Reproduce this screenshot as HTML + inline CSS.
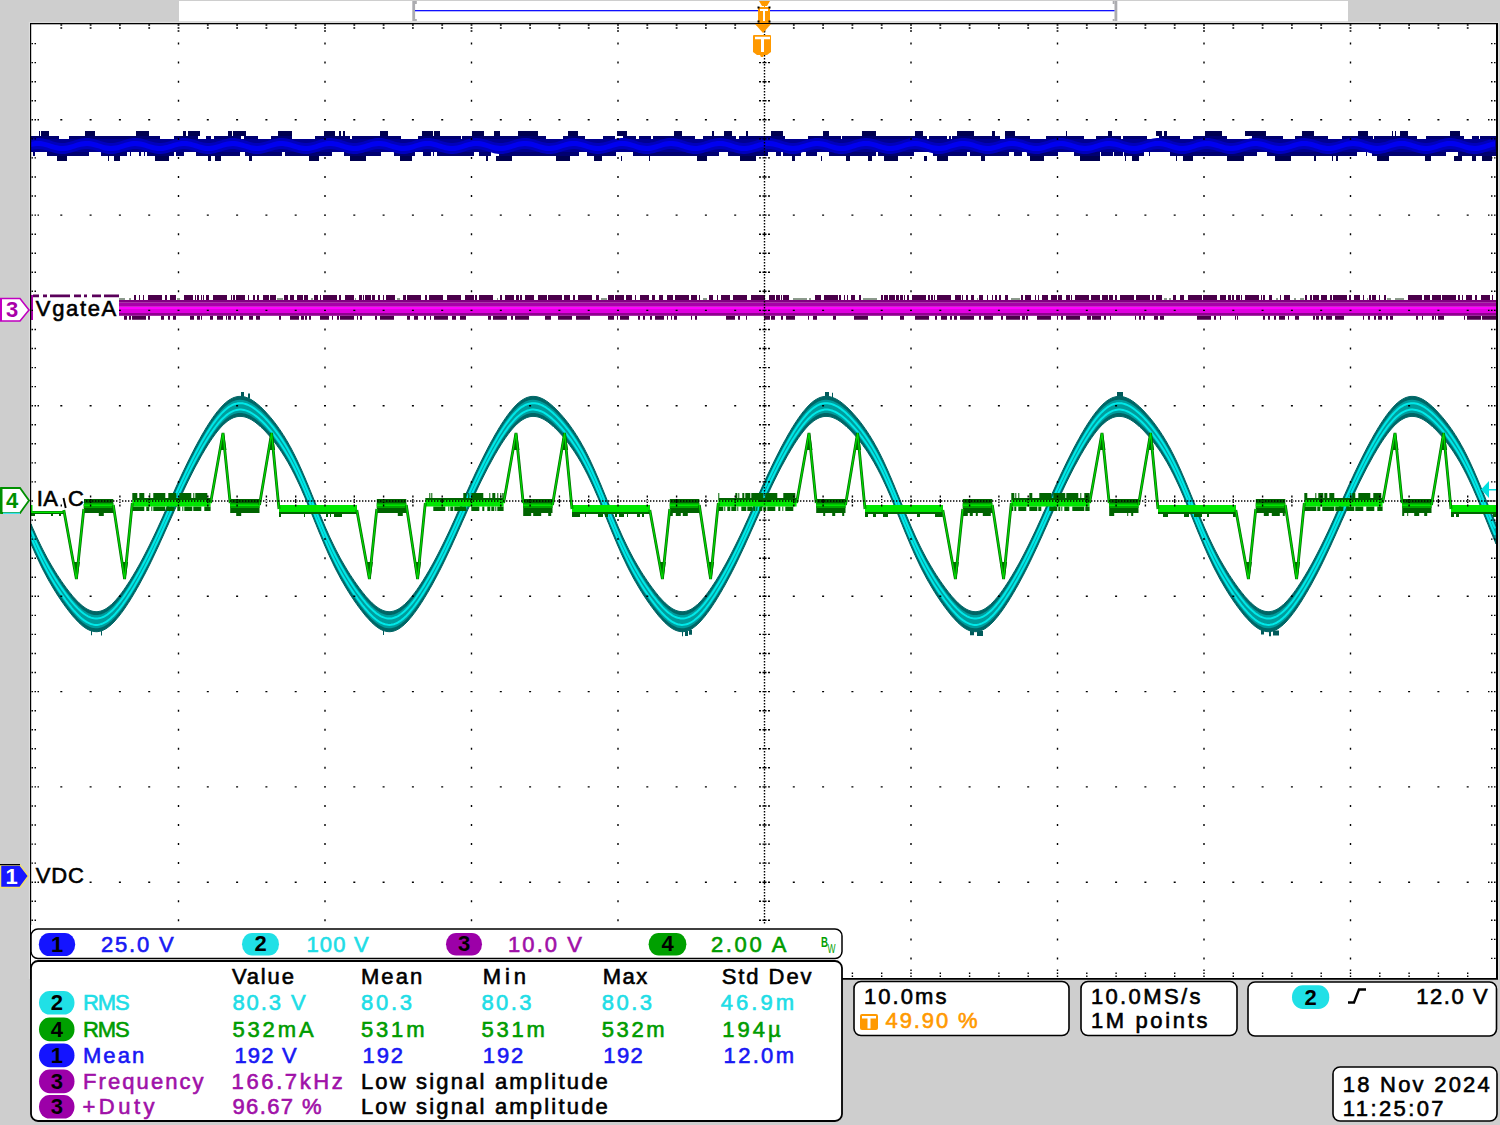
<!DOCTYPE html>
<html><head><meta charset="utf-8"><title>scope</title>
<style>
html,body{margin:0;padding:0;background:#cecece;}
body{width:1500px;height:1125px;overflow:hidden;position:relative;}
svg{position:absolute;left:0;top:0;display:block;}
text{font-family:"Liberation Sans",sans-serif;}
</style></head><body>
<svg width="1500" height="1125" viewBox="0 0 1500 1125"><rect x="0" y="0" width="1500" height="1125" fill="#cecece"/><rect x="179" y="1" width="1169" height="20" fill="#ffffff"/><rect x="179" y="21" width="1169" height="1" fill="#dcdcdc"/><rect x="412.3" y="1" width="2.8" height="20" fill="#acacb0"/><rect x="415" y="1" width="1.8" height="3" fill="#acacb0"/><rect x="415" y="19" width="1.8" height="2" fill="#acacb0"/><rect x="1114.5" y="1" width="2.8" height="20" fill="#acacb0"/><rect x="1112.7" y="1" width="1.8" height="3" fill="#acacb0"/><rect x="1112.7" y="19" width="1.8" height="2" fill="#acacb0"/><rect x="415" y="10" width="699.5" height="1.3" fill="#1010ff"/><rect x="30" y="23" width="1468" height="956" fill="#ffffff"/><rect x="29" y="21.8" width="1470" height="1.2" fill="#dddddd"/><rect x="28.8" y="22" width="1.2" height="957" fill="#dddddd"/><rect x="1498" y="22" width="1.2" height="957" fill="#dddddd"/><path fill="#000050" d="M39 131h1v5h-1zM41 131h2v5h-2zM43 131h4v5h-4zM47 131h2v5h-2zM85 131h10v5h-10zM136 131h3v5h-3zM139 131h10v5h-10zM183 131h1v5h-1zM184 131h2v5h-2zM188 131h4v5h-4zM192 131h8v5h-8zM228 131h4v5h-4zM233 131h4v5h-4zM237 131h1v5h-1zM238 131h8v5h-8zM278 131h4v5h-4zM282 131h6v5h-6zM288 131h1v5h-1zM289 131h3v5h-3zM324 131h8v5h-8zM332 131h3v5h-3zM339 131h2v5h-2zM343 131h2v5h-2zM380 131h8v5h-8zM422 131h1v5h-1zM423 131h2v5h-2zM425 131h1v5h-1zM426 131h1v5h-1zM427 131h6v5h-6zM434 131h6v5h-6zM472 131h3v5h-3zM475 131h1v5h-1zM476 131h8v5h-8zM494 131h6v5h-6zM518 131h10v5h-10zM528 131h10v5h-10zM568 131h10v5h-10zM617 131h3v5h-3zM620 131h1v5h-1zM621 131h2v5h-2zM623 131h4v5h-4zM674 131h8v5h-8zM712 131h2v5h-2zM724 131h8v5h-8zM746 131h2v5h-2zM771 131h6v5h-6zM777 131h6v5h-6zM823 131h6v5h-6zM862 131h6v5h-6zM868 131h8v5h-8zM915 131h8v5h-8zM957 131h3v5h-3zM960 131h6v5h-6zM966 131h8v5h-8zM992 131h3v5h-3zM1005 131h10v5h-10zM1066 131h1v5h-1zM1108 131h3v5h-3zM1111 131h1v5h-1zM1156 131h6v5h-6zM1164 131h3v5h-3zM1205 131h6v5h-6zM1211 131h3v5h-3zM1214 131h8v5h-8zM1245 131h2v5h-2zM1247 131h4v5h-4zM1251 131h3v5h-3zM1254 131h2v5h-2zM1256 131h10v5h-10zM1302 131h4v5h-4zM1306 131h8v5h-8zM1358 131h10v5h-10zM1392 131h1v5h-1zM1395 131h1v5h-1zM1400 131h8v5h-8zM1450 131h10v5h-10zM57 156h6v5h-6zM63 156h4v5h-4zM108 156h1v5h-1zM114 156h4v5h-4zM118 156h2v5h-2zM155 156h4v5h-4zM159 156h2v5h-2zM161 156h4v5h-4zM165 156h4v5h-4zM208 156h3v5h-3zM215 156h6v5h-6zM249 156h3v5h-3zM309 156h4v5h-4zM313 156h6v5h-6zM350 156h4v5h-4zM354 156h4v5h-4zM358 156h8v5h-8zM400 156h2v5h-2zM402 156h10v5h-10zM486 156h2v5h-2zM496 156h10v5h-10zM506 156h6v5h-6zM556 156h4v5h-4zM560 156h10v5h-10zM594 156h2v5h-2zM596 156h6v5h-6zM621 156h1v5h-1zM649 156h1v5h-1zM697 156h10v5h-10zM740 156h2v5h-2zM742 156h8v5h-8zM750 156h6v5h-6zM792 156h3v5h-3zM821 156h1v5h-1zM846 156h4v5h-4zM868 156h4v5h-4zM884 156h1v5h-1zM885 156h4v5h-4zM889 156h1v5h-1zM890 156h8v5h-8zM924 156h3v5h-3zM937 156h10v5h-10zM947 156h1v5h-1zM981 156h4v5h-4zM1030 156h8v5h-8zM1038 156h6v5h-6zM1080 156h10v5h-10zM1090 156h10v5h-10zM1125 156h1v5h-1zM1132 156h3v5h-3zM1135 156h3v5h-3zM1138 156h1v5h-1zM1176 156h1v5h-1zM1183 156h3v5h-3zM1186 156h3v5h-3zM1189 156h1v5h-1zM1190 156h3v5h-3zM1227 156h2v5h-2zM1229 156h4v5h-4zM1233 156h1v5h-1zM1234 156h10v5h-10zM1275 156h10v5h-10zM1285 156h2v5h-2zM1287 156h4v5h-4zM1314 156h2v5h-2zM1332 156h1v5h-1zM1336 156h2v5h-2zM1377 156h4v5h-4zM1381 156h8v5h-8zM1425 156h6v5h-6zM1454 156h8v5h-8zM1472 156h4v5h-4zM1482 156h10v5h-10z"/><path fill="#000070" d="M31 136h2v3h-2zM33 136h12v3h-12zM45 136h8v3h-8zM53 136h1v3h-1zM54 136h5v3h-5zM69 136h5v3h-5zM74 136h1v3h-1zM75 136h5v3h-5zM80 136h5v3h-5zM85 136h12v3h-12zM97 136h12v3h-12zM109 136h12v3h-12zM121 136h12v3h-12zM133 136h1v3h-1zM134 136h5v3h-5zM139 136h2v3h-2zM141 136h1v3h-1zM142 136h12v3h-12zM154 136h1v3h-1zM155 136h5v3h-5zM174 136h1v3h-1zM175 136h8v3h-8zM183 136h2v3h-2zM185 136h8v3h-8zM193 136h5v3h-5zM206 136h5v3h-5zM214 136h2v3h-2zM216 136h1v3h-1zM217 136h5v3h-5zM222 136h3v3h-3zM225 136h5v3h-5zM230 136h3v3h-3zM233 136h8v3h-8zM244 136h5v3h-5zM249 136h8v3h-8zM257 136h1v3h-1zM271 136h3v3h-3zM274 136h3v3h-3zM277 136h3v3h-3zM280 136h1v3h-1zM281 136h2v3h-2zM283 136h1v3h-1zM284 136h8v3h-8zM315 136h12v3h-12zM327 136h2v3h-2zM329 136h12v3h-12zM341 136h8v3h-8zM349 136h1v3h-1zM352 136h1v3h-1zM353 136h1v3h-1zM354 136h3v3h-3zM357 136h3v3h-3zM360 136h5v3h-5zM365 136h8v3h-8zM373 136h3v3h-3zM376 136h5v3h-5zM381 136h1v3h-1zM382 136h2v3h-2zM384 136h5v3h-5zM389 136h12v3h-12zM418 136h1v3h-1zM419 136h8v3h-8zM427 136h8v3h-8zM435 136h5v3h-5zM440 136h8v3h-8zM448 136h2v3h-2zM450 136h1v3h-1zM451 136h8v3h-8zM459 136h2v3h-2zM462 136h1v3h-1zM463 136h8v3h-8zM471 136h2v3h-2zM473 136h2v3h-2zM475 136h12v3h-12zM487 136h12v3h-12zM499 136h8v3h-8zM507 136h3v3h-3zM510 136h12v3h-12zM522 136h12v3h-12zM534 136h12v3h-12zM563 136h1v3h-1zM564 136h5v3h-5zM569 136h1v3h-1zM570 136h12v3h-12zM582 136h3v3h-3zM603 136h12v3h-12zM623 136h3v3h-3zM626 136h2v3h-2zM628 136h8v3h-8zM639 136h12v3h-12zM653 136h3v3h-3zM656 136h5v3h-5zM661 136h2v3h-2zM663 136h12v3h-12zM675 136h12v3h-12zM687 136h8v3h-8zM703 136h1v3h-1zM704 136h12v3h-12zM716 136h3v3h-3zM719 136h5v3h-5zM724 136h1v3h-1zM725 136h2v3h-2zM727 136h1v3h-1zM728 136h8v3h-8zM739 136h12v3h-12zM751 136h1v3h-1zM752 136h12v3h-12zM764 136h12v3h-12zM776 136h1v3h-1zM777 136h8v3h-8zM808 136h1v3h-1zM809 136h2v3h-2zM811 136h1v3h-1zM812 136h12v3h-12zM824 136h12v3h-12zM836 136h5v3h-5zM842 136h12v3h-12zM854 136h3v3h-3zM857 136h3v3h-3zM860 136h3v3h-3zM863 136h1v3h-1zM864 136h3v3h-3zM867 136h8v3h-8zM875 136h3v3h-3zM878 136h1v3h-1zM879 136h1v3h-1zM880 136h1v3h-1zM881 136h12v3h-12zM893 136h8v3h-8zM901 136h1v3h-1zM902 136h3v3h-3zM905 136h1v3h-1zM906 136h3v3h-3zM909 136h1v3h-1zM910 136h5v3h-5zM915 136h12v3h-12zM929 136h8v3h-8zM937 136h8v3h-8zM945 136h2v3h-2zM949 136h2v3h-2zM952 136h1v3h-1zM953 136h12v3h-12zM965 136h1v3h-1zM966 136h3v3h-3zM969 136h5v3h-5zM974 136h12v3h-12zM986 136h12v3h-12zM998 136h2v3h-2zM1005 136h8v3h-8zM1013 136h12v3h-12zM1025 136h5v3h-5zM1046 136h3v3h-3zM1049 136h8v3h-8zM1057 136h5v3h-5zM1062 136h12v3h-12zM1074 136h5v3h-5zM1079 136h3v3h-3zM1082 136h2v3h-2zM1096 136h2v3h-2zM1098 136h3v3h-3zM1101 136h12v3h-12zM1113 136h8v3h-8zM1123 136h12v3h-12zM1135 136h8v3h-8zM1143 136h2v3h-2zM1145 136h2v3h-2zM1159 136h2v3h-2zM1161 136h1v3h-1zM1162 136h2v3h-2zM1164 136h3v3h-3zM1167 136h5v3h-5zM1172 136h1v3h-1zM1173 136h1v3h-1zM1174 136h5v3h-5zM1179 136h1v3h-1zM1193 136h3v3h-3zM1196 136h2v3h-2zM1198 136h12v3h-12zM1210 136h12v3h-12zM1222 136h5v3h-5zM1252 136h12v3h-12zM1264 136h2v3h-2zM1266 136h12v3h-12zM1278 136h5v3h-5zM1295 136h5v3h-5zM1300 136h5v3h-5zM1305 136h12v3h-12zM1317 136h5v3h-5zM1322 136h1v3h-1zM1323 136h5v3h-5zM1342 136h3v3h-3zM1345 136h5v3h-5zM1350 136h1v3h-1zM1351 136h8v3h-8zM1359 136h12v3h-12zM1371 136h2v3h-2zM1374 136h5v3h-5zM1379 136h12v3h-12zM1391 136h1v3h-1zM1392 136h3v3h-3zM1395 136h5v3h-5zM1400 136h5v3h-5zM1405 136h12v3h-12zM1426 136h8v3h-8zM1434 136h1v3h-1zM1435 136h5v3h-5zM1440 136h1v3h-1zM1441 136h5v3h-5zM1446 136h12v3h-12zM1458 136h3v3h-3zM1461 136h3v3h-3zM1472 136h5v3h-5zM1477 136h2v3h-2zM1480 136h12v3h-12zM1492 136h4v3h-4zM33 152h2v4h-2zM47 152h5v4h-5zM52 152h3v4h-3zM55 152h12v4h-12zM67 152h5v4h-5zM72 152h2v4h-2zM74 152h5v4h-5zM79 152h5v4h-5zM84 152h5v4h-5zM101 152h3v4h-3zM104 152h3v4h-3zM107 152h5v4h-5zM112 152h12v4h-12zM124 152h3v4h-3zM130 152h1v4h-1zM139 152h2v4h-2zM144 152h1v4h-1zM147 152h12v4h-12zM159 152h8v4h-8zM167 152h2v4h-2zM169 152h2v4h-2zM171 152h3v4h-3zM176 152h8v4h-8zM196 152h1v4h-1zM197 152h8v4h-8zM205 152h3v4h-3zM208 152h12v4h-12zM220 152h1v4h-1zM221 152h5v4h-5zM226 152h1v4h-1zM227 152h3v4h-3zM230 152h2v4h-2zM232 152h8v4h-8zM245 152h12v4h-12zM257 152h5v4h-5zM262 152h8v4h-8zM270 152h1v4h-1zM271 152h3v4h-3zM274 152h8v4h-8zM285 152h3v4h-3zM288 152h12v4h-12zM300 152h12v4h-12zM312 152h12v4h-12zM324 152h8v4h-8zM344 152h3v4h-3zM347 152h1v4h-1zM348 152h5v4h-5zM353 152h2v4h-2zM355 152h12v4h-12zM367 152h2v4h-2zM369 152h12v4h-12zM394 152h2v4h-2zM396 152h3v4h-3zM399 152h8v4h-8zM407 152h3v4h-3zM410 152h5v4h-5zM423 152h8v4h-8zM433 152h1v4h-1zM437 152h2v4h-2zM439 152h12v4h-12zM451 152h1v4h-1zM452 152h8v4h-8zM460 152h8v4h-8zM468 152h5v4h-5zM473 152h1v4h-1zM479 152h12v4h-12zM499 152h8v4h-8zM507 152h2v4h-2zM509 152h12v4h-12zM521 152h12v4h-12zM533 152h1v4h-1zM534 152h5v4h-5zM539 152h2v4h-2zM541 152h2v4h-2zM543 152h5v4h-5zM548 152h12v4h-12zM560 152h2v4h-2zM562 152h8v4h-8zM570 152h3v4h-3zM573 152h1v4h-1zM574 152h5v4h-5zM587 152h1v4h-1zM588 152h8v4h-8zM596 152h1v4h-1zM597 152h5v4h-5zM602 152h5v4h-5zM607 152h1v4h-1zM608 152h8v4h-8zM633 152h8v4h-8zM641 152h12v4h-12zM653 152h2v4h-2zM655 152h5v4h-5zM660 152h12v4h-12zM672 152h1v4h-1zM673 152h1v4h-1zM674 152h1v4h-1zM675 152h8v4h-8zM683 152h12v4h-12zM695 152h1v4h-1zM696 152h12v4h-12zM708 152h2v4h-2zM710 152h1v4h-1zM711 152h8v4h-8zM728 152h1v4h-1zM729 152h12v4h-12zM741 152h8v4h-8zM749 152h3v4h-3zM752 152h8v4h-8zM760 152h5v4h-5zM765 152h3v4h-3zM776 152h5v4h-5zM783 152h1v4h-1zM784 152h12v4h-12zM796 152h5v4h-5zM806 152h8v4h-8zM814 152h3v4h-3zM829 152h8v4h-8zM837 152h8v4h-8zM845 152h1v4h-1zM846 152h8v4h-8zM854 152h8v4h-8zM862 152h2v4h-2zM864 152h12v4h-12zM878 152h3v4h-3zM881 152h3v4h-3zM884 152h5v4h-5zM889 152h1v4h-1zM890 152h2v4h-2zM892 152h8v4h-8zM900 152h8v4h-8zM908 152h5v4h-5zM913 152h1v4h-1zM933 152h2v4h-2zM935 152h1v4h-1zM936 152h5v4h-5zM941 152h3v4h-3zM944 152h1v4h-1zM945 152h5v4h-5zM950 152h8v4h-8zM958 152h1v4h-1zM959 152h8v4h-8zM970 152h8v4h-8zM978 152h8v4h-8zM986 152h2v4h-2zM988 152h1v4h-1zM989 152h12v4h-12zM1001 152h8v4h-8zM1014 152h2v4h-2zM1016 152h5v4h-5zM1021 152h1v4h-1zM1027 152h2v4h-2zM1029 152h1v4h-1zM1030 152h8v4h-8zM1038 152h1v4h-1zM1039 152h8v4h-8zM1047 152h8v4h-8zM1055 152h3v4h-3zM1074 152h3v4h-3zM1077 152h2v4h-2zM1079 152h1v4h-1zM1080 152h8v4h-8zM1088 152h12v4h-12zM1101 152h12v4h-12zM1114 152h1v4h-1zM1115 152h8v4h-8zM1124 152h12v4h-12zM1136 152h2v4h-2zM1138 152h2v4h-2zM1140 152h2v4h-2zM1142 152h2v4h-2zM1149 152h1v4h-1zM1170 152h5v4h-5zM1175 152h2v4h-2zM1177 152h1v4h-1zM1178 152h12v4h-12zM1190 152h8v4h-8zM1198 152h12v4h-12zM1210 152h3v4h-3zM1213 152h5v4h-5zM1218 152h5v4h-5zM1223 152h5v4h-5zM1228 152h2v4h-2zM1230 152h1v4h-1zM1231 152h2v4h-2zM1233 152h2v4h-2zM1235 152h2v4h-2zM1237 152h8v4h-8zM1245 152h12v4h-12zM1267 152h12v4h-12zM1279 152h3v4h-3zM1282 152h2v4h-2zM1284 152h12v4h-12zM1296 152h3v4h-3zM1299 152h1v4h-1zM1300 152h5v4h-5zM1305 152h2v4h-2zM1307 152h2v4h-2zM1309 152h5v4h-5zM1314 152h1v4h-1zM1315 152h3v4h-3zM1318 152h2v4h-2zM1320 152h1v4h-1zM1321 152h5v4h-5zM1326 152h8v4h-8zM1334 152h12v4h-12zM1346 152h8v4h-8zM1354 152h3v4h-3zM1366 152h1v4h-1zM1372 152h1v4h-1zM1373 152h3v4h-3zM1376 152h12v4h-12zM1388 152h8v4h-8zM1396 152h2v4h-2zM1398 152h8v4h-8zM1406 152h3v4h-3zM1409 152h5v4h-5zM1414 152h8v4h-8zM1422 152h2v4h-2zM1424 152h2v4h-2zM1426 152h2v4h-2zM1428 152h1v4h-1zM1429 152h12v4h-12zM1441 152h3v4h-3zM1444 152h2v4h-2zM1458 152h2v4h-2zM1460 152h2v4h-2zM1462 152h12v4h-12zM1474 152h5v4h-5zM1479 152h1v4h-1zM1480 152h3v4h-3zM1483 152h12v4h-12zM1495 152h1v4h-1z"/><rect x="31" y="139" width="1465" height="13" fill="#000090"/><path fill="#0000bc" d="M31 139L33 138.5L35 138.2L37 138L39 138L41 138.2L43 138.5L45 139L47 139.5L49 140.1L51 140.8L53 141.4L55 142L57 142.4L59 142.8L61 143L63 143L65 142.9L67 142.6L69 142.1L71 141.6L73 141L75 140.3L77 139.7L79 139.1L81 138.6L83 138.3L85 138.1L87 138L89 138.1L91 138.4L93 138.8L95 139.3L97 139.9L99 140.5L101 141.2L103 141.8L105 142.3L107 142.7L109 142.9L111 143L113 142.9L115 142.7L117 142.3L119 141.8L121 141.2L123 140.6L125 139.9L127 139.3L129 138.8L131 138.4L133 138.1L135 138L137 138.1L139 138.3L141 138.6L143 139.1L145 139.7L147 140.3L149 141L151 141.6L153 142.1L155 142.5L157 142.8L159 143L161 143L163 142.8L165 142.4L167 142L169 141.4L171 140.8L173 140.2L175 139.5L177 139L179 138.5L181 138.2L183 138L185 138L187 138.2L189 138.5L191 138.9L193 139.5L195 140.1L197 140.7L199 141.4L201 141.9L203 142.4L205 142.8L207 143L209 143L211 142.9L213 142.6L215 142.2L217 141.6L219 141L221 140.4L223 139.7L225 139.2L227 138.7L229 138.3L231 138.1L233 138L235 138.1L237 138.4L239 138.8L241 139.3L243 139.9L245 140.5L247 141.1L249 141.7L251 142.3L253 142.7L255 142.9L257 143L259 142.9L261 142.7L263 142.3L265 141.8L267 141.2L269 140.6L271 140L273 139.4L275 138.8L277 138.4L279 138.1L281 138L283 138L285 138.3L287 138.6L289 139.1L291 139.7L293 140.3L295 140.9L297 141.5L299 142.1L301 142.5L303 142.8L305 143L307 143L309 142.8L311 142.5L313 142L315 141.5L317 140.8L319 140.2L321 139.6L323 139L325 138.5L327 138.2L329 138L331 138L333 138.2L335 138.5L337 138.9L339 139.4L341 140.1L343 140.7L345 141.3L347 141.9L349 142.4L351 142.7L353 143L355 143L357 142.9L359 142.6L361 142.2L363 141.7L365 141.1L367 140.4L369 139.8L371 139.2L373 138.7L375 138.3L377 138.1L379 138L381 138.1L383 138.3L385 138.7L387 139.2L389 139.8L391 140.5L393 141.1L395 141.7L397 142.2L399 142.6L401 142.9L403 143L405 142.9L407 142.7L409 142.3L411 141.9L413 141.3L415 140.6L417 140L419 139.4L421 138.9L423 138.4L425 138.1L427 138L429 138L431 138.2L433 138.6L435 139.1L437 139.6L439 140.3L441 140.9L443 141.5L445 142.1L447 142.5L449 142.8L451 143L453 143L455 142.8L457 142.5L459 142L461 141.5L463 140.9L465 140.2L467 139.6L469 139L471 138.6L473 138.2L475 138L477 138L479 138.2L481 138.4L483 138.9L485 139.4L487 140L489 140.7L491 141.3L493 141.9L495 142.4L497 142.7L499 142.9L501 143L503 142.9L505 142.6L507 142.2L509 141.7L511 141.1L513 140.4L515 139.8L517 139.2L519 138.7L521 138.3L523 138.1L525 138L527 138.1L529 138.3L531 138.7L533 139.2L535 139.8L537 140.4L539 141.1L541 141.7L543 142.2L545 142.6L547 142.9L549 143L551 142.9L553 142.7L555 142.4L557 141.9L559 141.3L561 140.7L563 140L565 139.4L567 138.9L569 138.4L571 138.2L573 138L575 138L577 138.2L579 138.6L581 139L583 139.6L585 140.2L587 140.9L589 141.5L591 142L593 142.5L595 142.8L597 143L599 143L601 142.8L603 142.5L605 142.1L607 141.5L609 140.9L611 140.3L613 139.6L615 139.1L617 138.6L619 138.2L621 138L623 138L625 138.1L627 138.4L629 138.9L631 139.4L633 140L635 140.6L637 141.3L639 141.9L641 142.3L643 142.7L645 142.9L647 143L649 142.9L651 142.6L653 142.2L655 141.7L657 141.1L659 140.5L661 139.8L663 139.2L665 138.7L667 138.3L669 138.1L671 138L673 138.1L675 138.3L677 138.7L679 139.2L681 139.8L683 140.4L685 141.1L687 141.7L689 142.2L691 142.6L693 142.9L695 143L697 143L699 142.7L701 142.4L703 141.9L705 141.3L707 140.7L709 140.1L711 139.4L713 138.9L715 138.5L717 138.2L719 138L721 138L723 138.2L725 138.5L727 139L729 139.6L731 140.2L733 140.8L735 141.5L737 142L739 142.5L741 142.8L743 143L745 143L747 142.8L749 142.5L751 142.1L753 141.5L755 140.9L757 140.3L759 139.7L761 139.1L763 138.6L765 138.3L767 138L769 138L771 138.1L773 138.4L775 138.8L777 139.4L779 140L781 140.6L783 141.2L785 141.8L787 142.3L789 142.7L791 142.9L793 143L795 142.9L797 142.7L799 142.3L801 141.7L803 141.1L805 140.5L807 139.9L809 139.3L811 138.8L813 138.4L815 138.1L817 138L819 138.1L821 138.3L823 138.7L825 139.2L827 139.7L829 140.4L831 141L833 141.6L835 142.2L837 142.6L839 142.9L841 143L843 143L845 142.8L847 142.4L849 141.9L851 141.4L853 140.7L855 140.1L857 139.5L859 138.9L861 138.5L863 138.2L865 138L867 138L869 138.2L871 138.5L873 139L875 139.5L877 140.2L879 140.8L881 141.4L883 142L885 142.4L887 142.8L889 143L891 143L893 142.8L895 142.5L897 142.1L899 141.6L901 141L903 140.3L905 139.7L907 139.1L909 138.6L911 138.3L913 138.1L915 138L917 138.1L919 138.4L921 138.8L923 139.3L925 139.9L927 140.6L929 141.2L931 141.8L933 142.3L935 142.7L937 142.9L939 143L941 142.9L943 142.7L945 142.3L947 141.8L949 141.2L951 140.5L953 139.9L955 139.3L957 138.8L959 138.4L961 138.1L963 138L965 138.1L967 138.3L969 138.6L971 139.1L973 139.7L975 140.3L977 141L979 141.6L981 142.1L983 142.6L985 142.9L987 143L989 143L991 142.8L993 142.4L995 142L997 141.4L999 140.8L1001 140.1L1003 139.5L1005 139L1007 138.5L1009 138.2L1011 138L1013 138L1015 138.2L1017 138.5L1019 139L1021 139.5L1023 140.1L1025 140.8L1027 141.4L1029 142L1031 142.4L1033 142.8L1035 143L1037 143L1039 142.9L1041 142.6L1043 142.1L1045 141.6L1047 141L1049 140.3L1051 139.7L1053 139.1L1055 138.6L1057 138.3L1059 138.1L1061 138L1063 138.1L1065 138.4L1067 138.8L1069 139.3L1071 139.9L1073 140.5L1075 141.2L1077 141.8L1079 142.3L1081 142.7L1083 142.9L1085 143L1087 142.9L1089 142.7L1091 142.3L1093 141.8L1095 141.2L1097 140.6L1099 139.9L1101 139.3L1103 138.8L1105 138.4L1107 138.1L1109 138L1111 138.1L1113 138.3L1115 138.6L1117 139.1L1119 139.7L1121 140.3L1123 141L1125 141.6L1127 142.1L1129 142.5L1131 142.8L1133 143L1135 143L1137 142.8L1139 142.4L1141 142L1143 141.4L1145 140.8L1147 140.2L1149 139.5L1151 139L1153 138.5L1155 138.2L1157 138L1159 138L1161 138.2L1163 138.5L1165 138.9L1167 139.5L1169 140.1L1171 140.7L1173 141.4L1175 141.9L1177 142.4L1179 142.8L1181 143L1183 143L1185 142.9L1187 142.6L1189 142.2L1191 141.6L1193 141L1195 140.4L1197 139.7L1199 139.2L1201 138.7L1203 138.3L1205 138.1L1207 138L1209 138.1L1211 138.4L1213 138.8L1215 139.3L1217 139.9L1219 140.5L1221 141.1L1223 141.7L1225 142.3L1227 142.7L1229 142.9L1231 143L1233 142.9L1235 142.7L1237 142.3L1239 141.8L1241 141.2L1243 140.6L1245 140L1247 139.4L1249 138.8L1251 138.4L1253 138.1L1255 138L1257 138L1259 138.3L1261 138.6L1263 139.1L1265 139.7L1267 140.3L1269 140.9L1271 141.5L1273 142.1L1275 142.5L1277 142.8L1279 143L1281 143L1283 142.8L1285 142.5L1287 142L1289 141.5L1291 140.8L1293 140.2L1295 139.6L1297 139L1299 138.5L1301 138.2L1303 138L1305 138L1307 138.2L1309 138.5L1311 138.9L1313 139.4L1315 140.1L1317 140.7L1319 141.3L1321 141.9L1323 142.4L1325 142.7L1327 143L1329 143L1331 142.9L1333 142.6L1335 142.2L1337 141.7L1339 141.1L1341 140.4L1343 139.8L1345 139.2L1347 138.7L1349 138.3L1351 138.1L1353 138L1355 138.1L1357 138.3L1359 138.7L1361 139.2L1363 139.8L1365 140.5L1367 141.1L1369 141.7L1371 142.2L1373 142.6L1375 142.9L1377 143L1379 142.9L1381 142.7L1383 142.3L1385 141.9L1387 141.3L1389 140.6L1391 140L1393 139.4L1395 138.9L1397 138.4L1399 138.1L1401 138L1403 138L1405 138.2L1407 138.6L1409 139.1L1411 139.6L1413 140.3L1415 140.9L1417 141.5L1419 142.1L1421 142.5L1423 142.8L1425 143L1427 143L1429 142.8L1431 142.5L1433 142L1435 141.5L1437 140.9L1439 140.2L1441 139.6L1443 139L1445 138.6L1447 138.2L1449 138L1451 138L1453 138.2L1455 138.4L1457 138.9L1459 139.4L1461 140L1463 140.7L1465 141.3L1467 141.9L1469 142.4L1471 142.7L1473 142.9L1475 143L1477 142.9L1479 142.6L1481 142.2L1483 141.7L1485 141.1L1487 140.4L1489 139.8L1491 139.2L1493 138.7L1495 138.3L1495 149.3L1493 149.7L1491 150.2L1489 150.8L1487 151.4L1485 152.1L1483 152.7L1481 153.2L1479 153.6L1477 153.9L1475 154L1473 153.9L1471 153.7L1469 153.4L1467 152.9L1465 152.3L1463 151.7L1461 151L1459 150.4L1457 149.9L1455 149.4L1453 149.2L1451 149L1449 149L1447 149.2L1445 149.6L1443 150L1441 150.6L1439 151.2L1437 151.9L1435 152.5L1433 153L1431 153.5L1429 153.8L1427 154L1425 154L1423 153.8L1421 153.5L1419 153.1L1417 152.5L1415 151.9L1413 151.3L1411 150.6L1409 150.1L1407 149.6L1405 149.2L1403 149L1401 149L1399 149.1L1397 149.4L1395 149.9L1393 150.4L1391 151L1389 151.6L1387 152.3L1385 152.9L1383 153.3L1381 153.7L1379 153.9L1377 154L1375 153.9L1373 153.6L1371 153.2L1369 152.7L1367 152.1L1365 151.5L1363 150.8L1361 150.2L1359 149.7L1357 149.3L1355 149.1L1353 149L1351 149.1L1349 149.3L1347 149.7L1345 150.2L1343 150.8L1341 151.4L1339 152.1L1337 152.7L1335 153.2L1333 153.6L1331 153.9L1329 154L1327 154L1325 153.7L1323 153.4L1321 152.9L1319 152.3L1317 151.7L1315 151.1L1313 150.4L1311 149.9L1309 149.5L1307 149.2L1305 149L1303 149L1301 149.2L1299 149.5L1297 150L1295 150.6L1293 151.2L1291 151.8L1289 152.5L1287 153L1285 153.5L1283 153.8L1281 154L1279 154L1277 153.8L1275 153.5L1273 153.1L1271 152.5L1269 151.9L1267 151.3L1265 150.7L1263 150.1L1261 149.6L1259 149.3L1257 149L1255 149L1253 149.1L1251 149.4L1249 149.8L1247 150.4L1245 151L1243 151.6L1241 152.2L1239 152.8L1237 153.3L1235 153.7L1233 153.9L1231 154L1229 153.9L1227 153.7L1225 153.3L1223 152.7L1221 152.1L1219 151.5L1217 150.9L1215 150.3L1213 149.8L1211 149.4L1209 149.1L1207 149L1205 149.1L1203 149.3L1201 149.7L1199 150.2L1197 150.7L1195 151.4L1193 152L1191 152.6L1189 153.2L1187 153.6L1185 153.9L1183 154L1181 154L1179 153.8L1177 153.4L1175 152.9L1173 152.4L1171 151.7L1169 151.1L1167 150.5L1165 149.9L1163 149.5L1161 149.2L1159 149L1157 149L1155 149.2L1153 149.5L1151 150L1149 150.5L1147 151.2L1145 151.8L1143 152.4L1141 153L1139 153.4L1137 153.8L1135 154L1133 154L1131 153.8L1129 153.5L1127 153.1L1125 152.6L1123 152L1121 151.3L1119 150.7L1117 150.1L1115 149.6L1113 149.3L1111 149.1L1109 149L1107 149.1L1105 149.4L1103 149.8L1101 150.3L1099 150.9L1097 151.6L1095 152.2L1093 152.8L1091 153.3L1089 153.7L1087 153.9L1085 154L1083 153.9L1081 153.7L1079 153.3L1077 152.8L1075 152.2L1073 151.5L1071 150.9L1069 150.3L1067 149.8L1065 149.4L1063 149.1L1061 149L1059 149.1L1057 149.3L1055 149.6L1053 150.1L1051 150.7L1049 151.3L1047 152L1045 152.6L1043 153.1L1041 153.6L1039 153.9L1037 154L1035 154L1033 153.8L1031 153.4L1029 153L1027 152.4L1025 151.8L1023 151.1L1021 150.5L1019 150L1017 149.5L1015 149.2L1013 149L1011 149L1009 149.2L1007 149.5L1005 150L1003 150.5L1001 151.1L999 151.8L997 152.4L995 153L993 153.4L991 153.8L989 154L987 154L985 153.9L983 153.6L981 153.1L979 152.6L977 152L975 151.3L973 150.7L971 150.1L969 149.6L967 149.3L965 149.1L963 149L961 149.1L959 149.4L957 149.8L955 150.3L953 150.9L951 151.5L949 152.2L947 152.8L945 153.3L943 153.7L941 153.9L939 154L937 153.9L935 153.7L933 153.3L931 152.8L929 152.2L927 151.6L925 150.9L923 150.3L921 149.8L919 149.4L917 149.1L915 149L913 149.1L911 149.3L909 149.6L907 150.1L905 150.7L903 151.3L901 152L899 152.6L897 153.1L895 153.5L893 153.8L891 154L889 154L887 153.8L885 153.4L883 153L881 152.4L879 151.8L877 151.2L875 150.5L873 150L871 149.5L869 149.2L867 149L865 149L863 149.2L861 149.5L859 149.9L857 150.5L855 151.1L853 151.7L851 152.4L849 152.9L847 153.4L845 153.8L843 154L841 154L839 153.9L837 153.6L835 153.2L833 152.6L831 152L829 151.4L827 150.7L825 150.2L823 149.7L821 149.3L819 149.1L817 149L815 149.1L813 149.4L811 149.8L809 150.3L807 150.9L805 151.5L803 152.1L801 152.7L799 153.3L797 153.7L795 153.9L793 154L791 153.9L789 153.7L787 153.3L785 152.8L783 152.2L781 151.6L779 151L777 150.4L775 149.8L773 149.4L771 149.1L769 149L767 149L765 149.3L763 149.6L761 150.1L759 150.7L757 151.3L755 151.9L753 152.5L751 153.1L749 153.5L747 153.8L745 154L743 154L741 153.8L739 153.5L737 153L735 152.5L733 151.8L731 151.2L729 150.6L727 150L725 149.5L723 149.2L721 149L719 149L717 149.2L715 149.5L713 149.9L711 150.4L709 151.1L707 151.7L705 152.3L703 152.9L701 153.4L699 153.7L697 154L695 154L693 153.9L691 153.6L689 153.2L687 152.7L685 152.1L683 151.4L681 150.8L679 150.2L677 149.7L675 149.3L673 149.1L671 149L669 149.1L667 149.3L665 149.7L663 150.2L661 150.8L659 151.5L657 152.1L655 152.7L653 153.2L651 153.6L649 153.9L647 154L645 153.9L643 153.7L641 153.3L639 152.9L637 152.3L635 151.6L633 151L631 150.4L629 149.9L627 149.4L625 149.1L623 149L621 149L619 149.2L617 149.6L615 150.1L613 150.6L611 151.3L609 151.9L607 152.5L605 153.1L603 153.5L601 153.8L599 154L597 154L595 153.8L593 153.5L591 153L589 152.5L587 151.9L585 151.2L583 150.6L581 150L579 149.6L577 149.2L575 149L573 149L571 149.2L569 149.4L567 149.9L565 150.4L563 151L561 151.7L559 152.3L557 152.9L555 153.4L553 153.7L551 153.9L549 154L547 153.9L545 153.6L543 153.2L541 152.7L539 152.1L537 151.4L535 150.8L533 150.2L531 149.7L529 149.3L527 149.1L525 149L523 149.1L521 149.3L519 149.7L517 150.2L515 150.8L513 151.4L511 152.1L509 152.7L507 153.2L505 153.6L503 153.9L501 154L499 153.9L497 153.7L495 153.4L493 152.9L491 152.3L489 151.7L487 151L485 150.4L483 149.9L481 149.4L479 149.2L477 149L475 149L473 149.2L471 149.6L469 150L467 150.6L465 151.2L463 151.9L461 152.5L459 153L457 153.5L455 153.8L453 154L451 154L449 153.8L447 153.5L445 153.1L443 152.5L441 151.9L439 151.3L437 150.6L435 150.1L433 149.6L431 149.2L429 149L427 149L425 149.1L423 149.4L421 149.9L419 150.4L417 151L415 151.6L413 152.3L411 152.9L409 153.3L407 153.7L405 153.9L403 154L401 153.9L399 153.6L397 153.2L395 152.7L393 152.1L391 151.5L389 150.8L387 150.2L385 149.7L383 149.3L381 149.1L379 149L377 149.1L375 149.3L373 149.7L371 150.2L369 150.8L367 151.4L365 152.1L363 152.7L361 153.2L359 153.6L357 153.9L355 154L353 154L351 153.7L349 153.4L347 152.9L345 152.3L343 151.7L341 151.1L339 150.4L337 149.9L335 149.5L333 149.2L331 149L329 149L327 149.2L325 149.5L323 150L321 150.6L319 151.2L317 151.8L315 152.5L313 153L311 153.5L309 153.8L307 154L305 154L303 153.8L301 153.5L299 153.1L297 152.5L295 151.9L293 151.3L291 150.7L289 150.1L287 149.6L285 149.3L283 149L281 149L279 149.1L277 149.4L275 149.8L273 150.4L271 151L269 151.6L267 152.2L265 152.8L263 153.3L261 153.7L259 153.9L257 154L255 153.9L253 153.7L251 153.3L249 152.7L247 152.1L245 151.5L243 150.9L241 150.3L239 149.8L237 149.4L235 149.1L233 149L231 149.1L229 149.3L227 149.7L225 150.2L223 150.7L221 151.4L219 152L217 152.6L215 153.2L213 153.6L211 153.9L209 154L207 154L205 153.8L203 153.4L201 152.9L199 152.4L197 151.7L195 151.1L193 150.5L191 149.9L189 149.5L187 149.2L185 149L183 149L181 149.2L179 149.5L177 150L175 150.5L173 151.2L171 151.8L169 152.4L167 153L165 153.4L163 153.8L161 154L159 154L157 153.8L155 153.5L153 153.1L151 152.6L149 152L147 151.3L145 150.7L143 150.1L141 149.6L139 149.3L137 149.1L135 149L133 149.1L131 149.4L129 149.8L127 150.3L125 150.9L123 151.6L121 152.2L119 152.8L117 153.3L115 153.7L113 153.9L111 154L109 153.9L107 153.7L105 153.3L103 152.8L101 152.2L99 151.5L97 150.9L95 150.3L93 149.8L91 149.4L89 149.1L87 149L85 149.1L83 149.3L81 149.6L79 150.1L77 150.7L75 151.3L73 152L71 152.6L69 153.1L67 153.6L65 153.9L63 154L61 154L59 153.8L57 153.4L55 153L53 152.4L51 151.8L49 151.1L47 150.5L45 150L43 149.5L41 149.2L39 149L37 149L35 149.2L33 149.5L31 150Z"/><path fill="#0000f0" d="M31 141.9L33 141.4L35 141.1L37 140.9L39 140.9L41 141.1L43 141.4L45 141.9L47 142.4L49 143L51 143.7L53 144.3L55 144.9L57 145.3L59 145.7L61 145.9L63 145.9L65 145.8L67 145.5L69 145L71 144.5L73 143.9L75 143.2L77 142.6L79 142L81 141.5L83 141.2L85 141L87 140.9L89 141L91 141.3L93 141.7L95 142.2L97 142.8L99 143.4L101 144.1L103 144.7L105 145.2L107 145.6L109 145.8L111 145.9L113 145.8L115 145.6L117 145.2L119 144.7L121 144.1L123 143.5L125 142.8L127 142.2L129 141.7L131 141.3L133 141L135 140.9L137 141L139 141.2L141 141.5L143 142L145 142.6L147 143.2L149 143.9L151 144.5L153 145L155 145.4L157 145.7L159 145.9L161 145.9L163 145.7L165 145.3L167 144.9L169 144.3L171 143.7L173 143.1L175 142.4L177 141.9L179 141.4L181 141.1L183 140.9L185 140.9L187 141.1L189 141.4L191 141.8L193 142.4L195 143L197 143.6L199 144.3L201 144.8L203 145.3L205 145.7L207 145.9L209 145.9L211 145.8L213 145.5L215 145.1L217 144.5L219 143.9L221 143.3L223 142.6L225 142.1L227 141.6L229 141.2L231 141L233 140.9L235 141L237 141.3L239 141.7L241 142.2L243 142.8L245 143.4L247 144L249 144.6L251 145.2L253 145.6L255 145.8L257 145.9L259 145.8L261 145.6L263 145.2L265 144.7L267 144.1L269 143.5L271 142.9L273 142.3L275 141.7L277 141.3L279 141L281 140.9L283 140.9L285 141.2L287 141.5L289 142L291 142.6L293 143.2L295 143.8L297 144.4L299 145L301 145.4L303 145.7L305 145.9L307 145.9L309 145.7L311 145.4L313 144.9L315 144.4L317 143.7L319 143.1L321 142.5L323 141.9L325 141.4L327 141.1L329 140.9L331 140.9L333 141.1L335 141.4L337 141.8L339 142.3L341 143L343 143.6L345 144.2L347 144.8L349 145.3L351 145.6L353 145.9L355 145.9L357 145.8L359 145.5L361 145.1L363 144.6L365 144L367 143.3L369 142.7L371 142.1L373 141.6L375 141.2L377 141L379 140.9L381 141L383 141.2L385 141.6L387 142.1L389 142.7L391 143.4L393 144L395 144.6L397 145.1L399 145.5L401 145.8L403 145.9L405 145.8L407 145.6L409 145.2L411 144.8L413 144.2L415 143.5L417 142.9L419 142.3L421 141.8L423 141.3L425 141L427 140.9L429 140.9L431 141.1L433 141.5L435 142L437 142.5L439 143.2L441 143.8L443 144.4L445 145L447 145.4L449 145.7L451 145.9L453 145.9L455 145.7L457 145.4L459 144.9L461 144.4L463 143.8L465 143.1L467 142.5L469 141.9L471 141.5L473 141.1L475 140.9L477 140.9L479 141.1L481 141.3L483 141.8L485 142.3L487 142.9L489 143.6L491 144.2L493 144.8L495 145.3L497 145.6L499 145.8L501 145.9L503 145.8L505 145.5L507 145.1L509 144.6L511 144L513 143.3L515 142.7L517 142.1L519 141.6L521 141.2L523 141L525 140.9L527 141L529 141.2L531 141.6L533 142.1L535 142.7L537 143.3L539 144L541 144.6L543 145.1L545 145.5L547 145.8L549 145.9L551 145.8L553 145.6L555 145.3L557 144.8L559 144.2L561 143.6L563 142.9L565 142.3L567 141.8L569 141.3L571 141.1L573 140.9L575 140.9L577 141.1L579 141.5L581 141.9L583 142.5L585 143.1L587 143.8L589 144.4L591 144.9L593 145.4L595 145.7L597 145.9L599 145.9L601 145.7L603 145.4L605 145L607 144.4L609 143.8L611 143.2L613 142.5L615 142L617 141.5L619 141.1L621 140.9L623 140.9L625 141L627 141.3L629 141.8L631 142.3L633 142.9L635 143.5L637 144.2L639 144.8L641 145.2L643 145.6L645 145.8L647 145.9L649 145.8L651 145.5L653 145.1L655 144.6L657 144L659 143.4L661 142.7L663 142.1L665 141.6L667 141.2L669 141L671 140.9L673 141L675 141.2L677 141.6L679 142.1L681 142.7L683 143.3L685 144L687 144.6L689 145.1L691 145.5L693 145.8L695 145.9L697 145.9L699 145.6L701 145.3L703 144.8L705 144.2L707 143.6L709 143L711 142.3L713 141.8L715 141.4L717 141.1L719 140.9L721 140.9L723 141.1L725 141.4L727 141.9L729 142.5L731 143.1L733 143.7L735 144.4L737 144.9L739 145.4L741 145.7L743 145.9L745 145.9L747 145.7L749 145.4L751 145L753 144.4L755 143.8L757 143.2L759 142.6L761 142L763 141.5L765 141.2L767 140.9L769 140.9L771 141L773 141.3L775 141.7L777 142.3L779 142.9L781 143.5L783 144.1L785 144.7L787 145.2L789 145.6L791 145.8L793 145.9L795 145.8L797 145.6L799 145.2L801 144.6L803 144L805 143.4L807 142.8L809 142.2L811 141.7L813 141.3L815 141L817 140.9L819 141L821 141.2L823 141.6L825 142.1L827 142.6L829 143.3L831 143.9L833 144.5L835 145.1L837 145.5L839 145.8L841 145.9L843 145.9L845 145.7L847 145.3L849 144.8L851 144.3L853 143.6L855 143L857 142.4L859 141.8L861 141.4L863 141.1L865 140.9L867 140.9L869 141.1L871 141.4L873 141.9L875 142.4L877 143.1L879 143.7L881 144.3L883 144.9L885 145.3L887 145.7L889 145.9L891 145.9L893 145.7L895 145.4L897 145L899 144.5L901 143.9L903 143.2L905 142.6L907 142L909 141.5L911 141.2L913 141L915 140.9L917 141L919 141.3L921 141.7L923 142.2L925 142.8L927 143.5L929 144.1L931 144.7L933 145.2L935 145.6L937 145.8L939 145.9L941 145.8L943 145.6L945 145.2L947 144.7L949 144.1L951 143.4L953 142.8L955 142.2L957 141.7L959 141.3L961 141L963 140.9L965 141L967 141.2L969 141.5L971 142L973 142.6L975 143.2L977 143.9L979 144.5L981 145L983 145.5L985 145.8L987 145.9L989 145.9L991 145.7L993 145.3L995 144.9L997 144.3L999 143.7L1001 143L1003 142.4L1005 141.9L1007 141.4L1009 141.1L1011 140.9L1013 140.9L1015 141.1L1017 141.4L1019 141.9L1021 142.4L1023 143L1025 143.7L1027 144.3L1029 144.9L1031 145.3L1033 145.7L1035 145.9L1037 145.9L1039 145.8L1041 145.5L1043 145L1045 144.5L1047 143.9L1049 143.2L1051 142.6L1053 142L1055 141.5L1057 141.2L1059 141L1061 140.9L1063 141L1065 141.3L1067 141.7L1069 142.2L1071 142.8L1073 143.4L1075 144.1L1077 144.7L1079 145.2L1081 145.6L1083 145.8L1085 145.9L1087 145.8L1089 145.6L1091 145.2L1093 144.7L1095 144.1L1097 143.5L1099 142.8L1101 142.2L1103 141.7L1105 141.3L1107 141L1109 140.9L1111 141L1113 141.2L1115 141.5L1117 142L1119 142.6L1121 143.2L1123 143.9L1125 144.5L1127 145L1129 145.4L1131 145.7L1133 145.9L1135 145.9L1137 145.7L1139 145.3L1141 144.9L1143 144.3L1145 143.7L1147 143.1L1149 142.4L1151 141.9L1153 141.4L1155 141.1L1157 140.9L1159 140.9L1161 141.1L1163 141.4L1165 141.8L1167 142.4L1169 143L1171 143.6L1173 144.3L1175 144.8L1177 145.3L1179 145.7L1181 145.9L1183 145.9L1185 145.8L1187 145.5L1189 145.1L1191 144.5L1193 143.9L1195 143.3L1197 142.6L1199 142.1L1201 141.6L1203 141.2L1205 141L1207 140.9L1209 141L1211 141.3L1213 141.7L1215 142.2L1217 142.8L1219 143.4L1221 144L1223 144.6L1225 145.2L1227 145.6L1229 145.8L1231 145.9L1233 145.8L1235 145.6L1237 145.2L1239 144.7L1241 144.1L1243 143.5L1245 142.9L1247 142.3L1249 141.7L1251 141.3L1253 141L1255 140.9L1257 140.9L1259 141.2L1261 141.5L1263 142L1265 142.6L1267 143.2L1269 143.8L1271 144.4L1273 145L1275 145.4L1277 145.7L1279 145.9L1281 145.9L1283 145.7L1285 145.4L1287 144.9L1289 144.4L1291 143.7L1293 143.1L1295 142.5L1297 141.9L1299 141.4L1301 141.1L1303 140.9L1305 140.9L1307 141.1L1309 141.4L1311 141.8L1313 142.3L1315 143L1317 143.6L1319 144.2L1321 144.8L1323 145.3L1325 145.6L1327 145.9L1329 145.9L1331 145.8L1333 145.5L1335 145.1L1337 144.6L1339 144L1341 143.3L1343 142.7L1345 142.1L1347 141.6L1349 141.2L1351 141L1353 140.9L1355 141L1357 141.2L1359 141.6L1361 142.1L1363 142.7L1365 143.4L1367 144L1369 144.6L1371 145.1L1373 145.5L1375 145.8L1377 145.9L1379 145.8L1381 145.6L1383 145.2L1385 144.8L1387 144.2L1389 143.5L1391 142.9L1393 142.3L1395 141.8L1397 141.3L1399 141L1401 140.9L1403 140.9L1405 141.1L1407 141.5L1409 142L1411 142.5L1413 143.2L1415 143.8L1417 144.4L1419 145L1421 145.4L1423 145.7L1425 145.9L1427 145.9L1429 145.7L1431 145.4L1433 144.9L1435 144.4L1437 143.8L1439 143.1L1441 142.5L1443 141.9L1445 141.5L1447 141.1L1449 140.9L1451 140.9L1453 141.1L1455 141.3L1457 141.8L1459 142.3L1461 142.9L1463 143.6L1465 144.2L1467 144.8L1469 145.3L1471 145.6L1473 145.8L1475 145.9L1477 145.8L1479 145.5L1481 145.1L1483 144.6L1485 144L1487 143.3L1489 142.7L1491 142.1L1493 141.6L1495 141.2L1495 146.4L1493 146.8L1491 147.3L1489 147.9L1487 148.5L1485 149.2L1483 149.8L1481 150.3L1479 150.7L1477 151L1475 151.1L1473 151L1471 150.8L1469 150.5L1467 150L1465 149.4L1463 148.8L1461 148.1L1459 147.5L1457 147L1455 146.5L1453 146.3L1451 146.1L1449 146.1L1447 146.3L1445 146.7L1443 147.1L1441 147.7L1439 148.3L1437 149L1435 149.6L1433 150.1L1431 150.6L1429 150.9L1427 151.1L1425 151.1L1423 150.9L1421 150.6L1419 150.2L1417 149.6L1415 149L1413 148.4L1411 147.7L1409 147.2L1407 146.7L1405 146.3L1403 146.1L1401 146.1L1399 146.2L1397 146.5L1395 147L1393 147.5L1391 148.1L1389 148.7L1387 149.4L1385 150L1383 150.4L1381 150.8L1379 151L1377 151.1L1375 151L1373 150.7L1371 150.3L1369 149.8L1367 149.2L1365 148.6L1363 147.9L1361 147.3L1359 146.8L1357 146.4L1355 146.2L1353 146.1L1351 146.2L1349 146.4L1347 146.8L1345 147.3L1343 147.9L1341 148.5L1339 149.2L1337 149.8L1335 150.3L1333 150.7L1331 151L1329 151.1L1327 151.1L1325 150.8L1323 150.5L1321 150L1319 149.4L1317 148.8L1315 148.2L1313 147.5L1311 147L1309 146.6L1307 146.3L1305 146.1L1303 146.1L1301 146.3L1299 146.6L1297 147.1L1295 147.7L1293 148.3L1291 148.9L1289 149.6L1287 150.1L1285 150.6L1283 150.9L1281 151.1L1279 151.1L1277 150.9L1275 150.6L1273 150.2L1271 149.6L1269 149L1267 148.4L1265 147.8L1263 147.2L1261 146.7L1259 146.4L1257 146.1L1255 146.1L1253 146.2L1251 146.5L1249 146.9L1247 147.5L1245 148.1L1243 148.7L1241 149.3L1239 149.9L1237 150.4L1235 150.8L1233 151L1231 151.1L1229 151L1227 150.8L1225 150.4L1223 149.8L1221 149.2L1219 148.6L1217 148L1215 147.4L1213 146.9L1211 146.5L1209 146.2L1207 146.1L1205 146.2L1203 146.4L1201 146.8L1199 147.3L1197 147.8L1195 148.5L1193 149.1L1191 149.7L1189 150.3L1187 150.7L1185 151L1183 151.1L1181 151.1L1179 150.9L1177 150.5L1175 150L1173 149.5L1171 148.8L1169 148.2L1167 147.6L1165 147L1163 146.6L1161 146.3L1159 146.1L1157 146.1L1155 146.3L1153 146.6L1151 147.1L1149 147.6L1147 148.3L1145 148.9L1143 149.5L1141 150.1L1139 150.5L1137 150.9L1135 151.1L1133 151.1L1131 150.9L1129 150.6L1127 150.2L1125 149.7L1123 149.1L1121 148.4L1119 147.8L1117 147.2L1115 146.7L1113 146.4L1111 146.2L1109 146.1L1107 146.2L1105 146.5L1103 146.9L1101 147.4L1099 148L1097 148.7L1095 149.3L1093 149.9L1091 150.4L1089 150.8L1087 151L1085 151.1L1083 151L1081 150.8L1079 150.4L1077 149.9L1075 149.3L1073 148.6L1071 148L1069 147.4L1067 146.9L1065 146.5L1063 146.2L1061 146.1L1059 146.2L1057 146.4L1055 146.7L1053 147.2L1051 147.8L1049 148.4L1047 149.1L1045 149.7L1043 150.2L1041 150.7L1039 151L1037 151.1L1035 151.1L1033 150.9L1031 150.5L1029 150.1L1027 149.5L1025 148.9L1023 148.2L1021 147.6L1019 147.1L1017 146.6L1015 146.3L1013 146.1L1011 146.1L1009 146.3L1007 146.6L1005 147.1L1003 147.6L1001 148.2L999 148.9L997 149.5L995 150.1L993 150.5L991 150.9L989 151.1L987 151.1L985 151L983 150.7L981 150.2L979 149.7L977 149.1L975 148.4L973 147.8L971 147.2L969 146.7L967 146.4L965 146.2L963 146.1L961 146.2L959 146.5L957 146.9L955 147.4L953 148L951 148.6L949 149.3L947 149.9L945 150.4L943 150.8L941 151L939 151.1L937 151L935 150.8L933 150.4L931 149.9L929 149.3L927 148.7L925 148L923 147.4L921 146.9L919 146.5L917 146.2L915 146.1L913 146.2L911 146.4L909 146.7L907 147.2L905 147.8L903 148.4L901 149.1L899 149.7L897 150.2L895 150.6L893 150.9L891 151.1L889 151.1L887 150.9L885 150.5L883 150.1L881 149.5L879 148.9L877 148.3L875 147.6L873 147.1L871 146.6L869 146.3L867 146.1L865 146.1L863 146.3L861 146.6L859 147L857 147.6L855 148.2L853 148.8L851 149.5L849 150L847 150.5L845 150.9L843 151.1L841 151.1L839 151L837 150.7L835 150.3L833 149.7L831 149.1L829 148.5L827 147.8L825 147.3L823 146.8L821 146.4L819 146.2L817 146.1L815 146.2L813 146.5L811 146.9L809 147.4L807 148L805 148.6L803 149.2L801 149.8L799 150.4L797 150.8L795 151L793 151.1L791 151L789 150.8L787 150.4L785 149.9L783 149.3L781 148.7L779 148.1L777 147.5L775 146.9L773 146.5L771 146.2L769 146.1L767 146.1L765 146.4L763 146.7L761 147.2L759 147.8L757 148.4L755 149L753 149.6L751 150.2L749 150.6L747 150.9L745 151.1L743 151.1L741 150.9L739 150.6L737 150.1L735 149.6L733 148.9L731 148.3L729 147.7L727 147.1L725 146.6L723 146.3L721 146.1L719 146.1L717 146.3L715 146.6L713 147L711 147.5L709 148.2L707 148.8L705 149.4L703 150L701 150.5L699 150.8L697 151.1L695 151.1L693 151L691 150.7L689 150.3L687 149.8L685 149.2L683 148.5L681 147.9L679 147.3L677 146.8L675 146.4L673 146.2L671 146.1L669 146.2L667 146.4L665 146.8L663 147.3L661 147.9L659 148.6L657 149.2L655 149.8L653 150.3L651 150.7L649 151L647 151.1L645 151L643 150.8L641 150.4L639 150L637 149.4L635 148.7L633 148.1L631 147.5L629 147L627 146.5L625 146.2L623 146.1L621 146.1L619 146.3L617 146.7L615 147.2L613 147.7L611 148.4L609 149L607 149.6L605 150.2L603 150.6L601 150.9L599 151.1L597 151.1L595 150.9L593 150.6L591 150.1L589 149.6L587 149L585 148.3L583 147.7L581 147.1L579 146.7L577 146.3L575 146.1L573 146.1L571 146.3L569 146.5L567 147L565 147.5L563 148.1L561 148.8L559 149.4L557 150L555 150.5L553 150.8L551 151L549 151.1L547 151L545 150.7L543 150.3L541 149.8L539 149.2L537 148.5L535 147.9L533 147.3L531 146.8L529 146.4L527 146.2L525 146.1L523 146.2L521 146.4L519 146.8L517 147.3L515 147.9L513 148.5L511 149.2L509 149.8L507 150.3L505 150.7L503 151L501 151.1L499 151L497 150.8L495 150.5L493 150L491 149.4L489 148.8L487 148.1L485 147.5L483 147L481 146.5L479 146.3L477 146.1L475 146.1L473 146.3L471 146.7L469 147.1L467 147.7L465 148.3L463 149L461 149.6L459 150.1L457 150.6L455 150.9L453 151.1L451 151.1L449 150.9L447 150.6L445 150.2L443 149.6L441 149L439 148.4L437 147.7L435 147.2L433 146.7L431 146.3L429 146.1L427 146.1L425 146.2L423 146.5L421 147L419 147.5L417 148.1L415 148.7L413 149.4L411 150L409 150.4L407 150.8L405 151L403 151.1L401 151L399 150.7L397 150.3L395 149.8L393 149.2L391 148.6L389 147.9L387 147.3L385 146.8L383 146.4L381 146.2L379 146.1L377 146.2L375 146.4L373 146.8L371 147.3L369 147.9L367 148.5L365 149.2L363 149.8L361 150.3L359 150.7L357 151L355 151.1L353 151.1L351 150.8L349 150.5L347 150L345 149.4L343 148.8L341 148.2L339 147.5L337 147L335 146.6L333 146.3L331 146.1L329 146.1L327 146.3L325 146.6L323 147.1L321 147.7L319 148.3L317 148.9L315 149.6L313 150.1L311 150.6L309 150.9L307 151.1L305 151.1L303 150.9L301 150.6L299 150.2L297 149.6L295 149L293 148.4L291 147.8L289 147.2L287 146.7L285 146.4L283 146.1L281 146.1L279 146.2L277 146.5L275 146.9L273 147.5L271 148.1L269 148.7L267 149.3L265 149.9L263 150.4L261 150.8L259 151L257 151.1L255 151L253 150.8L251 150.4L249 149.8L247 149.2L245 148.6L243 148L241 147.4L239 146.9L237 146.5L235 146.2L233 146.1L231 146.2L229 146.4L227 146.8L225 147.3L223 147.8L221 148.5L219 149.1L217 149.7L215 150.3L213 150.7L211 151L209 151.1L207 151.1L205 150.9L203 150.5L201 150L199 149.5L197 148.8L195 148.2L193 147.6L191 147L189 146.6L187 146.3L185 146.1L183 146.1L181 146.3L179 146.6L177 147.1L175 147.6L173 148.3L171 148.9L169 149.5L167 150.1L165 150.5L163 150.9L161 151.1L159 151.1L157 150.9L155 150.6L153 150.2L151 149.7L149 149.1L147 148.4L145 147.8L143 147.2L141 146.7L139 146.4L137 146.2L135 146.1L133 146.2L131 146.5L129 146.9L127 147.4L125 148L123 148.7L121 149.3L119 149.9L117 150.4L115 150.8L113 151L111 151.1L109 151L107 150.8L105 150.4L103 149.9L101 149.3L99 148.6L97 148L95 147.4L93 146.9L91 146.5L89 146.2L87 146.1L85 146.2L83 146.4L81 146.7L79 147.2L77 147.8L75 148.4L73 149.1L71 149.7L69 150.2L67 150.7L65 151L63 151.1L61 151.1L59 150.9L57 150.5L55 150.1L53 149.5L51 148.9L49 148.2L47 147.6L45 147.1L43 146.6L41 146.3L39 146.1L37 146.1L35 146.3L33 146.6L31 147.1Z"/><path fill="#8c9a8c" d="M119 298h6v2h-6zM129 298h2v2h-2zM177 298h3v2h-3zM277 298h6v2h-6zM311 298h2v2h-2zM355 298h1v2h-1zM397 298h3v2h-3zM497 298h1v2h-1zM601 298h6v2h-6zM703 298h4v2h-4zM793 298h14v2h-14zM809 298h2v2h-2zM863 298h14v2h-14zM977 298h1v2h-1zM1011 298h9v2h-9zM1164 298h3v2h-3zM1169 298h2v2h-2zM1276 298h2v2h-2zM1294 298h2v2h-2zM1300 298h4v2h-4zM1367 298h1v2h-1zM1387 298h4v2h-4zM1395 298h9v2h-9z"/><path fill="#4a004a" d="M134 295h2v5h-2zM139 295h1v5h-1zM143 295h1v5h-1zM148 295h14v5h-14zM165 295h2v5h-2zM170 295h6v5h-6zM184 295h9v5h-9zM195 295h1v5h-1zM197 295h2v5h-2zM201 295h1v5h-1zM203 295h1v5h-1zM206 295h3v5h-3zM213 295h14v5h-14zM231 295h1v5h-1zM233 295h2v5h-2zM236 295h9v5h-9zM248 295h1v5h-1zM253 295h2v5h-2zM257 295h2v5h-2zM263 295h6v5h-6zM270 295h6v5h-6zM284 295h4v5h-4zM290 295h4v5h-4zM297 295h6v5h-6zM304 295h4v5h-4zM314 295h4v5h-4zM320 295h1v5h-1zM323 295h14v5h-14zM339 295h2v5h-2zM345 295h9v5h-9zM359 295h3v5h-3zM363 295h1v5h-1zM365 295h6v5h-6zM372 295h3v5h-3zM378 295h2v5h-2zM383 295h1v5h-1zM386 295h9v5h-9zM403 295h3v5h-3zM407 295h14v5h-14zM425 295h2v5h-2zM429 295h14v5h-14zM447 295h14v5h-14zM465 295h9v5h-9zM475 295h2v5h-2zM479 295h14v5h-14zM500 295h2v5h-2zM505 295h9v5h-9zM516 295h3v5h-3zM520 295h2v5h-2zM525 295h9v5h-9zM538 295h9v5h-9zM548 295h14v5h-14zM564 295h6v5h-6zM573 295h2v5h-2zM578 295h14v5h-14zM596 295h3v5h-3zM608 295h6v5h-6zM615 295h9v5h-9zM626 295h6v5h-6zM635 295h1v5h-1zM640 295h9v5h-9zM652 295h3v5h-3zM659 295h4v5h-4zM667 295h6v5h-6zM675 295h14v5h-14zM691 295h6v5h-6zM699 295h1v5h-1zM709 295h4v5h-4zM717 295h1v5h-1zM721 295h9v5h-9zM733 295h14v5h-14zM751 295h14v5h-14zM769 295h6v5h-6zM776 295h4v5h-4zM781 295h1v5h-1zM783 295h6v5h-6zM815 295h6v5h-6zM824 295h14v5h-14zM839 295h2v5h-2zM844 295h1v5h-1zM847 295h1v5h-1zM851 295h4v5h-4zM859 295h2v5h-2zM881 295h2v5h-2zM884 295h4v5h-4zM889 295h6v5h-6zM896 295h3v5h-3zM900 295h3v5h-3zM904 295h1v5h-1zM907 295h2v5h-2zM912 295h14v5h-14zM928 295h2v5h-2zM931 295h2v5h-2zM934 295h1v5h-1zM937 295h14v5h-14zM955 295h6v5h-6zM962 295h1v5h-1zM966 295h2v5h-2zM971 295h3v5h-3zM979 295h4v5h-4zM987 295h1v5h-1zM992 295h1v5h-1zM995 295h2v5h-2zM999 295h2v5h-2zM1005 295h3v5h-3zM1021 295h2v5h-2zM1025 295h6v5h-6zM1035 295h1v5h-1zM1038 295h1v5h-1zM1042 295h6v5h-6zM1051 295h6v5h-6zM1058 295h4v5h-4zM1066 295h4v5h-4zM1071 295h1v5h-1zM1075 295h14v5h-14zM1091 295h9v5h-9zM1102 295h6v5h-6zM1109 295h4v5h-4zM1115 295h2v5h-2zM1120 295h14v5h-14zM1136 295h14v5h-14zM1152 295h2v5h-2zM1156 295h6v5h-6zM1173 295h3v5h-3zM1180 295h4v5h-4zM1188 295h14v5h-14zM1203 295h14v5h-14zM1220 295h6v5h-6zM1228 295h3v5h-3zM1232 295h2v5h-2zM1236 295h4v5h-4zM1241 295h1v5h-1zM1245 295h14v5h-14zM1261 295h1v5h-1zM1263 295h2v5h-2zM1269 295h3v5h-3zM1280 295h1v5h-1zM1284 295h6v5h-6zM1305 295h2v5h-2zM1310 295h2v5h-2zM1313 295h6v5h-6zM1321 295h6v5h-6zM1330 295h2v5h-2zM1333 295h14v5h-14zM1349 295h2v5h-2zM1354 295h6v5h-6zM1363 295h1v5h-1zM1369 295h2v5h-2zM1372 295h4v5h-4zM1379 295h1v5h-1zM1384 295h2v5h-2zM1408 295h14v5h-14zM1424 295h6v5h-6zM1432 295h9v5h-9zM1442 295h14v5h-14zM1458 295h2v5h-2zM1462 295h1v5h-1zM1466 295h6v5h-6zM1475 295h2v5h-2zM1481 295h9v5h-9zM1492 295h1v5h-1zM124 315.8h3v4h-3zM129 315.8h2v4h-2zM132 315.8h14v4h-14zM148 315.8h2v4h-2zM161 315.8h3v4h-3zM168 315.8h2v4h-2zM173 315.8h3v4h-3zM190 315.8h4v4h-4zM197 315.8h3v4h-3zM201 315.8h1v4h-1zM210 315.8h3v4h-3zM217 315.8h6v4h-6zM226 315.8h1v4h-1zM228 315.8h3v4h-3zM234 315.8h2v4h-2zM240 315.8h3v4h-3zM249 315.8h4v4h-4zM256 315.8h4v4h-4zM279 315.8h2v4h-2zM290 315.8h9v4h-9zM301 315.8h3v4h-3zM305 315.8h2v4h-2zM309 315.8h2v4h-2zM320 315.8h9v4h-9zM332 315.8h1v4h-1zM337 315.8h2v4h-2zM340 315.8h14v4h-14zM357 315.8h1v4h-1zM360 315.8h2v4h-2zM375 315.8h2v4h-2zM380 315.8h14v4h-14zM407 315.8h3v4h-3zM414 315.8h4v4h-4zM424 315.8h2v4h-2zM430 315.8h1v4h-1zM434 315.8h14v4h-14zM452 315.8h4v4h-4zM460 315.8h6v4h-6zM488 315.8h3v4h-3zM493 315.8h14v4h-14zM511 315.8h2v4h-2zM515 315.8h14v4h-14zM545 315.8h6v4h-6zM558 315.8h14v4h-14zM576 315.8h14v4h-14zM608 315.8h6v4h-6zM617 315.8h1v4h-1zM620 315.8h9v4h-9zM638 315.8h2v4h-2zM643 315.8h2v4h-2zM650 315.8h2v4h-2zM655 315.8h9v4h-9zM667 315.8h1v4h-1zM671 315.8h1v4h-1zM674 315.8h3v4h-3zM691 315.8h1v4h-1zM695 315.8h2v4h-2zM726 315.8h9v4h-9zM738 315.8h2v4h-2zM746 315.8h1v4h-1zM764 315.8h6v4h-6zM771 315.8h4v4h-4zM781 315.8h2v4h-2zM786 315.8h9v4h-9zM808 315.8h1v4h-1zM813 315.8h4v4h-4zM833 315.8h3v4h-3zM854 315.8h14v4h-14zM881 315.8h2v4h-2zM900 315.8h4v4h-4zM915 315.8h14v4h-14zM935 315.8h2v4h-2zM941 315.8h6v4h-6zM950 315.8h2v4h-2zM954 315.8h3v4h-3zM960 315.8h14v4h-14zM979 315.8h2v4h-2zM984 315.8h9v4h-9zM1001 315.8h2v4h-2zM1006 315.8h14v4h-14zM1022 315.8h3v4h-3zM1026 315.8h2v4h-2zM1037 315.8h14v4h-14zM1057 315.8h1v4h-1zM1061 315.8h2v4h-2zM1066 315.8h14v4h-14zM1087 315.8h4v4h-4zM1092 315.8h9v4h-9zM1104 315.8h2v4h-2zM1110 315.8h1v4h-1zM1135 315.8h1v4h-1zM1139 315.8h2v4h-2zM1143 315.8h2v4h-2zM1154 315.8h4v4h-4zM1160 315.8h4v4h-4zM1197 315.8h14v4h-14zM1214 315.8h2v4h-2zM1220 315.8h1v4h-1zM1235 315.8h1v4h-1zM1237 315.8h1v4h-1zM1263 315.8h2v4h-2zM1268 315.8h2v4h-2zM1274 315.8h2v4h-2zM1279 315.8h6v4h-6zM1288 315.8h1v4h-1zM1295 315.8h4v4h-4zM1313 315.8h2v4h-2zM1316 315.8h3v4h-3zM1321 315.8h2v4h-2zM1326 315.8h6v4h-6zM1335 315.8h9v4h-9zM1363 315.8h1v4h-1zM1368 315.8h2v4h-2zM1374 315.8h2v4h-2zM1378 315.8h4v4h-4zM1386 315.8h2v4h-2zM1390 315.8h3v4h-3zM1416 315.8h2v4h-2zM1422 315.8h1v4h-1zM1432 315.8h2v4h-2zM1435 315.8h1v4h-1zM1438 315.8h6v4h-6zM1464 315.8h1v4h-1zM1467 315.8h14v4h-14zM1482 315.8h14v4h-14z"/><rect x="119" y="300" width="1377" height="2.7" fill="#800080"/><rect x="119" y="302.7" width="1377" height="4.1" fill="#a800a8"/><rect x="119" y="306.8" width="1377" height="2.2" fill="#ff00ff"/><rect x="119" y="309" width="1377" height="4" fill="#e000e0"/><rect x="119" y="313" width="1377" height="2.8" fill="#900090"/><path fill="#5a005a" d="M33 294.5h6v3h-6zM43 294.5h4v3h-4zM50 294.5h20v3h-20zM74 294.5h7v3h-7zM84 294.5h3v3h-3zM92 294.5h9v3h-9zM104 294.5h15v3h-15z"/><rect x="31" y="295" width="2" height="25" fill="#b000b0"/><path fill="#005a5a" d="M91 630.3h1v5h-1zM101 630.5h1v5h-1zM241 391.9h3v5h-3zM248 393.6h2v5h-2zM383 629.9h1v5h-1zM682 631.2h1v5h-1zM685 630.9h3v5h-3zM689 629.7h3v5h-3zM825 391.9h4v5h-4zM832 392.8h1v5h-1zM970 630.3h4v5h-4zM977 631.1h6v5h-6zM1117 392h6v5h-6zM1261 629.5h3v5h-3zM1269 631.2h2v5h-2zM1273 630.5h6v5h-6z"/><path fill="#006666" stroke="#006666" stroke-width="1" stroke-linejoin="round" d="M31 523.9L32 526.3L33 528.6L34 530.8L35 533.1L36 535.3L37 537.5L38 539.6L39 541.7L40 543.8L41 545.9L42 547.9L43 549.9L44 551.8L45 553.7L46 555.6L47 557.5L48 559.3L49 561.1L50 562.8L51 564.5L52 566.2L53 567.9L54 569.6L55 571.2L56 572.8L57 574.4L58 575.9L59 577.4L60 578.9L61 580.4L62 581.9L63 583.3L64 584.7L65 586.1L66 587.5L67 588.8L68 590.1L69 591.4L70 592.7L71 593.9L72 595.2L73 596.4L74 597.5L75 598.6L76 599.7L77 600.8L78 601.8L79 602.8L80 603.7L81 604.6L82 605.5L83 606.3L84 607L85 607.7L86 608.4L87 609L88 609.5L89 610L90 610.4L91 610.8L92 611.1L93 611.3L94 611.5L95 611.6L96 611.7L97 611.7L98 611.6L99 611.4L100 611.2L101 611L102 610.6L103 610.2L104 609.8L105 609.2L106 608.7L107 608L108 607.3L109 606.5L110 605.7L111 604.9L112 603.9L113 603L114 602L115 600.9L116 599.8L117 598.6L118 597.4L119 596.2L120 594.9L121 593.6L122 592.3L123 590.9L124 589.5L125 588L126 586.6L127 585L128 583.5L129 582L130 580.4L131 578.8L132 577.1L133 575.5L134 573.8L135 572.1L136 570.4L137 568.6L138 566.9L139 565.1L140 563.3L141 561.4L142 559.6L143 557.7L144 555.8L145 553.9L146 551.9L147 550L148 548L149 546L150 544L151 541.9L152 539.9L153 537.8L154 535.7L155 533.6L156 531.5L157 529.3L158 527.2L159 525L160 522.8L161 520.6L162 518.4L163 516.2L164 513.9L165 511.7L166 509.5L167 507.2L168 505L169 502.7L170 500.5L171 498.3L172 496L173 493.8L174 491.5L175 489.3L176 487.1L177 484.9L178 482.7L179 480.5L180 478.3L181 476.2L182 474L183 471.9L184 469.8L185 467.7L186 465.6L187 463.5L188 461.4L189 459.4L190 457.4L191 455.4L192 453.4L193 451.5L194 449.5L195 447.6L196 445.7L197 443.9L198 442L199 440.2L200 438.4L201 436.6L202 434.8L203 433.1L204 431.4L205 429.7L206 428L207 426.4L208 424.8L209 423.2L210 421.7L211 420.2L212 418.7L213 417.3L214 415.9L215 414.5L216 413.2L217 411.9L218 410.7L219 409.5L220 408.3L221 407.2L222 406.1L223 405.1L224 404.1L225 403.2L226 402.4L227 401.5L228 400.8L229 400.1L230 399.5L231 398.9L232 398.4L233 397.9L234 397.5L235 397.2L236 396.9L237 396.7L238 396.5L239 396.4L240 396.4L241 396.4L242 396.5L243 396.6L244 396.8L245 397L246 397.3L247 397.7L248 398.1L249 398.5L250 399L251 399.5L252 400.1L253 400.8L254 401.4L255 402.1L256 402.9L257 403.7L258 404.5L259 405.4L260 406.2L261 407.2L262 408.1L263 409.1L264 410.1L265 411.1L266 412.2L267 413.3L268 414.4L269 415.5L270 416.7L271 417.9L272 419.1L273 420.3L274 421.6L275 422.9L276 424.2L277 425.6L278 427L279 428.4L280 429.8L281 431.3L282 432.8L283 434.4L284 435.9L285 437.6L286 439.2L287 440.9L288 442.6L289 444.4L290 446.2L291 448L292 449.9L293 451.9L294 453.8L295 455.8L296 457.9L297 459.9L298 462.1L299 464.2L300 466.4L301 468.6L302 470.9L303 473.2L304 475.5L305 477.8L306 480.2L307 482.6L308 485L309 487.4L310 489.9L311 492.3L312 494.8L313 497.2L314 499.7L315 502.2L316 504.6L317 507.1L318 509.6L319 512L320 514.4L321 516.8L322 519.2L323 521.6L324 523.9L325 526.3L326 528.6L327 530.8L328 533.1L329 535.3L330 537.5L331 539.6L332 541.7L333 543.8L334 545.9L335 547.9L336 549.9L337 551.8L338 553.7L339 555.6L340 557.5L341 559.3L342 561.1L343 562.8L344 564.5L345 566.2L346 567.9L347 569.6L348 571.2L349 572.8L350 574.4L351 575.9L352 577.4L353 578.9L354 580.4L355 581.9L356 583.3L357 584.7L358 586.1L359 587.5L360 588.8L361 590.1L362 591.4L363 592.7L364 593.9L365 595.2L366 596.4L367 597.5L368 598.6L369 599.7L370 600.8L371 601.8L372 602.8L373 603.7L374 604.6L375 605.5L376 606.3L377 607L378 607.7L379 608.4L380 609L381 609.5L382 610L383 610.4L384 610.8L385 611.1L386 611.3L387 611.5L388 611.6L389 611.7L390 611.7L391 611.6L392 611.4L393 611.2L394 611L395 610.6L396 610.2L397 609.8L398 609.2L399 608.7L400 608L401 607.3L402 606.5L403 605.7L404 604.9L405 603.9L406 603L407 602L408 600.9L409 599.8L410 598.6L411 597.4L412 596.2L413 594.9L414 593.6L415 592.3L416 590.9L417 589.5L418 588L419 586.6L420 585L421 583.5L422 582L423 580.4L424 578.8L425 577.1L426 575.5L427 573.8L428 572.1L429 570.4L430 568.6L431 566.9L432 565.1L433 563.3L434 561.4L435 559.6L436 557.7L437 555.8L438 553.9L439 551.9L440 550L441 548L442 546L443 544L444 541.9L445 539.9L446 537.8L447 535.7L448 533.6L449 531.5L450 529.3L451 527.2L452 525L453 522.8L454 520.6L455 518.4L456 516.2L457 513.9L458 511.7L459 509.5L460 507.2L461 505L462 502.7L463 500.5L464 498.3L465 496L466 493.8L467 491.5L468 489.3L469 487.1L470 484.9L471 482.7L472 480.5L473 478.3L474 476.2L475 474L476 471.9L477 469.8L478 467.7L479 465.6L480 463.5L481 461.4L482 459.4L483 457.4L484 455.4L485 453.4L486 451.5L487 449.5L488 447.6L489 445.7L490 443.9L491 442L492 440.2L493 438.4L494 436.6L495 434.8L496 433.1L497 431.4L498 429.7L499 428L500 426.4L501 424.8L502 423.2L503 421.7L504 420.2L505 418.7L506 417.3L507 415.9L508 414.5L509 413.2L510 411.9L511 410.7L512 409.5L513 408.3L514 407.2L515 406.1L516 405.1L517 404.1L518 403.2L519 402.4L520 401.5L521 400.8L522 400.1L523 399.5L524 398.9L525 398.4L526 397.9L527 397.5L528 397.2L529 396.9L530 396.7L531 396.5L532 396.4L533 396.4L534 396.4L535 396.5L536 396.6L537 396.8L538 397L539 397.3L540 397.7L541 398.1L542 398.5L543 399L544 399.5L545 400.1L546 400.8L547 401.4L548 402.1L549 402.9L550 403.7L551 404.5L552 405.4L553 406.2L554 407.2L555 408.1L556 409.1L557 410.1L558 411.1L559 412.2L560 413.3L561 414.4L562 415.5L563 416.7L564 417.9L565 419.1L566 420.3L567 421.6L568 422.9L569 424.2L570 425.6L571 427L572 428.4L573 429.8L574 431.3L575 432.8L576 434.4L577 435.9L578 437.6L579 439.2L580 440.9L581 442.6L582 444.4L583 446.2L584 448L585 449.9L586 451.9L587 453.8L588 455.8L589 457.9L590 459.9L591 462.1L592 464.2L593 466.4L594 468.6L595 470.9L596 473.2L597 475.5L598 477.8L599 480.2L600 482.6L601 485L602 487.4L603 489.9L604 492.3L605 494.8L606 497.2L607 499.7L608 502.2L609 504.6L610 507.1L611 509.6L612 512L613 514.4L614 516.8L615 519.2L616 521.6L617 523.9L618 526.3L619 528.6L620 530.8L621 533.1L622 535.3L623 537.5L624 539.6L625 541.7L626 543.8L627 545.9L628 547.9L629 549.9L630 551.8L631 553.7L632 555.6L633 557.5L634 559.3L635 561.1L636 562.8L637 564.5L638 566.2L639 567.9L640 569.6L641 571.2L642 572.8L643 574.4L644 575.9L645 577.4L646 578.9L647 580.4L648 581.9L649 583.3L650 584.7L651 586.1L652 587.5L653 588.8L654 590.1L655 591.4L656 592.7L657 593.9L658 595.2L659 596.4L660 597.5L661 598.6L662 599.7L663 600.8L664 601.8L665 602.8L666 603.7L667 604.6L668 605.5L669 606.3L670 607L671 607.7L672 608.4L673 609L674 609.5L675 610L676 610.4L677 610.8L678 611.1L679 611.3L680 611.5L681 611.6L682 611.7L683 611.7L684 611.6L685 611.4L686 611.2L687 611L688 610.6L689 610.2L690 609.8L691 609.2L692 608.7L693 608L694 607.3L695 606.5L696 605.7L697 604.9L698 603.9L699 603L700 602L701 600.9L702 599.8L703 598.6L704 597.4L705 596.2L706 594.9L707 593.6L708 592.3L709 590.9L710 589.5L711 588L712 586.6L713 585L714 583.5L715 582L716 580.4L717 578.8L718 577.1L719 575.5L720 573.8L721 572.1L722 570.4L723 568.6L724 566.9L725 565.1L726 563.3L727 561.4L728 559.6L729 557.7L730 555.8L731 553.9L732 551.9L733 550L734 548L735 546L736 544L737 541.9L738 539.9L739 537.8L740 535.7L741 533.6L742 531.5L743 529.3L744 527.2L745 525L746 522.8L747 520.6L748 518.4L749 516.2L750 513.9L751 511.7L752 509.5L753 507.2L754 505L755 502.7L756 500.5L757 498.3L758 496L759 493.8L760 491.5L761 489.3L762 487.1L763 484.9L764 482.7L765 480.5L766 478.3L767 476.2L768 474L769 471.9L770 469.8L771 467.7L772 465.6L773 463.5L774 461.4L775 459.4L776 457.4L777 455.4L778 453.4L779 451.5L780 449.5L781 447.6L782 445.7L783 443.9L784 442L785 440.2L786 438.4L787 436.6L788 434.8L789 433.1L790 431.4L791 429.7L792 428L793 426.4L794 424.8L795 423.2L796 421.7L797 420.2L798 418.7L799 417.3L800 415.9L801 414.5L802 413.2L803 411.9L804 410.7L805 409.5L806 408.3L807 407.2L808 406.1L809 405.1L810 404.1L811 403.2L812 402.4L813 401.5L814 400.8L815 400.1L816 399.5L817 398.9L818 398.4L819 397.9L820 397.5L821 397.2L822 396.9L823 396.7L824 396.5L825 396.4L826 396.4L827 396.4L828 396.5L829 396.6L830 396.8L831 397L832 397.3L833 397.7L834 398.1L835 398.5L836 399L837 399.5L838 400.1L839 400.8L840 401.4L841 402.1L842 402.9L843 403.7L844 404.5L845 405.4L846 406.2L847 407.2L848 408.1L849 409.1L850 410.1L851 411.1L852 412.2L853 413.3L854 414.4L855 415.5L856 416.7L857 417.9L858 419.1L859 420.3L860 421.6L861 422.9L862 424.2L863 425.6L864 427L865 428.4L866 429.8L867 431.3L868 432.8L869 434.4L870 435.9L871 437.6L872 439.2L873 440.9L874 442.6L875 444.4L876 446.2L877 448L878 449.9L879 451.9L880 453.8L881 455.8L882 457.9L883 459.9L884 462.1L885 464.2L886 466.4L887 468.6L888 470.9L889 473.2L890 475.5L891 477.8L892 480.2L893 482.6L894 485L895 487.4L896 489.9L897 492.3L898 494.8L899 497.2L900 499.7L901 502.2L902 504.6L903 507.1L904 509.6L905 512L906 514.4L907 516.8L908 519.2L909 521.6L910 523.9L911 526.3L912 528.6L913 530.8L914 533.1L915 535.3L916 537.5L917 539.6L918 541.7L919 543.8L920 545.9L921 547.9L922 549.9L923 551.8L924 553.7L925 555.6L926 557.5L927 559.3L928 561.1L929 562.8L930 564.5L931 566.2L932 567.9L933 569.6L934 571.2L935 572.8L936 574.4L937 575.9L938 577.4L939 578.9L940 580.4L941 581.9L942 583.3L943 584.7L944 586.1L945 587.5L946 588.8L947 590.1L948 591.4L949 592.7L950 593.9L951 595.2L952 596.4L953 597.5L954 598.6L955 599.7L956 600.8L957 601.8L958 602.8L959 603.7L960 604.6L961 605.5L962 606.3L963 607L964 607.7L965 608.4L966 609L967 609.5L968 610L969 610.4L970 610.8L971 611.1L972 611.3L973 611.5L974 611.6L975 611.7L976 611.7L977 611.6L978 611.4L979 611.2L980 611L981 610.6L982 610.2L983 609.8L984 609.2L985 608.7L986 608L987 607.3L988 606.5L989 605.7L990 604.9L991 603.9L992 603L993 602L994 600.9L995 599.8L996 598.6L997 597.4L998 596.2L999 594.9L1000 593.6L1001 592.3L1002 590.9L1003 589.5L1004 588L1005 586.6L1006 585L1007 583.5L1008 582L1009 580.4L1010 578.8L1011 577.1L1012 575.5L1013 573.8L1014 572.1L1015 570.4L1016 568.6L1017 566.9L1018 565.1L1019 563.3L1020 561.4L1021 559.6L1022 557.7L1023 555.8L1024 553.9L1025 551.9L1026 550L1027 548L1028 546L1029 544L1030 541.9L1031 539.9L1032 537.8L1033 535.7L1034 533.6L1035 531.5L1036 529.3L1037 527.2L1038 525L1039 522.8L1040 520.6L1041 518.4L1042 516.2L1043 513.9L1044 511.7L1045 509.5L1046 507.2L1047 505L1048 502.7L1049 500.5L1050 498.3L1051 496L1052 493.8L1053 491.5L1054 489.3L1055 487.1L1056 484.9L1057 482.7L1058 480.5L1059 478.3L1060 476.2L1061 474L1062 471.9L1063 469.8L1064 467.7L1065 465.6L1066 463.5L1067 461.4L1068 459.4L1069 457.4L1070 455.4L1071 453.4L1072 451.5L1073 449.5L1074 447.6L1075 445.7L1076 443.9L1077 442L1078 440.2L1079 438.4L1080 436.6L1081 434.8L1082 433.1L1083 431.4L1084 429.7L1085 428L1086 426.4L1087 424.8L1088 423.2L1089 421.7L1090 420.2L1091 418.7L1092 417.3L1093 415.9L1094 414.5L1095 413.2L1096 411.9L1097 410.7L1098 409.5L1099 408.3L1100 407.2L1101 406.1L1102 405.1L1103 404.1L1104 403.2L1105 402.4L1106 401.5L1107 400.8L1108 400.1L1109 399.5L1110 398.9L1111 398.4L1112 397.9L1113 397.5L1114 397.2L1115 396.9L1116 396.7L1117 396.5L1118 396.4L1119 396.4L1120 396.4L1121 396.5L1122 396.6L1123 396.8L1124 397L1125 397.3L1126 397.7L1127 398.1L1128 398.5L1129 399L1130 399.5L1131 400.1L1132 400.8L1133 401.4L1134 402.1L1135 402.9L1136 403.7L1137 404.5L1138 405.4L1139 406.2L1140 407.2L1141 408.1L1142 409.1L1143 410.1L1144 411.1L1145 412.2L1146 413.3L1147 414.4L1148 415.5L1149 416.7L1150 417.9L1151 419.1L1152 420.3L1153 421.6L1154 422.9L1155 424.2L1156 425.6L1157 427L1158 428.4L1159 429.8L1160 431.3L1161 432.8L1162 434.4L1163 435.9L1164 437.6L1165 439.2L1166 440.9L1167 442.6L1168 444.4L1169 446.2L1170 448L1171 449.9L1172 451.9L1173 453.8L1174 455.8L1175 457.9L1176 459.9L1177 462.1L1178 464.2L1179 466.4L1180 468.6L1181 470.9L1182 473.2L1183 475.5L1184 477.8L1185 480.2L1186 482.6L1187 485L1188 487.4L1189 489.9L1190 492.3L1191 494.8L1192 497.2L1193 499.7L1194 502.2L1195 504.6L1196 507.1L1197 509.6L1198 512L1199 514.4L1200 516.8L1201 519.2L1202 521.6L1203 523.9L1204 526.3L1205 528.6L1206 530.8L1207 533.1L1208 535.3L1209 537.5L1210 539.6L1211 541.7L1212 543.8L1213 545.9L1214 547.9L1215 549.9L1216 551.8L1217 553.7L1218 555.6L1219 557.5L1220 559.3L1221 561.1L1222 562.8L1223 564.5L1224 566.2L1225 567.9L1226 569.6L1227 571.2L1228 572.8L1229 574.4L1230 575.9L1231 577.4L1232 578.9L1233 580.4L1234 581.9L1235 583.3L1236 584.7L1237 586.1L1238 587.5L1239 588.8L1240 590.1L1241 591.4L1242 592.7L1243 593.9L1244 595.2L1245 596.4L1246 597.5L1247 598.6L1248 599.7L1249 600.8L1250 601.8L1251 602.8L1252 603.7L1253 604.6L1254 605.5L1255 606.3L1256 607L1257 607.7L1258 608.4L1259 609L1260 609.5L1261 610L1262 610.4L1263 610.8L1264 611.1L1265 611.3L1266 611.5L1267 611.6L1268 611.7L1269 611.7L1270 611.6L1271 611.4L1272 611.2L1273 611L1274 610.6L1275 610.2L1276 609.8L1277 609.2L1278 608.7L1279 608L1280 607.3L1281 606.5L1282 605.7L1283 604.9L1284 603.9L1285 603L1286 602L1287 600.9L1288 599.8L1289 598.6L1290 597.4L1291 596.2L1292 594.9L1293 593.6L1294 592.3L1295 590.9L1296 589.5L1297 588L1298 586.6L1299 585L1300 583.5L1301 582L1302 580.4L1303 578.8L1304 577.1L1305 575.5L1306 573.8L1307 572.1L1308 570.4L1309 568.6L1310 566.9L1311 565.1L1312 563.3L1313 561.4L1314 559.6L1315 557.7L1316 555.8L1317 553.9L1318 551.9L1319 550L1320 548L1321 546L1322 544L1323 541.9L1324 539.9L1325 537.8L1326 535.7L1327 533.6L1328 531.5L1329 529.3L1330 527.2L1331 525L1332 522.8L1333 520.6L1334 518.4L1335 516.2L1336 513.9L1337 511.7L1338 509.5L1339 507.2L1340 505L1341 502.7L1342 500.5L1343 498.3L1344 496L1345 493.8L1346 491.5L1347 489.3L1348 487.1L1349 484.9L1350 482.7L1351 480.5L1352 478.3L1353 476.2L1354 474L1355 471.9L1356 469.8L1357 467.7L1358 465.6L1359 463.5L1360 461.4L1361 459.4L1362 457.4L1363 455.4L1364 453.4L1365 451.5L1366 449.5L1367 447.6L1368 445.7L1369 443.9L1370 442L1371 440.2L1372 438.4L1373 436.6L1374 434.8L1375 433.1L1376 431.4L1377 429.7L1378 428L1379 426.4L1380 424.8L1381 423.2L1382 421.7L1383 420.2L1384 418.7L1385 417.3L1386 415.9L1387 414.5L1388 413.2L1389 411.9L1390 410.7L1391 409.5L1392 408.3L1393 407.2L1394 406.1L1395 405.1L1396 404.1L1397 403.2L1398 402.4L1399 401.5L1400 400.8L1401 400.1L1402 399.5L1403 398.9L1404 398.4L1405 397.9L1406 397.5L1407 397.2L1408 396.9L1409 396.7L1410 396.5L1411 396.4L1412 396.4L1413 396.4L1414 396.5L1415 396.6L1416 396.8L1417 397L1418 397.3L1419 397.7L1420 398.1L1421 398.5L1422 399L1423 399.5L1424 400.1L1425 400.8L1426 401.4L1427 402.1L1428 402.9L1429 403.7L1430 404.5L1431 405.4L1432 406.2L1433 407.2L1434 408.1L1435 409.1L1436 410.1L1437 411.1L1438 412.2L1439 413.3L1440 414.4L1441 415.5L1442 416.7L1443 417.9L1444 419.1L1445 420.3L1446 421.6L1447 422.9L1448 424.2L1449 425.6L1450 427L1451 428.4L1452 429.8L1453 431.3L1454 432.8L1455 434.4L1456 435.9L1457 437.6L1458 439.2L1459 440.9L1460 442.6L1461 444.4L1462 446.2L1463 448L1464 449.9L1465 451.9L1466 453.8L1467 455.8L1468 457.9L1469 459.9L1470 462.1L1471 464.2L1472 466.4L1473 468.6L1474 470.9L1475 473.2L1476 475.5L1477 477.8L1478 480.2L1479 482.6L1480 485L1481 487.4L1482 489.9L1483 492.3L1484 494.8L1485 497.2L1486 499.7L1487 502.2L1488 504.6L1489 507.1L1490 509.6L1491 512L1492 514.4L1493 516.8L1494 519.2L1495 521.6L1496 523.9L1496 543.9L1495 541.6L1494 539.2L1493 536.8L1492 534.4L1491 532L1490 529.6L1489 527.1L1488 524.6L1487 522.2L1486 519.7L1485 517.2L1484 514.8L1483 512.3L1482 509.9L1481 507.4L1480 505L1479 502.6L1478 500.2L1477 497.8L1476 495.5L1475 493.2L1474 490.9L1473 488.6L1472 486.4L1471 484.2L1470 482.1L1469 479.9L1468 477.9L1467 475.8L1466 473.8L1465 471.9L1464 469.9L1463 468L1462 466.2L1461 464.4L1460 462.6L1459 460.9L1458 459.2L1457 457.6L1456 455.9L1455 454.4L1454 452.8L1453 451.3L1452 449.8L1451 448.4L1450 447L1449 445.6L1448 444.2L1447 442.9L1446 441.6L1445 440.3L1444 439.1L1443 437.9L1442 436.7L1441 435.5L1440 434.4L1439 433.3L1438 432.2L1437 431.1L1436 430.1L1435 429.1L1434 428.1L1433 427.2L1432 426.2L1431 425.4L1430 424.5L1429 423.7L1428 422.9L1427 422.1L1426 421.4L1425 420.8L1424 420.1L1423 419.5L1422 419L1421 418.5L1420 418.1L1419 417.7L1418 417.3L1417 417L1416 416.8L1415 416.6L1414 416.5L1413 416.4L1412 416.4L1411 416.4L1410 416.5L1409 416.7L1408 416.9L1407 417.2L1406 417.5L1405 417.9L1404 418.4L1403 418.9L1402 419.5L1401 420.1L1400 420.8L1399 421.5L1398 422.4L1397 423.2L1396 424.1L1395 425.1L1394 426.1L1393 427.2L1392 428.3L1391 429.5L1390 430.7L1389 431.9L1388 433.2L1387 434.5L1386 435.9L1385 437.3L1384 438.7L1383 440.2L1382 441.7L1381 443.2L1380 444.8L1379 446.4L1378 448L1377 449.7L1376 451.4L1375 453.1L1374 454.8L1373 456.6L1372 458.4L1371 460.2L1370 462L1369 463.9L1368 465.7L1367 467.6L1366 469.5L1365 471.5L1364 473.4L1363 475.4L1362 477.4L1361 479.4L1360 481.4L1359 483.5L1358 485.6L1357 487.7L1356 489.8L1355 491.9L1354 494L1353 496.2L1352 498.3L1351 500.5L1350 502.7L1349 504.9L1348 507.1L1347 509.3L1346 511.5L1345 513.8L1344 516L1343 518.3L1342 520.5L1341 522.7L1340 525L1339 527.2L1338 529.5L1337 531.7L1336 533.9L1335 536.2L1334 538.4L1333 540.6L1332 542.8L1331 545L1330 547.2L1329 549.3L1328 551.5L1327 553.6L1326 555.7L1325 557.8L1324 559.9L1323 561.9L1322 564L1321 566L1320 568L1319 570L1318 571.9L1317 573.9L1316 575.8L1315 577.7L1314 579.6L1313 581.4L1312 583.3L1311 585.1L1310 586.9L1309 588.6L1308 590.4L1307 592.1L1306 593.8L1305 595.5L1304 597.1L1303 598.8L1302 600.4L1301 602L1300 603.5L1299 605L1298 606.6L1297 608L1296 609.5L1295 610.9L1294 612.3L1293 613.6L1292 614.9L1291 616.2L1290 617.4L1289 618.6L1288 619.8L1287 620.9L1286 622L1285 623L1284 623.9L1283 624.9L1282 625.7L1281 626.5L1280 627.3L1279 628L1278 628.7L1277 629.2L1276 629.8L1275 630.2L1274 630.6L1273 631L1272 631.2L1271 631.4L1270 631.6L1269 631.7L1268 631.7L1267 631.6L1266 631.5L1265 631.3L1264 631.1L1263 630.8L1262 630.4L1261 630L1260 629.5L1259 629L1258 628.4L1257 627.7L1256 627L1255 626.3L1254 625.5L1253 624.6L1252 623.7L1251 622.8L1250 621.8L1249 620.8L1248 619.7L1247 618.6L1246 617.5L1245 616.4L1244 615.2L1243 613.9L1242 612.7L1241 611.4L1240 610.1L1239 608.8L1238 607.5L1237 606.1L1236 604.7L1235 603.3L1234 601.9L1233 600.4L1232 598.9L1231 597.4L1230 595.9L1229 594.4L1228 592.8L1227 591.2L1226 589.6L1225 587.9L1224 586.2L1223 584.5L1222 582.8L1221 581.1L1220 579.3L1219 577.5L1218 575.6L1217 573.7L1216 571.8L1215 569.9L1214 567.9L1213 565.9L1212 563.8L1211 561.7L1210 559.6L1209 557.5L1208 555.3L1207 553.1L1206 550.8L1205 548.6L1204 546.3L1203 543.9L1202 541.6L1201 539.2L1200 536.8L1199 534.4L1198 532L1197 529.6L1196 527.1L1195 524.6L1194 522.2L1193 519.7L1192 517.2L1191 514.8L1190 512.3L1189 509.9L1188 507.4L1187 505L1186 502.6L1185 500.2L1184 497.8L1183 495.5L1182 493.2L1181 490.9L1180 488.6L1179 486.4L1178 484.2L1177 482.1L1176 479.9L1175 477.9L1174 475.8L1173 473.8L1172 471.9L1171 469.9L1170 468L1169 466.2L1168 464.4L1167 462.6L1166 460.9L1165 459.2L1164 457.6L1163 455.9L1162 454.4L1161 452.8L1160 451.3L1159 449.8L1158 448.4L1157 447L1156 445.6L1155 444.2L1154 442.9L1153 441.6L1152 440.3L1151 439.1L1150 437.9L1149 436.7L1148 435.5L1147 434.4L1146 433.3L1145 432.2L1144 431.1L1143 430.1L1142 429.1L1141 428.1L1140 427.2L1139 426.2L1138 425.4L1137 424.5L1136 423.7L1135 422.9L1134 422.1L1133 421.4L1132 420.8L1131 420.1L1130 419.5L1129 419L1128 418.5L1127 418.1L1126 417.7L1125 417.3L1124 417L1123 416.8L1122 416.6L1121 416.5L1120 416.4L1119 416.4L1118 416.4L1117 416.5L1116 416.7L1115 416.9L1114 417.2L1113 417.5L1112 417.9L1111 418.4L1110 418.9L1109 419.5L1108 420.1L1107 420.8L1106 421.5L1105 422.4L1104 423.2L1103 424.1L1102 425.1L1101 426.1L1100 427.2L1099 428.3L1098 429.5L1097 430.7L1096 431.9L1095 433.2L1094 434.5L1093 435.9L1092 437.3L1091 438.7L1090 440.2L1089 441.7L1088 443.2L1087 444.8L1086 446.4L1085 448L1084 449.7L1083 451.4L1082 453.1L1081 454.8L1080 456.6L1079 458.4L1078 460.2L1077 462L1076 463.9L1075 465.7L1074 467.6L1073 469.5L1072 471.5L1071 473.4L1070 475.4L1069 477.4L1068 479.4L1067 481.4L1066 483.5L1065 485.6L1064 487.7L1063 489.8L1062 491.9L1061 494L1060 496.2L1059 498.3L1058 500.5L1057 502.7L1056 504.9L1055 507.1L1054 509.3L1053 511.5L1052 513.8L1051 516L1050 518.3L1049 520.5L1048 522.7L1047 525L1046 527.2L1045 529.5L1044 531.7L1043 533.9L1042 536.2L1041 538.4L1040 540.6L1039 542.8L1038 545L1037 547.2L1036 549.3L1035 551.5L1034 553.6L1033 555.7L1032 557.8L1031 559.9L1030 561.9L1029 564L1028 566L1027 568L1026 570L1025 571.9L1024 573.9L1023 575.8L1022 577.7L1021 579.6L1020 581.4L1019 583.3L1018 585.1L1017 586.9L1016 588.6L1015 590.4L1014 592.1L1013 593.8L1012 595.5L1011 597.1L1010 598.8L1009 600.4L1008 602L1007 603.5L1006 605L1005 606.6L1004 608L1003 609.5L1002 610.9L1001 612.3L1000 613.6L999 614.9L998 616.2L997 617.4L996 618.6L995 619.8L994 620.9L993 622L992 623L991 623.9L990 624.9L989 625.7L988 626.5L987 627.3L986 628L985 628.7L984 629.2L983 629.8L982 630.2L981 630.6L980 631L979 631.2L978 631.4L977 631.6L976 631.7L975 631.7L974 631.6L973 631.5L972 631.3L971 631.1L970 630.8L969 630.4L968 630L967 629.5L966 629L965 628.4L964 627.7L963 627L962 626.3L961 625.5L960 624.6L959 623.7L958 622.8L957 621.8L956 620.8L955 619.7L954 618.6L953 617.5L952 616.4L951 615.2L950 613.9L949 612.7L948 611.4L947 610.1L946 608.8L945 607.5L944 606.1L943 604.7L942 603.3L941 601.9L940 600.4L939 598.9L938 597.4L937 595.9L936 594.4L935 592.8L934 591.2L933 589.6L932 587.9L931 586.2L930 584.5L929 582.8L928 581.1L927 579.3L926 577.5L925 575.6L924 573.7L923 571.8L922 569.9L921 567.9L920 565.9L919 563.8L918 561.7L917 559.6L916 557.5L915 555.3L914 553.1L913 550.8L912 548.6L911 546.3L910 543.9L909 541.6L908 539.2L907 536.8L906 534.4L905 532L904 529.6L903 527.1L902 524.6L901 522.2L900 519.7L899 517.2L898 514.8L897 512.3L896 509.9L895 507.4L894 505L893 502.6L892 500.2L891 497.8L890 495.5L889 493.2L888 490.9L887 488.6L886 486.4L885 484.2L884 482.1L883 479.9L882 477.9L881 475.8L880 473.8L879 471.9L878 469.9L877 468L876 466.2L875 464.4L874 462.6L873 460.9L872 459.2L871 457.6L870 455.9L869 454.4L868 452.8L867 451.3L866 449.8L865 448.4L864 447L863 445.6L862 444.2L861 442.9L860 441.6L859 440.3L858 439.1L857 437.9L856 436.7L855 435.5L854 434.4L853 433.3L852 432.2L851 431.1L850 430.1L849 429.1L848 428.1L847 427.2L846 426.2L845 425.4L844 424.5L843 423.7L842 422.9L841 422.1L840 421.4L839 420.8L838 420.1L837 419.5L836 419L835 418.5L834 418.1L833 417.7L832 417.3L831 417L830 416.8L829 416.6L828 416.5L827 416.4L826 416.4L825 416.4L824 416.5L823 416.7L822 416.9L821 417.2L820 417.5L819 417.9L818 418.4L817 418.9L816 419.5L815 420.1L814 420.8L813 421.5L812 422.4L811 423.2L810 424.1L809 425.1L808 426.1L807 427.2L806 428.3L805 429.5L804 430.7L803 431.9L802 433.2L801 434.5L800 435.9L799 437.3L798 438.7L797 440.2L796 441.7L795 443.2L794 444.8L793 446.4L792 448L791 449.7L790 451.4L789 453.1L788 454.8L787 456.6L786 458.4L785 460.2L784 462L783 463.9L782 465.7L781 467.6L780 469.5L779 471.5L778 473.4L777 475.4L776 477.4L775 479.4L774 481.4L773 483.5L772 485.6L771 487.7L770 489.8L769 491.9L768 494L767 496.2L766 498.3L765 500.5L764 502.7L763 504.9L762 507.1L761 509.3L760 511.5L759 513.8L758 516L757 518.3L756 520.5L755 522.7L754 525L753 527.2L752 529.5L751 531.7L750 533.9L749 536.2L748 538.4L747 540.6L746 542.8L745 545L744 547.2L743 549.3L742 551.5L741 553.6L740 555.7L739 557.8L738 559.9L737 561.9L736 564L735 566L734 568L733 570L732 571.9L731 573.9L730 575.8L729 577.7L728 579.6L727 581.4L726 583.3L725 585.1L724 586.9L723 588.6L722 590.4L721 592.1L720 593.8L719 595.5L718 597.1L717 598.8L716 600.4L715 602L714 603.5L713 605L712 606.6L711 608L710 609.5L709 610.9L708 612.3L707 613.6L706 614.9L705 616.2L704 617.4L703 618.6L702 619.8L701 620.9L700 622L699 623L698 623.9L697 624.9L696 625.7L695 626.5L694 627.3L693 628L692 628.7L691 629.2L690 629.8L689 630.2L688 630.6L687 631L686 631.2L685 631.4L684 631.6L683 631.7L682 631.7L681 631.6L680 631.5L679 631.3L678 631.1L677 630.8L676 630.4L675 630L674 629.5L673 629L672 628.4L671 627.7L670 627L669 626.3L668 625.5L667 624.6L666 623.7L665 622.8L664 621.8L663 620.8L662 619.7L661 618.6L660 617.5L659 616.4L658 615.2L657 613.9L656 612.7L655 611.4L654 610.1L653 608.8L652 607.5L651 606.1L650 604.7L649 603.3L648 601.9L647 600.4L646 598.9L645 597.4L644 595.9L643 594.4L642 592.8L641 591.2L640 589.6L639 587.9L638 586.2L637 584.5L636 582.8L635 581.1L634 579.3L633 577.5L632 575.6L631 573.7L630 571.8L629 569.9L628 567.9L627 565.9L626 563.8L625 561.7L624 559.6L623 557.5L622 555.3L621 553.1L620 550.8L619 548.6L618 546.3L617 543.9L616 541.6L615 539.2L614 536.8L613 534.4L612 532L611 529.6L610 527.1L609 524.6L608 522.2L607 519.7L606 517.2L605 514.8L604 512.3L603 509.9L602 507.4L601 505L600 502.6L599 500.2L598 497.8L597 495.5L596 493.2L595 490.9L594 488.6L593 486.4L592 484.2L591 482.1L590 479.9L589 477.9L588 475.8L587 473.8L586 471.9L585 469.9L584 468L583 466.2L582 464.4L581 462.6L580 460.9L579 459.2L578 457.6L577 455.9L576 454.4L575 452.8L574 451.3L573 449.8L572 448.4L571 447L570 445.6L569 444.2L568 442.9L567 441.6L566 440.3L565 439.1L564 437.9L563 436.7L562 435.5L561 434.4L560 433.3L559 432.2L558 431.1L557 430.1L556 429.1L555 428.1L554 427.2L553 426.2L552 425.4L551 424.5L550 423.7L549 422.9L548 422.1L547 421.4L546 420.8L545 420.1L544 419.5L543 419L542 418.5L541 418.1L540 417.7L539 417.3L538 417L537 416.8L536 416.6L535 416.5L534 416.4L533 416.4L532 416.4L531 416.5L530 416.7L529 416.9L528 417.2L527 417.5L526 417.9L525 418.4L524 418.9L523 419.5L522 420.1L521 420.8L520 421.5L519 422.4L518 423.2L517 424.1L516 425.1L515 426.1L514 427.2L513 428.3L512 429.5L511 430.7L510 431.9L509 433.2L508 434.5L507 435.9L506 437.3L505 438.7L504 440.2L503 441.7L502 443.2L501 444.8L500 446.4L499 448L498 449.7L497 451.4L496 453.1L495 454.8L494 456.6L493 458.4L492 460.2L491 462L490 463.9L489 465.7L488 467.6L487 469.5L486 471.5L485 473.4L484 475.4L483 477.4L482 479.4L481 481.4L480 483.5L479 485.6L478 487.7L477 489.8L476 491.9L475 494L474 496.2L473 498.3L472 500.5L471 502.7L470 504.9L469 507.1L468 509.3L467 511.5L466 513.8L465 516L464 518.3L463 520.5L462 522.7L461 525L460 527.2L459 529.5L458 531.7L457 533.9L456 536.2L455 538.4L454 540.6L453 542.8L452 545L451 547.2L450 549.3L449 551.5L448 553.6L447 555.7L446 557.8L445 559.9L444 561.9L443 564L442 566L441 568L440 570L439 571.9L438 573.9L437 575.8L436 577.7L435 579.6L434 581.4L433 583.3L432 585.1L431 586.9L430 588.6L429 590.4L428 592.1L427 593.8L426 595.5L425 597.1L424 598.8L423 600.4L422 602L421 603.5L420 605L419 606.6L418 608L417 609.5L416 610.9L415 612.3L414 613.6L413 614.9L412 616.2L411 617.4L410 618.6L409 619.8L408 620.9L407 622L406 623L405 623.9L404 624.9L403 625.7L402 626.5L401 627.3L400 628L399 628.7L398 629.2L397 629.8L396 630.2L395 630.6L394 631L393 631.2L392 631.4L391 631.6L390 631.7L389 631.7L388 631.6L387 631.5L386 631.3L385 631.1L384 630.8L383 630.4L382 630L381 629.5L380 629L379 628.4L378 627.7L377 627L376 626.3L375 625.5L374 624.6L373 623.7L372 622.8L371 621.8L370 620.8L369 619.7L368 618.6L367 617.5L366 616.4L365 615.2L364 613.9L363 612.7L362 611.4L361 610.1L360 608.8L359 607.5L358 606.1L357 604.7L356 603.3L355 601.9L354 600.4L353 598.9L352 597.4L351 595.9L350 594.4L349 592.8L348 591.2L347 589.6L346 587.9L345 586.2L344 584.5L343 582.8L342 581.1L341 579.3L340 577.5L339 575.6L338 573.7L337 571.8L336 569.9L335 567.9L334 565.9L333 563.8L332 561.7L331 559.6L330 557.5L329 555.3L328 553.1L327 550.8L326 548.6L325 546.3L324 543.9L323 541.6L322 539.2L321 536.8L320 534.4L319 532L318 529.6L317 527.1L316 524.6L315 522.2L314 519.7L313 517.2L312 514.8L311 512.3L310 509.9L309 507.4L308 505L307 502.6L306 500.2L305 497.8L304 495.5L303 493.2L302 490.9L301 488.6L300 486.4L299 484.2L298 482.1L297 479.9L296 477.9L295 475.8L294 473.8L293 471.9L292 469.9L291 468L290 466.2L289 464.4L288 462.6L287 460.9L286 459.2L285 457.6L284 455.9L283 454.4L282 452.8L281 451.3L280 449.8L279 448.4L278 447L277 445.6L276 444.2L275 442.9L274 441.6L273 440.3L272 439.1L271 437.9L270 436.7L269 435.5L268 434.4L267 433.3L266 432.2L265 431.1L264 430.1L263 429.1L262 428.1L261 427.2L260 426.2L259 425.4L258 424.5L257 423.7L256 422.9L255 422.1L254 421.4L253 420.8L252 420.1L251 419.5L250 419L249 418.5L248 418.1L247 417.7L246 417.3L245 417L244 416.8L243 416.6L242 416.5L241 416.4L240 416.4L239 416.4L238 416.5L237 416.7L236 416.9L235 417.2L234 417.5L233 417.9L232 418.4L231 418.9L230 419.5L229 420.1L228 420.8L227 421.5L226 422.4L225 423.2L224 424.1L223 425.1L222 426.1L221 427.2L220 428.3L219 429.5L218 430.7L217 431.9L216 433.2L215 434.5L214 435.9L213 437.3L212 438.7L211 440.2L210 441.7L209 443.2L208 444.8L207 446.4L206 448L205 449.7L204 451.4L203 453.1L202 454.8L201 456.6L200 458.4L199 460.2L198 462L197 463.9L196 465.7L195 467.6L194 469.5L193 471.5L192 473.4L191 475.4L190 477.4L189 479.4L188 481.4L187 483.5L186 485.6L185 487.7L184 489.8L183 491.9L182 494L181 496.2L180 498.3L179 500.5L178 502.7L177 504.9L176 507.1L175 509.3L174 511.5L173 513.8L172 516L171 518.3L170 520.5L169 522.7L168 525L167 527.2L166 529.5L165 531.7L164 533.9L163 536.2L162 538.4L161 540.6L160 542.8L159 545L158 547.2L157 549.3L156 551.5L155 553.6L154 555.7L153 557.8L152 559.9L151 561.9L150 564L149 566L148 568L147 570L146 571.9L145 573.9L144 575.8L143 577.7L142 579.6L141 581.4L140 583.3L139 585.1L138 586.9L137 588.6L136 590.4L135 592.1L134 593.8L133 595.5L132 597.1L131 598.8L130 600.4L129 602L128 603.5L127 605L126 606.6L125 608L124 609.5L123 610.9L122 612.3L121 613.6L120 614.9L119 616.2L118 617.4L117 618.6L116 619.8L115 620.9L114 622L113 623L112 623.9L111 624.9L110 625.7L109 626.5L108 627.3L107 628L106 628.7L105 629.2L104 629.8L103 630.2L102 630.6L101 631L100 631.2L99 631.4L98 631.6L97 631.7L96 631.7L95 631.6L94 631.5L93 631.3L92 631.1L91 630.8L90 630.4L89 630L88 629.5L87 629L86 628.4L85 627.7L84 627L83 626.3L82 625.5L81 624.6L80 623.7L79 622.8L78 621.8L77 620.8L76 619.7L75 618.6L74 617.5L73 616.4L72 615.2L71 613.9L70 612.7L69 611.4L68 610.1L67 608.8L66 607.5L65 606.1L64 604.7L63 603.3L62 601.9L61 600.4L60 598.9L59 597.4L58 595.9L57 594.4L56 592.8L55 591.2L54 589.6L53 587.9L52 586.2L51 584.5L50 582.8L49 581.1L48 579.3L47 577.5L46 575.6L45 573.7L44 571.8L43 569.9L42 567.9L41 565.9L40 563.8L39 561.7L38 559.6L37 557.5L36 555.3L35 553.1L34 550.8L33 548.6L32 546.3L31 543.9Z"/><path fill="#009c9c" d="M31 527.3L32 529.7L33 532L34 534.2L35 536.5L36 538.7L37 540.9L38 543L39 545.1L40 547.2L41 549.3L42 551.3L43 553.3L44 555.2L45 557.1L46 559L47 560.9L48 562.7L49 564.5L50 566.2L51 567.9L52 569.6L53 571.3L54 573L55 574.6L56 576.2L57 577.8L58 579.3L59 580.8L60 582.3L61 583.8L62 585.3L63 586.7L64 588.1L65 589.5L66 590.9L67 592.2L68 593.5L69 594.8L70 596.1L71 597.3L72 598.6L73 599.8L74 600.9L75 602L76 603.1L77 604.2L78 605.2L79 606.2L80 607.1L81 608L82 608.9L83 609.7L84 610.4L85 611.1L86 611.8L87 612.4L88 612.9L89 613.4L90 613.8L91 614.2L92 614.5L93 614.7L94 614.9L95 615L96 615.1L97 615.1L98 615L99 614.8L100 614.6L101 614.4L102 614L103 613.6L104 613.2L105 612.6L106 612.1L107 611.4L108 610.7L109 609.9L110 609.1L111 608.3L112 607.3L113 606.4L114 605.4L115 604.3L116 603.2L117 602L118 600.8L119 599.6L120 598.3L121 597L122 595.7L123 594.3L124 592.9L125 591.4L126 590L127 588.4L128 586.9L129 585.4L130 583.8L131 582.2L132 580.5L133 578.9L134 577.2L135 575.5L136 573.8L137 572L138 570.3L139 568.5L140 566.7L141 564.8L142 563L143 561.1L144 559.2L145 557.3L146 555.3L147 553.4L148 551.4L149 549.4L150 547.4L151 545.3L152 543.3L153 541.2L154 539.1L155 537L156 534.9L157 532.7L158 530.6L159 528.4L160 526.2L161 524L162 521.8L163 519.6L164 517.3L165 515.1L166 512.9L167 510.6L168 508.4L169 506.1L170 503.9L171 501.7L172 499.4L173 497.2L174 494.9L175 492.7L176 490.5L177 488.3L178 486.1L179 483.9L180 481.7L181 479.6L182 477.4L183 475.3L184 473.2L185 471.1L186 469L187 466.9L188 464.8L189 462.8L190 460.8L191 458.8L192 456.8L193 454.9L194 452.9L195 451L196 449.1L197 447.3L198 445.4L199 443.6L200 441.8L201 440L202 438.2L203 436.5L204 434.8L205 433.1L206 431.4L207 429.8L208 428.2L209 426.6L210 425.1L211 423.6L212 422.1L213 420.7L214 419.3L215 417.9L216 416.6L217 415.3L218 414.1L219 412.9L220 411.7L221 410.6L222 409.5L223 408.5L224 407.5L225 406.6L226 405.8L227 404.9L228 404.2L229 403.5L230 402.9L231 402.3L232 401.8L233 401.3L234 400.9L235 400.6L236 400.3L237 400.1L238 399.9L239 399.8L240 399.8L241 399.8L242 399.9L243 400L244 400.2L245 400.4L246 400.7L247 401.1L248 401.5L249 401.9L250 402.4L251 402.9L252 403.5L253 404.2L254 404.8L255 405.5L256 406.3L257 407.1L258 407.9L259 408.8L260 409.6L261 410.6L262 411.5L263 412.5L264 413.5L265 414.5L266 415.6L267 416.7L268 417.8L269 418.9L270 420.1L271 421.3L272 422.5L273 423.7L274 425L275 426.3L276 427.6L277 429L278 430.4L279 431.8L280 433.2L281 434.7L282 436.2L283 437.8L284 439.3L285 441L286 442.6L287 444.3L288 446L289 447.8L290 449.6L291 451.4L292 453.3L293 455.3L294 457.2L295 459.2L296 461.3L297 463.3L298 465.5L299 467.6L300 469.8L301 472L302 474.3L303 476.6L304 478.9L305 481.2L306 483.6L307 486L308 488.4L309 490.8L310 493.3L311 495.7L312 498.2L313 500.6L314 503.1L315 505.6L316 508L317 510.5L318 513L319 515.4L320 517.8L321 520.2L322 522.6L323 525L324 527.3L325 529.7L326 532L327 534.2L328 536.5L329 538.7L330 540.9L331 543L332 545.1L333 547.2L334 549.3L335 551.3L336 553.3L337 555.2L338 557.1L339 559L340 560.9L341 562.7L342 564.5L343 566.2L344 567.9L345 569.6L346 571.3L347 573L348 574.6L349 576.2L350 577.8L351 579.3L352 580.8L353 582.3L354 583.8L355 585.3L356 586.7L357 588.1L358 589.5L359 590.9L360 592.2L361 593.5L362 594.8L363 596.1L364 597.3L365 598.6L366 599.8L367 600.9L368 602L369 603.1L370 604.2L371 605.2L372 606.2L373 607.1L374 608L375 608.9L376 609.7L377 610.4L378 611.1L379 611.8L380 612.4L381 612.9L382 613.4L383 613.8L384 614.2L385 614.5L386 614.7L387 614.9L388 615L389 615.1L390 615.1L391 615L392 614.8L393 614.6L394 614.4L395 614L396 613.6L397 613.2L398 612.6L399 612.1L400 611.4L401 610.7L402 609.9L403 609.1L404 608.3L405 607.3L406 606.4L407 605.4L408 604.3L409 603.2L410 602L411 600.8L412 599.6L413 598.3L414 597L415 595.7L416 594.3L417 592.9L418 591.4L419 590L420 588.4L421 586.9L422 585.4L423 583.8L424 582.2L425 580.5L426 578.9L427 577.2L428 575.5L429 573.8L430 572L431 570.3L432 568.5L433 566.7L434 564.8L435 563L436 561.1L437 559.2L438 557.3L439 555.3L440 553.4L441 551.4L442 549.4L443 547.4L444 545.3L445 543.3L446 541.2L447 539.1L448 537L449 534.9L450 532.7L451 530.6L452 528.4L453 526.2L454 524L455 521.8L456 519.6L457 517.3L458 515.1L459 512.9L460 510.6L461 508.4L462 506.1L463 503.9L464 501.7L465 499.4L466 497.2L467 494.9L468 492.7L469 490.5L470 488.3L471 486.1L472 483.9L473 481.7L474 479.6L475 477.4L476 475.3L477 473.2L478 471.1L479 469L480 466.9L481 464.8L482 462.8L483 460.8L484 458.8L485 456.8L486 454.9L487 452.9L488 451L489 449.1L490 447.3L491 445.4L492 443.6L493 441.8L494 440L495 438.2L496 436.5L497 434.8L498 433.1L499 431.4L500 429.8L501 428.2L502 426.6L503 425.1L504 423.6L505 422.1L506 420.7L507 419.3L508 417.9L509 416.6L510 415.3L511 414.1L512 412.9L513 411.7L514 410.6L515 409.5L516 408.5L517 407.5L518 406.6L519 405.8L520 404.9L521 404.2L522 403.5L523 402.9L524 402.3L525 401.8L526 401.3L527 400.9L528 400.6L529 400.3L530 400.1L531 399.9L532 399.8L533 399.8L534 399.8L535 399.9L536 400L537 400.2L538 400.4L539 400.7L540 401.1L541 401.5L542 401.9L543 402.4L544 402.9L545 403.5L546 404.2L547 404.8L548 405.5L549 406.3L550 407.1L551 407.9L552 408.8L553 409.6L554 410.6L555 411.5L556 412.5L557 413.5L558 414.5L559 415.6L560 416.7L561 417.8L562 418.9L563 420.1L564 421.3L565 422.5L566 423.7L567 425L568 426.3L569 427.6L570 429L571 430.4L572 431.8L573 433.2L574 434.7L575 436.2L576 437.8L577 439.3L578 441L579 442.6L580 444.3L581 446L582 447.8L583 449.6L584 451.4L585 453.3L586 455.3L587 457.2L588 459.2L589 461.3L590 463.3L591 465.5L592 467.6L593 469.8L594 472L595 474.3L596 476.6L597 478.9L598 481.2L599 483.6L600 486L601 488.4L602 490.8L603 493.3L604 495.7L605 498.2L606 500.6L607 503.1L608 505.6L609 508L610 510.5L611 513L612 515.4L613 517.8L614 520.2L615 522.6L616 525L617 527.3L618 529.7L619 532L620 534.2L621 536.5L622 538.7L623 540.9L624 543L625 545.1L626 547.2L627 549.3L628 551.3L629 553.3L630 555.2L631 557.1L632 559L633 560.9L634 562.7L635 564.5L636 566.2L637 567.9L638 569.6L639 571.3L640 573L641 574.6L642 576.2L643 577.8L644 579.3L645 580.8L646 582.3L647 583.8L648 585.3L649 586.7L650 588.1L651 589.5L652 590.9L653 592.2L654 593.5L655 594.8L656 596.1L657 597.3L658 598.6L659 599.8L660 600.9L661 602L662 603.1L663 604.2L664 605.2L665 606.2L666 607.1L667 608L668 608.9L669 609.7L670 610.4L671 611.1L672 611.8L673 612.4L674 612.9L675 613.4L676 613.8L677 614.2L678 614.5L679 614.7L680 614.9L681 615L682 615.1L683 615.1L684 615L685 614.8L686 614.6L687 614.4L688 614L689 613.6L690 613.2L691 612.6L692 612.1L693 611.4L694 610.7L695 609.9L696 609.1L697 608.3L698 607.3L699 606.4L700 605.4L701 604.3L702 603.2L703 602L704 600.8L705 599.6L706 598.3L707 597L708 595.7L709 594.3L710 592.9L711 591.4L712 590L713 588.4L714 586.9L715 585.4L716 583.8L717 582.2L718 580.5L719 578.9L720 577.2L721 575.5L722 573.8L723 572L724 570.3L725 568.5L726 566.7L727 564.8L728 563L729 561.1L730 559.2L731 557.3L732 555.3L733 553.4L734 551.4L735 549.4L736 547.4L737 545.3L738 543.3L739 541.2L740 539.1L741 537L742 534.9L743 532.7L744 530.6L745 528.4L746 526.2L747 524L748 521.8L749 519.6L750 517.3L751 515.1L752 512.9L753 510.6L754 508.4L755 506.1L756 503.9L757 501.7L758 499.4L759 497.2L760 494.9L761 492.7L762 490.5L763 488.3L764 486.1L765 483.9L766 481.7L767 479.6L768 477.4L769 475.3L770 473.2L771 471.1L772 469L773 466.9L774 464.8L775 462.8L776 460.8L777 458.8L778 456.8L779 454.9L780 452.9L781 451L782 449.1L783 447.3L784 445.4L785 443.6L786 441.8L787 440L788 438.2L789 436.5L790 434.8L791 433.1L792 431.4L793 429.8L794 428.2L795 426.6L796 425.1L797 423.6L798 422.1L799 420.7L800 419.3L801 417.9L802 416.6L803 415.3L804 414.1L805 412.9L806 411.7L807 410.6L808 409.5L809 408.5L810 407.5L811 406.6L812 405.8L813 404.9L814 404.2L815 403.5L816 402.9L817 402.3L818 401.8L819 401.3L820 400.9L821 400.6L822 400.3L823 400.1L824 399.9L825 399.8L826 399.8L827 399.8L828 399.9L829 400L830 400.2L831 400.4L832 400.7L833 401.1L834 401.5L835 401.9L836 402.4L837 402.9L838 403.5L839 404.2L840 404.8L841 405.5L842 406.3L843 407.1L844 407.9L845 408.8L846 409.6L847 410.6L848 411.5L849 412.5L850 413.5L851 414.5L852 415.6L853 416.7L854 417.8L855 418.9L856 420.1L857 421.3L858 422.5L859 423.7L860 425L861 426.3L862 427.6L863 429L864 430.4L865 431.8L866 433.2L867 434.7L868 436.2L869 437.8L870 439.3L871 441L872 442.6L873 444.3L874 446L875 447.8L876 449.6L877 451.4L878 453.3L879 455.3L880 457.2L881 459.2L882 461.3L883 463.3L884 465.5L885 467.6L886 469.8L887 472L888 474.3L889 476.6L890 478.9L891 481.2L892 483.6L893 486L894 488.4L895 490.8L896 493.3L897 495.7L898 498.2L899 500.6L900 503.1L901 505.6L902 508L903 510.5L904 513L905 515.4L906 517.8L907 520.2L908 522.6L909 525L910 527.3L911 529.7L912 532L913 534.2L914 536.5L915 538.7L916 540.9L917 543L918 545.1L919 547.2L920 549.3L921 551.3L922 553.3L923 555.2L924 557.1L925 559L926 560.9L927 562.7L928 564.5L929 566.2L930 567.9L931 569.6L932 571.3L933 573L934 574.6L935 576.2L936 577.8L937 579.3L938 580.8L939 582.3L940 583.8L941 585.3L942 586.7L943 588.1L944 589.5L945 590.9L946 592.2L947 593.5L948 594.8L949 596.1L950 597.3L951 598.6L952 599.8L953 600.9L954 602L955 603.1L956 604.2L957 605.2L958 606.2L959 607.1L960 608L961 608.9L962 609.7L963 610.4L964 611.1L965 611.8L966 612.4L967 612.9L968 613.4L969 613.8L970 614.2L971 614.5L972 614.7L973 614.9L974 615L975 615.1L976 615.1L977 615L978 614.8L979 614.6L980 614.4L981 614L982 613.6L983 613.2L984 612.6L985 612.1L986 611.4L987 610.7L988 609.9L989 609.1L990 608.3L991 607.3L992 606.4L993 605.4L994 604.3L995 603.2L996 602L997 600.8L998 599.6L999 598.3L1000 597L1001 595.7L1002 594.3L1003 592.9L1004 591.4L1005 590L1006 588.4L1007 586.9L1008 585.4L1009 583.8L1010 582.2L1011 580.5L1012 578.9L1013 577.2L1014 575.5L1015 573.8L1016 572L1017 570.3L1018 568.5L1019 566.7L1020 564.8L1021 563L1022 561.1L1023 559.2L1024 557.3L1025 555.3L1026 553.4L1027 551.4L1028 549.4L1029 547.4L1030 545.3L1031 543.3L1032 541.2L1033 539.1L1034 537L1035 534.9L1036 532.7L1037 530.6L1038 528.4L1039 526.2L1040 524L1041 521.8L1042 519.6L1043 517.3L1044 515.1L1045 512.9L1046 510.6L1047 508.4L1048 506.1L1049 503.9L1050 501.7L1051 499.4L1052 497.2L1053 494.9L1054 492.7L1055 490.5L1056 488.3L1057 486.1L1058 483.9L1059 481.7L1060 479.6L1061 477.4L1062 475.3L1063 473.2L1064 471.1L1065 469L1066 466.9L1067 464.8L1068 462.8L1069 460.8L1070 458.8L1071 456.8L1072 454.9L1073 452.9L1074 451L1075 449.1L1076 447.3L1077 445.4L1078 443.6L1079 441.8L1080 440L1081 438.2L1082 436.5L1083 434.8L1084 433.1L1085 431.4L1086 429.8L1087 428.2L1088 426.6L1089 425.1L1090 423.6L1091 422.1L1092 420.7L1093 419.3L1094 417.9L1095 416.6L1096 415.3L1097 414.1L1098 412.9L1099 411.7L1100 410.6L1101 409.5L1102 408.5L1103 407.5L1104 406.6L1105 405.8L1106 404.9L1107 404.2L1108 403.5L1109 402.9L1110 402.3L1111 401.8L1112 401.3L1113 400.9L1114 400.6L1115 400.3L1116 400.1L1117 399.9L1118 399.8L1119 399.8L1120 399.8L1121 399.9L1122 400L1123 400.2L1124 400.4L1125 400.7L1126 401.1L1127 401.5L1128 401.9L1129 402.4L1130 402.9L1131 403.5L1132 404.2L1133 404.8L1134 405.5L1135 406.3L1136 407.1L1137 407.9L1138 408.8L1139 409.6L1140 410.6L1141 411.5L1142 412.5L1143 413.5L1144 414.5L1145 415.6L1146 416.7L1147 417.8L1148 418.9L1149 420.1L1150 421.3L1151 422.5L1152 423.7L1153 425L1154 426.3L1155 427.6L1156 429L1157 430.4L1158 431.8L1159 433.2L1160 434.7L1161 436.2L1162 437.8L1163 439.3L1164 441L1165 442.6L1166 444.3L1167 446L1168 447.8L1169 449.6L1170 451.4L1171 453.3L1172 455.3L1173 457.2L1174 459.2L1175 461.3L1176 463.3L1177 465.5L1178 467.6L1179 469.8L1180 472L1181 474.3L1182 476.6L1183 478.9L1184 481.2L1185 483.6L1186 486L1187 488.4L1188 490.8L1189 493.3L1190 495.7L1191 498.2L1192 500.6L1193 503.1L1194 505.6L1195 508L1196 510.5L1197 513L1198 515.4L1199 517.8L1200 520.2L1201 522.6L1202 525L1203 527.3L1204 529.7L1205 532L1206 534.2L1207 536.5L1208 538.7L1209 540.9L1210 543L1211 545.1L1212 547.2L1213 549.3L1214 551.3L1215 553.3L1216 555.2L1217 557.1L1218 559L1219 560.9L1220 562.7L1221 564.5L1222 566.2L1223 567.9L1224 569.6L1225 571.3L1226 573L1227 574.6L1228 576.2L1229 577.8L1230 579.3L1231 580.8L1232 582.3L1233 583.8L1234 585.3L1235 586.7L1236 588.1L1237 589.5L1238 590.9L1239 592.2L1240 593.5L1241 594.8L1242 596.1L1243 597.3L1244 598.6L1245 599.8L1246 600.9L1247 602L1248 603.1L1249 604.2L1250 605.2L1251 606.2L1252 607.1L1253 608L1254 608.9L1255 609.7L1256 610.4L1257 611.1L1258 611.8L1259 612.4L1260 612.9L1261 613.4L1262 613.8L1263 614.2L1264 614.5L1265 614.7L1266 614.9L1267 615L1268 615.1L1269 615.1L1270 615L1271 614.8L1272 614.6L1273 614.4L1274 614L1275 613.6L1276 613.2L1277 612.6L1278 612.1L1279 611.4L1280 610.7L1281 609.9L1282 609.1L1283 608.3L1284 607.3L1285 606.4L1286 605.4L1287 604.3L1288 603.2L1289 602L1290 600.8L1291 599.6L1292 598.3L1293 597L1294 595.7L1295 594.3L1296 592.9L1297 591.4L1298 590L1299 588.4L1300 586.9L1301 585.4L1302 583.8L1303 582.2L1304 580.5L1305 578.9L1306 577.2L1307 575.5L1308 573.8L1309 572L1310 570.3L1311 568.5L1312 566.7L1313 564.8L1314 563L1315 561.1L1316 559.2L1317 557.3L1318 555.3L1319 553.4L1320 551.4L1321 549.4L1322 547.4L1323 545.3L1324 543.3L1325 541.2L1326 539.1L1327 537L1328 534.9L1329 532.7L1330 530.6L1331 528.4L1332 526.2L1333 524L1334 521.8L1335 519.6L1336 517.3L1337 515.1L1338 512.9L1339 510.6L1340 508.4L1341 506.1L1342 503.9L1343 501.7L1344 499.4L1345 497.2L1346 494.9L1347 492.7L1348 490.5L1349 488.3L1350 486.1L1351 483.9L1352 481.7L1353 479.6L1354 477.4L1355 475.3L1356 473.2L1357 471.1L1358 469L1359 466.9L1360 464.8L1361 462.8L1362 460.8L1363 458.8L1364 456.8L1365 454.9L1366 452.9L1367 451L1368 449.1L1369 447.3L1370 445.4L1371 443.6L1372 441.8L1373 440L1374 438.2L1375 436.5L1376 434.8L1377 433.1L1378 431.4L1379 429.8L1380 428.2L1381 426.6L1382 425.1L1383 423.6L1384 422.1L1385 420.7L1386 419.3L1387 417.9L1388 416.6L1389 415.3L1390 414.1L1391 412.9L1392 411.7L1393 410.6L1394 409.5L1395 408.5L1396 407.5L1397 406.6L1398 405.8L1399 404.9L1400 404.2L1401 403.5L1402 402.9L1403 402.3L1404 401.8L1405 401.3L1406 400.9L1407 400.6L1408 400.3L1409 400.1L1410 399.9L1411 399.8L1412 399.8L1413 399.8L1414 399.9L1415 400L1416 400.2L1417 400.4L1418 400.7L1419 401.1L1420 401.5L1421 401.9L1422 402.4L1423 402.9L1424 403.5L1425 404.2L1426 404.8L1427 405.5L1428 406.3L1429 407.1L1430 407.9L1431 408.8L1432 409.6L1433 410.6L1434 411.5L1435 412.5L1436 413.5L1437 414.5L1438 415.6L1439 416.7L1440 417.8L1441 418.9L1442 420.1L1443 421.3L1444 422.5L1445 423.7L1446 425L1447 426.3L1448 427.6L1449 429L1450 430.4L1451 431.8L1452 433.2L1453 434.7L1454 436.2L1455 437.8L1456 439.3L1457 441L1458 442.6L1459 444.3L1460 446L1461 447.8L1462 449.6L1463 451.4L1464 453.3L1465 455.3L1466 457.2L1467 459.2L1468 461.3L1469 463.3L1470 465.5L1471 467.6L1472 469.8L1473 472L1474 474.3L1475 476.6L1476 478.9L1477 481.2L1478 483.6L1479 486L1480 488.4L1481 490.8L1482 493.3L1483 495.7L1484 498.2L1485 500.6L1486 503.1L1487 505.6L1488 508L1489 510.5L1490 513L1491 515.4L1492 517.8L1493 520.2L1494 522.6L1495 525L1496 527.3L1496 540.5L1495 538.2L1494 535.8L1493 533.4L1492 531L1491 528.6L1490 526.2L1489 523.7L1488 521.2L1487 518.8L1486 516.3L1485 513.8L1484 511.4L1483 508.9L1482 506.5L1481 504L1480 501.6L1479 499.2L1478 496.8L1477 494.4L1476 492.1L1475 489.8L1474 487.5L1473 485.2L1472 483L1471 480.8L1470 478.7L1469 476.5L1468 474.5L1467 472.4L1466 470.4L1465 468.5L1464 466.5L1463 464.6L1462 462.8L1461 461L1460 459.2L1459 457.5L1458 455.8L1457 454.2L1456 452.5L1455 451L1454 449.4L1453 447.9L1452 446.4L1451 445L1450 443.6L1449 442.2L1448 440.8L1447 439.5L1446 438.2L1445 436.9L1444 435.7L1443 434.5L1442 433.3L1441 432.1L1440 431L1439 429.9L1438 428.8L1437 427.7L1436 426.7L1435 425.7L1434 424.7L1433 423.8L1432 422.8L1431 422L1430 421.1L1429 420.3L1428 419.5L1427 418.7L1426 418L1425 417.4L1424 416.7L1423 416.1L1422 415.6L1421 415.1L1420 414.7L1419 414.3L1418 413.9L1417 413.6L1416 413.4L1415 413.2L1414 413.1L1413 413L1412 413L1411 413L1410 413.1L1409 413.3L1408 413.5L1407 413.8L1406 414.1L1405 414.5L1404 415L1403 415.5L1402 416.1L1401 416.7L1400 417.4L1399 418.1L1398 419L1397 419.8L1396 420.7L1395 421.7L1394 422.7L1393 423.8L1392 424.9L1391 426.1L1390 427.3L1389 428.5L1388 429.8L1387 431.1L1386 432.5L1385 433.9L1384 435.3L1383 436.8L1382 438.3L1381 439.8L1380 441.4L1379 443L1378 444.6L1377 446.3L1376 448L1375 449.7L1374 451.4L1373 453.2L1372 455L1371 456.8L1370 458.6L1369 460.5L1368 462.3L1367 464.2L1366 466.1L1365 468.1L1364 470L1363 472L1362 474L1361 476L1360 478L1359 480.1L1358 482.2L1357 484.3L1356 486.4L1355 488.5L1354 490.6L1353 492.8L1352 494.9L1351 497.1L1350 499.3L1349 501.5L1348 503.7L1347 505.9L1346 508.1L1345 510.4L1344 512.6L1343 514.9L1342 517.1L1341 519.3L1340 521.6L1339 523.8L1338 526.1L1337 528.3L1336 530.5L1335 532.8L1334 535L1333 537.2L1332 539.4L1331 541.6L1330 543.8L1329 545.9L1328 548.1L1327 550.2L1326 552.3L1325 554.4L1324 556.5L1323 558.5L1322 560.6L1321 562.6L1320 564.6L1319 566.6L1318 568.5L1317 570.5L1316 572.4L1315 574.3L1314 576.2L1313 578L1312 579.9L1311 581.7L1310 583.5L1309 585.2L1308 587L1307 588.7L1306 590.4L1305 592.1L1304 593.7L1303 595.4L1302 597L1301 598.6L1300 600.1L1299 601.6L1298 603.2L1297 604.6L1296 606.1L1295 607.5L1294 608.9L1293 610.2L1292 611.5L1291 612.8L1290 614L1289 615.2L1288 616.4L1287 617.5L1286 618.6L1285 619.6L1284 620.5L1283 621.5L1282 622.3L1281 623.1L1280 623.9L1279 624.6L1278 625.3L1277 625.8L1276 626.4L1275 626.8L1274 627.2L1273 627.6L1272 627.8L1271 628L1270 628.2L1269 628.3L1268 628.3L1267 628.2L1266 628.1L1265 627.9L1264 627.7L1263 627.4L1262 627L1261 626.6L1260 626.1L1259 625.6L1258 625L1257 624.3L1256 623.6L1255 622.9L1254 622.1L1253 621.2L1252 620.3L1251 619.4L1250 618.4L1249 617.4L1248 616.3L1247 615.2L1246 614.1L1245 613L1244 611.8L1243 610.5L1242 609.3L1241 608L1240 606.7L1239 605.4L1238 604.1L1237 602.7L1236 601.3L1235 599.9L1234 598.5L1233 597L1232 595.5L1231 594L1230 592.5L1229 591L1228 589.4L1227 587.8L1226 586.2L1225 584.5L1224 582.8L1223 581.1L1222 579.4L1221 577.7L1220 575.9L1219 574.1L1218 572.2L1217 570.3L1216 568.4L1215 566.5L1214 564.5L1213 562.5L1212 560.4L1211 558.3L1210 556.2L1209 554.1L1208 551.9L1207 549.7L1206 547.4L1205 545.2L1204 542.9L1203 540.5L1202 538.2L1201 535.8L1200 533.4L1199 531L1198 528.6L1197 526.2L1196 523.7L1195 521.2L1194 518.8L1193 516.3L1192 513.8L1191 511.4L1190 508.9L1189 506.5L1188 504L1187 501.6L1186 499.2L1185 496.8L1184 494.4L1183 492.1L1182 489.8L1181 487.5L1180 485.2L1179 483L1178 480.8L1177 478.7L1176 476.5L1175 474.5L1174 472.4L1173 470.4L1172 468.5L1171 466.5L1170 464.6L1169 462.8L1168 461L1167 459.2L1166 457.5L1165 455.8L1164 454.2L1163 452.5L1162 451L1161 449.4L1160 447.9L1159 446.4L1158 445L1157 443.6L1156 442.2L1155 440.8L1154 439.5L1153 438.2L1152 436.9L1151 435.7L1150 434.5L1149 433.3L1148 432.1L1147 431L1146 429.9L1145 428.8L1144 427.7L1143 426.7L1142 425.7L1141 424.7L1140 423.8L1139 422.8L1138 422L1137 421.1L1136 420.3L1135 419.5L1134 418.7L1133 418L1132 417.4L1131 416.7L1130 416.1L1129 415.6L1128 415.1L1127 414.7L1126 414.3L1125 413.9L1124 413.6L1123 413.4L1122 413.2L1121 413.1L1120 413L1119 413L1118 413L1117 413.1L1116 413.3L1115 413.5L1114 413.8L1113 414.1L1112 414.5L1111 415L1110 415.5L1109 416.1L1108 416.7L1107 417.4L1106 418.1L1105 419L1104 419.8L1103 420.7L1102 421.7L1101 422.7L1100 423.8L1099 424.9L1098 426.1L1097 427.3L1096 428.5L1095 429.8L1094 431.1L1093 432.5L1092 433.9L1091 435.3L1090 436.8L1089 438.3L1088 439.8L1087 441.4L1086 443L1085 444.6L1084 446.3L1083 448L1082 449.7L1081 451.4L1080 453.2L1079 455L1078 456.8L1077 458.6L1076 460.5L1075 462.3L1074 464.2L1073 466.1L1072 468.1L1071 470L1070 472L1069 474L1068 476L1067 478L1066 480.1L1065 482.2L1064 484.3L1063 486.4L1062 488.5L1061 490.6L1060 492.8L1059 494.9L1058 497.1L1057 499.3L1056 501.5L1055 503.7L1054 505.9L1053 508.1L1052 510.4L1051 512.6L1050 514.9L1049 517.1L1048 519.3L1047 521.6L1046 523.8L1045 526.1L1044 528.3L1043 530.5L1042 532.8L1041 535L1040 537.2L1039 539.4L1038 541.6L1037 543.8L1036 545.9L1035 548.1L1034 550.2L1033 552.3L1032 554.4L1031 556.5L1030 558.5L1029 560.6L1028 562.6L1027 564.6L1026 566.6L1025 568.5L1024 570.5L1023 572.4L1022 574.3L1021 576.2L1020 578L1019 579.9L1018 581.7L1017 583.5L1016 585.2L1015 587L1014 588.7L1013 590.4L1012 592.1L1011 593.7L1010 595.4L1009 597L1008 598.6L1007 600.1L1006 601.6L1005 603.2L1004 604.6L1003 606.1L1002 607.5L1001 608.9L1000 610.2L999 611.5L998 612.8L997 614L996 615.2L995 616.4L994 617.5L993 618.6L992 619.6L991 620.5L990 621.5L989 622.3L988 623.1L987 623.9L986 624.6L985 625.3L984 625.8L983 626.4L982 626.8L981 627.2L980 627.6L979 627.8L978 628L977 628.2L976 628.3L975 628.3L974 628.2L973 628.1L972 627.9L971 627.7L970 627.4L969 627L968 626.6L967 626.1L966 625.6L965 625L964 624.3L963 623.6L962 622.9L961 622.1L960 621.2L959 620.3L958 619.4L957 618.4L956 617.4L955 616.3L954 615.2L953 614.1L952 613L951 611.8L950 610.5L949 609.3L948 608L947 606.7L946 605.4L945 604.1L944 602.7L943 601.3L942 599.9L941 598.5L940 597L939 595.5L938 594L937 592.5L936 591L935 589.4L934 587.8L933 586.2L932 584.5L931 582.8L930 581.1L929 579.4L928 577.7L927 575.9L926 574.1L925 572.2L924 570.3L923 568.4L922 566.5L921 564.5L920 562.5L919 560.4L918 558.3L917 556.2L916 554.1L915 551.9L914 549.7L913 547.4L912 545.2L911 542.9L910 540.5L909 538.2L908 535.8L907 533.4L906 531L905 528.6L904 526.2L903 523.7L902 521.2L901 518.8L900 516.3L899 513.8L898 511.4L897 508.9L896 506.5L895 504L894 501.6L893 499.2L892 496.8L891 494.4L890 492.1L889 489.8L888 487.5L887 485.2L886 483L885 480.8L884 478.7L883 476.5L882 474.5L881 472.4L880 470.4L879 468.5L878 466.5L877 464.6L876 462.8L875 461L874 459.2L873 457.5L872 455.8L871 454.2L870 452.5L869 451L868 449.4L867 447.9L866 446.4L865 445L864 443.6L863 442.2L862 440.8L861 439.5L860 438.2L859 436.9L858 435.7L857 434.5L856 433.3L855 432.1L854 431L853 429.9L852 428.8L851 427.7L850 426.7L849 425.7L848 424.7L847 423.8L846 422.8L845 422L844 421.1L843 420.3L842 419.5L841 418.7L840 418L839 417.4L838 416.7L837 416.1L836 415.6L835 415.1L834 414.7L833 414.3L832 413.9L831 413.6L830 413.4L829 413.2L828 413.1L827 413L826 413L825 413L824 413.1L823 413.3L822 413.5L821 413.8L820 414.1L819 414.5L818 415L817 415.5L816 416.1L815 416.7L814 417.4L813 418.1L812 419L811 419.8L810 420.7L809 421.7L808 422.7L807 423.8L806 424.9L805 426.1L804 427.3L803 428.5L802 429.8L801 431.1L800 432.5L799 433.9L798 435.3L797 436.8L796 438.3L795 439.8L794 441.4L793 443L792 444.6L791 446.3L790 448L789 449.7L788 451.4L787 453.2L786 455L785 456.8L784 458.6L783 460.5L782 462.3L781 464.2L780 466.1L779 468.1L778 470L777 472L776 474L775 476L774 478L773 480.1L772 482.2L771 484.3L770 486.4L769 488.5L768 490.6L767 492.8L766 494.9L765 497.1L764 499.3L763 501.5L762 503.7L761 505.9L760 508.1L759 510.4L758 512.6L757 514.9L756 517.1L755 519.3L754 521.6L753 523.8L752 526.1L751 528.3L750 530.5L749 532.8L748 535L747 537.2L746 539.4L745 541.6L744 543.8L743 545.9L742 548.1L741 550.2L740 552.3L739 554.4L738 556.5L737 558.5L736 560.6L735 562.6L734 564.6L733 566.6L732 568.5L731 570.5L730 572.4L729 574.3L728 576.2L727 578L726 579.9L725 581.7L724 583.5L723 585.2L722 587L721 588.7L720 590.4L719 592.1L718 593.7L717 595.4L716 597L715 598.6L714 600.1L713 601.6L712 603.2L711 604.6L710 606.1L709 607.5L708 608.9L707 610.2L706 611.5L705 612.8L704 614L703 615.2L702 616.4L701 617.5L700 618.6L699 619.6L698 620.5L697 621.5L696 622.3L695 623.1L694 623.9L693 624.6L692 625.3L691 625.8L690 626.4L689 626.8L688 627.2L687 627.6L686 627.8L685 628L684 628.2L683 628.3L682 628.3L681 628.2L680 628.1L679 627.9L678 627.7L677 627.4L676 627L675 626.6L674 626.1L673 625.6L672 625L671 624.3L670 623.6L669 622.9L668 622.1L667 621.2L666 620.3L665 619.4L664 618.4L663 617.4L662 616.3L661 615.2L660 614.1L659 613L658 611.8L657 610.5L656 609.3L655 608L654 606.7L653 605.4L652 604.1L651 602.7L650 601.3L649 599.9L648 598.5L647 597L646 595.5L645 594L644 592.5L643 591L642 589.4L641 587.8L640 586.2L639 584.5L638 582.8L637 581.1L636 579.4L635 577.7L634 575.9L633 574.1L632 572.2L631 570.3L630 568.4L629 566.5L628 564.5L627 562.5L626 560.4L625 558.3L624 556.2L623 554.1L622 551.9L621 549.7L620 547.4L619 545.2L618 542.9L617 540.5L616 538.2L615 535.8L614 533.4L613 531L612 528.6L611 526.2L610 523.7L609 521.2L608 518.8L607 516.3L606 513.8L605 511.4L604 508.9L603 506.5L602 504L601 501.6L600 499.2L599 496.8L598 494.4L597 492.1L596 489.8L595 487.5L594 485.2L593 483L592 480.8L591 478.7L590 476.5L589 474.5L588 472.4L587 470.4L586 468.5L585 466.5L584 464.6L583 462.8L582 461L581 459.2L580 457.5L579 455.8L578 454.2L577 452.5L576 451L575 449.4L574 447.9L573 446.4L572 445L571 443.6L570 442.2L569 440.8L568 439.5L567 438.2L566 436.9L565 435.7L564 434.5L563 433.3L562 432.1L561 431L560 429.9L559 428.8L558 427.7L557 426.7L556 425.7L555 424.7L554 423.8L553 422.8L552 422L551 421.1L550 420.3L549 419.5L548 418.7L547 418L546 417.4L545 416.7L544 416.1L543 415.6L542 415.1L541 414.7L540 414.3L539 413.9L538 413.6L537 413.4L536 413.2L535 413.1L534 413L533 413L532 413L531 413.1L530 413.3L529 413.5L528 413.8L527 414.1L526 414.5L525 415L524 415.5L523 416.1L522 416.7L521 417.4L520 418.1L519 419L518 419.8L517 420.7L516 421.7L515 422.7L514 423.8L513 424.9L512 426.1L511 427.3L510 428.5L509 429.8L508 431.1L507 432.5L506 433.9L505 435.3L504 436.8L503 438.3L502 439.8L501 441.4L500 443L499 444.6L498 446.3L497 448L496 449.7L495 451.4L494 453.2L493 455L492 456.8L491 458.6L490 460.5L489 462.3L488 464.2L487 466.1L486 468.1L485 470L484 472L483 474L482 476L481 478L480 480.1L479 482.2L478 484.3L477 486.4L476 488.5L475 490.6L474 492.8L473 494.9L472 497.1L471 499.3L470 501.5L469 503.7L468 505.9L467 508.1L466 510.4L465 512.6L464 514.9L463 517.1L462 519.3L461 521.6L460 523.8L459 526.1L458 528.3L457 530.5L456 532.8L455 535L454 537.2L453 539.4L452 541.6L451 543.8L450 545.9L449 548.1L448 550.2L447 552.3L446 554.4L445 556.5L444 558.5L443 560.6L442 562.6L441 564.6L440 566.6L439 568.5L438 570.5L437 572.4L436 574.3L435 576.2L434 578L433 579.9L432 581.7L431 583.5L430 585.2L429 587L428 588.7L427 590.4L426 592.1L425 593.7L424 595.4L423 597L422 598.6L421 600.1L420 601.6L419 603.2L418 604.6L417 606.1L416 607.5L415 608.9L414 610.2L413 611.5L412 612.8L411 614L410 615.2L409 616.4L408 617.5L407 618.6L406 619.6L405 620.5L404 621.5L403 622.3L402 623.1L401 623.9L400 624.6L399 625.3L398 625.8L397 626.4L396 626.8L395 627.2L394 627.6L393 627.8L392 628L391 628.2L390 628.3L389 628.3L388 628.2L387 628.1L386 627.9L385 627.7L384 627.4L383 627L382 626.6L381 626.1L380 625.6L379 625L378 624.3L377 623.6L376 622.9L375 622.1L374 621.2L373 620.3L372 619.4L371 618.4L370 617.4L369 616.3L368 615.2L367 614.1L366 613L365 611.8L364 610.5L363 609.3L362 608L361 606.7L360 605.4L359 604.1L358 602.7L357 601.3L356 599.9L355 598.5L354 597L353 595.5L352 594L351 592.5L350 591L349 589.4L348 587.8L347 586.2L346 584.5L345 582.8L344 581.1L343 579.4L342 577.7L341 575.9L340 574.1L339 572.2L338 570.3L337 568.4L336 566.5L335 564.5L334 562.5L333 560.4L332 558.3L331 556.2L330 554.1L329 551.9L328 549.7L327 547.4L326 545.2L325 542.9L324 540.5L323 538.2L322 535.8L321 533.4L320 531L319 528.6L318 526.2L317 523.7L316 521.2L315 518.8L314 516.3L313 513.8L312 511.4L311 508.9L310 506.5L309 504L308 501.6L307 499.2L306 496.8L305 494.4L304 492.1L303 489.8L302 487.5L301 485.2L300 483L299 480.8L298 478.7L297 476.5L296 474.5L295 472.4L294 470.4L293 468.5L292 466.5L291 464.6L290 462.8L289 461L288 459.2L287 457.5L286 455.8L285 454.2L284 452.5L283 451L282 449.4L281 447.9L280 446.4L279 445L278 443.6L277 442.2L276 440.8L275 439.5L274 438.2L273 436.9L272 435.7L271 434.5L270 433.3L269 432.1L268 431L267 429.9L266 428.8L265 427.7L264 426.7L263 425.7L262 424.7L261 423.8L260 422.8L259 422L258 421.1L257 420.3L256 419.5L255 418.7L254 418L253 417.4L252 416.7L251 416.1L250 415.6L249 415.1L248 414.7L247 414.3L246 413.9L245 413.6L244 413.4L243 413.2L242 413.1L241 413L240 413L239 413L238 413.1L237 413.3L236 413.5L235 413.8L234 414.1L233 414.5L232 415L231 415.5L230 416.1L229 416.7L228 417.4L227 418.1L226 419L225 419.8L224 420.7L223 421.7L222 422.7L221 423.8L220 424.9L219 426.1L218 427.3L217 428.5L216 429.8L215 431.1L214 432.5L213 433.9L212 435.3L211 436.8L210 438.3L209 439.8L208 441.4L207 443L206 444.6L205 446.3L204 448L203 449.7L202 451.4L201 453.2L200 455L199 456.8L198 458.6L197 460.5L196 462.3L195 464.2L194 466.1L193 468.1L192 470L191 472L190 474L189 476L188 478L187 480.1L186 482.2L185 484.3L184 486.4L183 488.5L182 490.6L181 492.8L180 494.9L179 497.1L178 499.3L177 501.5L176 503.7L175 505.9L174 508.1L173 510.4L172 512.6L171 514.9L170 517.1L169 519.3L168 521.6L167 523.8L166 526.1L165 528.3L164 530.5L163 532.8L162 535L161 537.2L160 539.4L159 541.6L158 543.8L157 545.9L156 548.1L155 550.2L154 552.3L153 554.4L152 556.5L151 558.5L150 560.6L149 562.6L148 564.6L147 566.6L146 568.5L145 570.5L144 572.4L143 574.3L142 576.2L141 578L140 579.9L139 581.7L138 583.5L137 585.2L136 587L135 588.7L134 590.4L133 592.1L132 593.7L131 595.4L130 597L129 598.6L128 600.1L127 601.6L126 603.2L125 604.6L124 606.1L123 607.5L122 608.9L121 610.2L120 611.5L119 612.8L118 614L117 615.2L116 616.4L115 617.5L114 618.6L113 619.6L112 620.5L111 621.5L110 622.3L109 623.1L108 623.9L107 624.6L106 625.3L105 625.8L104 626.4L103 626.8L102 627.2L101 627.6L100 627.8L99 628L98 628.2L97 628.3L96 628.3L95 628.2L94 628.1L93 627.9L92 627.7L91 627.4L90 627L89 626.6L88 626.1L87 625.6L86 625L85 624.3L84 623.6L83 622.9L82 622.1L81 621.2L80 620.3L79 619.4L78 618.4L77 617.4L76 616.3L75 615.2L74 614.1L73 613L72 611.8L71 610.5L70 609.3L69 608L68 606.7L67 605.4L66 604.1L65 602.7L64 601.3L63 599.9L62 598.5L61 597L60 595.5L59 594L58 592.5L57 591L56 589.4L55 587.8L54 586.2L53 584.5L52 582.8L51 581.1L50 579.4L49 577.7L48 575.9L47 574.1L46 572.2L45 570.3L44 568.4L43 566.5L42 564.5L41 562.5L40 560.4L39 558.3L38 556.2L37 554.1L36 551.9L35 549.7L34 547.4L33 545.2L32 542.9L31 540.5Z"/><path fill="none" stroke="#00e8e8" stroke-width="2" d="M31 530.7L32.5 534.2L34 537.6L35.5 541L37 544.3L38.5 547.5L40 550.6L41.5 553.7L43 556.7L44.5 559.6L46 562.4L47.5 565.2L49 567.9L50.5 570.5L52 573L53.5 575.5L55 578L56.5 580.4L58 582.7L59.5 585L61 587.2L62.5 589.4L64 591.5L65.5 593.6L67 595.6L68.5 597.6L70 599.5L71.5 601.4L73 603.2L74.5 604.9L76 606.5L77.5 608.1L79 609.6L80.5 611L82 612.3L83.5 613.5L85 614.5L86.5 615.5L88 616.3L89.5 617L91 617.6L92.5 618L94 618.3L95.5 618.5L97 618.5L98.5 618.3L100 618L101.5 617.6L103 617L104.5 616.3L106 615.5L107.5 614.5L109 613.3L110.5 612.1L112 610.7L113.5 609.3L115 607.7L116.5 606L118 604.2L119.5 602.4L121 600.4L122.5 598.4L124 596.3L125.5 594.1L127 591.8L128.5 589.5L130 587.2L131.5 584.8L133 582.3L134.5 579.8L136 577.2L137.5 574.5L139 571.9L140.5 569.1L142 566.4L143.5 563.5L145 560.7L146.5 557.8L148 554.8L149.5 551.8L151 548.7L152.5 545.6L154 542.5L155.5 539.3L157 536.1L158.5 532.9L160 529.6L161.5 526.3L163 523L164.5 519.6L166 516.3L167.5 512.9L169 509.5L170.5 506.2L172 502.8L173.5 499.5L175 496.1L176.5 492.8L178 489.5L179.5 486.2L181 483L182.5 479.7L184 476.6L185.5 473.4L187 470.3L188.5 467.2L190 464.2L191.5 461.2L193 458.3L194.5 455.4L196 452.5L197.5 449.7L199 447L200.5 444.3L202 441.6L203.5 439L205 436.5L206.5 434L208 431.6L209.5 429.3L211 427L212.5 424.8L214 422.7L215.5 420.6L217 418.7L218.5 416.8L220 415.1L221.5 413.4L223 411.9L224.5 410.5L226 409.2L227.5 408L229 406.9L230.5 406L232 405.2L233.5 404.5L235 404L236.5 403.6L238 403.3L239.5 403.2L241 403.2L242.5 403.3L244 403.6L245.5 404L247 404.5L248.5 405.1L250 405.8L251.5 406.6L253 407.6L254.5 408.6L256 409.7L257.5 410.9L259 412.2L260.5 413.5L262 414.9L263.5 416.4L265 417.9L266.5 419.5L268 421.2L269.5 422.9L271 424.7L272.5 426.5L274 428.4L275.5 430.4L277 432.4L278.5 434.5L280 436.6L281.5 438.9L283 441.2L284.5 443.5L286 446L287.5 448.6L289 451.2L290.5 453.9L292 456.7L293.5 459.6L295 462.6L296.5 465.7L298 468.9L299.5 472.1L301 475.4L302.5 478.8L304 482.3L305.5 485.8L307 489.4L308.5 493L310 496.7L311.5 500.3L313 504L314.5 507.7L316 511.4L317.5 515.1L319 518.8L320.5 522.4L322 526L323.5 529.6L325 533.1L326.5 536.5L328 539.9L329.5 543.2L331 546.4L332.5 549.6L334 552.7L335.5 555.7L337 558.6L338.5 561.5L340 564.3L341.5 567L343 569.6L344.5 572.2L346 574.7L347.5 577.2L349 579.6L350.5 581.9L352 584.2L353.5 586.5L355 588.7L356.5 590.8L358 592.9L359.5 594.9L361 596.9L362.5 598.9L364 600.7L365.5 602.6L367 604.3L368.5 606L370 607.6L371.5 609.1L373 610.5L374.5 611.8L376 613.1L377.5 614.2L379 615.2L380.5 616.1L382 616.8L383.5 617.4L385 617.9L386.5 618.2L388 618.4L389.5 618.5L391 618.4L392.5 618.2L394 617.8L395.5 617.2L397 616.6L398.5 615.8L400 614.8L401.5 613.7L403 612.5L404.5 611.2L406 609.8L407.5 608.2L409 606.6L410.5 604.8L412 603L413.5 601.1L415 599.1L416.5 597L418 594.8L419.5 592.6L421 590.3L422.5 588L424 585.6L425.5 583.1L427 580.6L428.5 578L430 575.4L431.5 572.8L433 570.1L434.5 567.3L436 564.5L437.5 561.6L439 558.7L440.5 555.8L442 552.8L443.5 549.7L445 546.7L446.5 543.5L448 540.4L449.5 537.2L451 534L452.5 530.7L454 527.4L455.5 524.1L457 520.7L458.5 517.4L460 514L461.5 510.7L463 507.3L464.5 503.9L466 500.6L467.5 497.2L469 493.9L470.5 490.6L472 487.3L473.5 484L475 480.8L476.5 477.6L478 474.5L479.5 471.3L481 468.2L482.5 465.2L484 462.2L485.5 459.2L487 456.3L488.5 453.5L490 450.7L491.5 447.9L493 445.2L494.5 442.5L496 439.9L497.5 437.3L499 434.8L500.5 432.4L502 430L503.5 427.8L505 425.5L506.5 423.4L508 421.3L509.5 419.3L511 417.5L512.5 415.7L514 414L515.5 412.4L517 410.9L518.5 409.6L520 408.3L521.5 407.2L523 406.3L524.5 405.4L526 404.7L527.5 404.1L529 403.7L530.5 403.4L532 403.2L533.5 403.2L535 403.3L536.5 403.5L538 403.8L539.5 404.3L541 404.9L542.5 405.5L544 406.3L545.5 407.2L547 408.2L548.5 409.3L550 410.5L551.5 411.7L553 413L554.5 414.4L556 415.9L557.5 417.4L559 419L560.5 420.6L562 422.3L563.5 424.1L565 425.9L566.5 427.8L568 429.7L569.5 431.7L571 433.8L572.5 435.9L574 438.1L575.5 440.4L577 442.7L578.5 445.2L580 447.7L581.5 450.3L583 453L584.5 455.8L586 458.7L587.5 461.6L589 464.7L590.5 467.8L592 471L593.5 474.3L595 477.7L596.5 481.1L598 484.6L599.5 488.2L601 491.8L602.5 495.4L604 499.1L605.5 502.8L607 506.5L608.5 510.2L610 513.9L611.5 517.6L613 521.2L614.5 524.8L616 528.4L617.5 531.9L619 535.4L620.5 538.8L622 542.1L623.5 545.3L625 548.5L626.5 551.6L628 554.7L629.5 557.6L631 560.5L632.5 563.3L634 566.1L635.5 568.7L637 571.3L638.5 573.9L640 576.4L641.5 578.8L643 581.2L644.5 583.5L646 585.7L647.5 587.9L649 590.1L650.5 592.2L652 594.3L653.5 596.3L655 598.2L656.5 600.1L658 602L659.5 603.7L661 605.4L662.5 607.1L664 608.6L665.5 610.1L667 611.4L668.5 612.7L670 613.8L671.5 614.9L673 615.8L674.5 616.6L676 617.2L677.5 617.8L679 618.1L680.5 618.4L682 618.5L683.5 618.4L685 618.2L686.5 617.9L688 617.4L689.5 616.8L691 616L692.5 615.1L694 614.1L695.5 612.9L697 611.7L698.5 610.3L700 608.8L701.5 607.1L703 605.4L704.5 603.6L706 601.7L707.5 599.7L709 597.7L710.5 595.6L712 593.4L713.5 591.1L715 588.8L716.5 586.4L718 583.9L719.5 581.4L721 578.9L722.5 576.3L724 573.7L725.5 571L727 568.2L728.5 565.4L730 562.6L731.5 559.7L733 556.8L734.5 553.8L736 550.8L737.5 547.7L739 544.6L740.5 541.4L742 538.3L743.5 535L745 531.8L746.5 528.5L748 525.2L749.5 521.9L751 518.5L752.5 515.2L754 511.8L755.5 508.4L757 505.1L758.5 501.7L760 498.3L761.5 495L763 491.7L764.5 488.4L766 485.1L767.5 481.9L769 478.7L770.5 475.5L772 472.4L773.5 469.3L775 466.2L776.5 463.2L778 460.2L779.5 457.3L781 454.4L782.5 451.6L784 448.8L785.5 446.1L787 443.4L788.5 440.8L790 438.2L791.5 435.7L793 433.2L794.5 430.8L796 428.5L797.5 426.3L799 424.1L800.5 422L802 420L803.5 418.1L805 416.3L806.5 414.5L808 412.9L809.5 411.4L811 410L812.5 408.7L814 407.6L815.5 406.6L817 405.7L818.5 404.9L820 404.3L821.5 403.8L823 403.5L824.5 403.2L826 403.2L827.5 403.2L829 403.4L830.5 403.7L832 404.1L833.5 404.7L835 405.3L836.5 406.1L838 406.9L839.5 407.9L841 408.9L842.5 410.1L844 411.3L845.5 412.6L847 414L848.5 415.4L850 416.9L851.5 418.5L853 420.1L854.5 421.8L856 423.5L857.5 425.3L859 427.1L860.5 429.1L862 431L863.5 433.1L865 435.2L866.5 437.4L868 439.6L869.5 441.9L871 444.4L872.5 446.8L874 449.4L875.5 452.1L877 454.8L878.5 457.7L880 460.6L881.5 463.6L883 466.7L884.5 469.9L886 473.2L887.5 476.6L889 480L890.5 483.5L892 487L893.5 490.6L895 494.2L896.5 497.9L898 501.6L899.5 505.3L901 509L902.5 512.7L904 516.4L905.5 520L907 523.6L908.5 527.2L910 530.7L911.5 534.2L913 537.6L914.5 541L916 544.3L917.5 547.5L919 550.6L920.5 553.7L922 556.7L923.5 559.6L925 562.4L926.5 565.2L928 567.9L929.5 570.5L931 573L932.5 575.5L934 578L935.5 580.4L937 582.7L938.5 585L940 587.2L941.5 589.4L943 591.5L944.5 593.6L946 595.6L947.5 597.6L949 599.5L950.5 601.4L952 603.2L953.5 604.9L955 606.5L956.5 608.1L958 609.6L959.5 611L961 612.3L962.5 613.5L964 614.5L965.5 615.5L967 616.3L968.5 617L970 617.6L971.5 618L973 618.3L974.5 618.5L976 618.5L977.5 618.3L979 618L980.5 617.6L982 617L983.5 616.3L985 615.5L986.5 614.5L988 613.3L989.5 612.1L991 610.7L992.5 609.3L994 607.7L995.5 606L997 604.2L998.5 602.4L1000 600.4L1001.5 598.4L1003 596.3L1004.5 594.1L1006 591.8L1007.5 589.5L1009 587.2L1010.5 584.8L1012 582.3L1013.5 579.8L1015 577.2L1016.5 574.5L1018 571.9L1019.5 569.1L1021 566.4L1022.5 563.5L1024 560.7L1025.5 557.8L1027 554.8L1028.5 551.8L1030 548.7L1031.5 545.6L1033 542.5L1034.5 539.3L1036 536.1L1037.5 532.9L1039 529.6L1040.5 526.3L1042 523L1043.5 519.6L1045 516.3L1046.5 512.9L1048 509.5L1049.5 506.2L1051 502.8L1052.5 499.5L1054 496.1L1055.5 492.8L1057 489.5L1058.5 486.2L1060 483L1061.5 479.7L1063 476.6L1064.5 473.4L1066 470.3L1067.5 467.2L1069 464.2L1070.5 461.2L1072 458.3L1073.5 455.4L1075 452.5L1076.5 449.7L1078 447L1079.5 444.3L1081 441.6L1082.5 439L1084 436.5L1085.5 434L1087 431.6L1088.5 429.3L1090 427L1091.5 424.8L1093 422.7L1094.5 420.6L1096 418.7L1097.5 416.8L1099 415.1L1100.5 413.4L1102 411.9L1103.5 410.5L1105 409.2L1106.5 408L1108 406.9L1109.5 406L1111 405.2L1112.5 404.5L1114 404L1115.5 403.6L1117 403.3L1118.5 403.2L1120 403.2L1121.5 403.3L1123 403.6L1124.5 404L1126 404.5L1127.5 405.1L1129 405.8L1130.5 406.6L1132 407.6L1133.5 408.6L1135 409.7L1136.5 410.9L1138 412.2L1139.5 413.5L1141 414.9L1142.5 416.4L1144 417.9L1145.5 419.5L1147 421.2L1148.5 422.9L1150 424.7L1151.5 426.5L1153 428.4L1154.5 430.4L1156 432.4L1157.5 434.5L1159 436.6L1160.5 438.9L1162 441.2L1163.5 443.5L1165 446L1166.5 448.6L1168 451.2L1169.5 453.9L1171 456.7L1172.5 459.6L1174 462.6L1175.5 465.7L1177 468.9L1178.5 472.1L1180 475.4L1181.5 478.8L1183 482.3L1184.5 485.8L1186 489.4L1187.5 493L1189 496.7L1190.5 500.3L1192 504L1193.5 507.7L1195 511.4L1196.5 515.1L1198 518.8L1199.5 522.4L1201 526L1202.5 529.6L1204 533.1L1205.5 536.5L1207 539.9L1208.5 543.2L1210 546.4L1211.5 549.6L1213 552.7L1214.5 555.7L1216 558.6L1217.5 561.5L1219 564.3L1220.5 567L1222 569.6L1223.5 572.2L1225 574.7L1226.5 577.2L1228 579.6L1229.5 581.9L1231 584.2L1232.5 586.5L1234 588.7L1235.5 590.8L1237 592.9L1238.5 594.9L1240 596.9L1241.5 598.9L1243 600.7L1244.5 602.6L1246 604.3L1247.5 606L1249 607.6L1250.5 609.1L1252 610.5L1253.5 611.8L1255 613.1L1256.5 614.2L1258 615.2L1259.5 616.1L1261 616.8L1262.5 617.4L1264 617.9L1265.5 618.2L1267 618.4L1268.5 618.5L1270 618.4L1271.5 618.2L1273 617.8L1274.5 617.2L1276 616.6L1277.5 615.8L1279 614.8L1280.5 613.7L1282 612.5L1283.5 611.2L1285 609.8L1286.5 608.2L1288 606.6L1289.5 604.8L1291 603L1292.5 601.1L1294 599.1L1295.5 597L1297 594.8L1298.5 592.6L1300 590.3L1301.5 588L1303 585.6L1304.5 583.1L1306 580.6L1307.5 578L1309 575.4L1310.5 572.8L1312 570.1L1313.5 567.3L1315 564.5L1316.5 561.6L1318 558.7L1319.5 555.8L1321 552.8L1322.5 549.7L1324 546.7L1325.5 543.5L1327 540.4L1328.5 537.2L1330 534L1331.5 530.7L1333 527.4L1334.5 524.1L1336 520.7L1337.5 517.4L1339 514L1340.5 510.7L1342 507.3L1343.5 503.9L1345 500.6L1346.5 497.2L1348 493.9L1349.5 490.6L1351 487.3L1352.5 484L1354 480.8L1355.5 477.6L1357 474.5L1358.5 471.3L1360 468.2L1361.5 465.2L1363 462.2L1364.5 459.2L1366 456.3L1367.5 453.5L1369 450.7L1370.5 447.9L1372 445.2L1373.5 442.5L1375 439.9L1376.5 437.3L1378 434.8L1379.5 432.4L1381 430L1382.5 427.8L1384 425.5L1385.5 423.4L1387 421.3L1388.5 419.3L1390 417.5L1391.5 415.7L1393 414L1394.5 412.4L1396 410.9L1397.5 409.6L1399 408.3L1400.5 407.2L1402 406.3L1403.5 405.4L1405 404.7L1406.5 404.1L1408 403.7L1409.5 403.4L1411 403.2L1412.5 403.2L1414 403.3L1415.5 403.5L1417 403.8L1418.5 404.3L1420 404.9L1421.5 405.5L1423 406.3L1424.5 407.2L1426 408.2L1427.5 409.3L1429 410.5L1430.5 411.7L1432 413L1433.5 414.4L1435 415.9L1436.5 417.4L1438 419L1439.5 420.6L1441 422.3L1442.5 424.1L1444 425.9L1445.5 427.8L1447 429.7L1448.5 431.7L1450 433.8L1451.5 435.9L1453 438.1L1454.5 440.4L1456 442.7L1457.5 445.2L1459 447.7L1460.5 450.3L1462 453L1463.5 455.8L1465 458.7L1466.5 461.6L1468 464.7L1469.5 467.8L1471 471L1472.5 474.3L1474 477.7L1475.5 481.1L1477 484.6L1478.5 488.2L1480 491.8L1481.5 495.4L1483 499.1L1484.5 502.8L1486 506.5L1487.5 510.2L1489 513.9L1490.5 517.6L1492 521.2L1493.5 524.8L1495 528.4"/><path fill="none" stroke="#00e8e8" stroke-width="2" d="M31 537.1L32.5 540.6L34 544L35.5 547.4L37 550.7L38.5 553.9L40 557L41.5 560.1L43 563.1L44.5 566L46 568.8L47.5 571.6L49 574.3L50.5 576.9L52 579.4L53.5 581.9L55 584.4L56.5 586.8L58 589.1L59.5 591.4L61 593.6L62.5 595.8L64 597.9L65.5 600L67 602L68.5 604L70 605.9L71.5 607.8L73 609.6L74.5 611.3L76 612.9L77.5 614.5L79 616L80.5 617.4L82 618.7L83.5 619.9L85 620.9L86.5 621.9L88 622.7L89.5 623.4L91 624L92.5 624.4L94 624.7L95.5 624.9L97 624.9L98.5 624.7L100 624.4L101.5 624L103 623.4L104.5 622.7L106 621.9L107.5 620.9L109 619.7L110.5 618.5L112 617.1L113.5 615.7L115 614.1L116.5 612.4L118 610.6L119.5 608.8L121 606.8L122.5 604.8L124 602.7L125.5 600.5L127 598.2L128.5 595.9L130 593.6L131.5 591.2L133 588.7L134.5 586.2L136 583.6L137.5 580.9L139 578.3L140.5 575.5L142 572.8L143.5 569.9L145 567.1L146.5 564.2L148 561.2L149.5 558.2L151 555.1L152.5 552L154 548.9L155.5 545.7L157 542.5L158.5 539.3L160 536L161.5 532.7L163 529.4L164.5 526L166 522.7L167.5 519.3L169 515.9L170.5 512.6L172 509.2L173.5 505.9L175 502.5L176.5 499.2L178 495.9L179.5 492.6L181 489.4L182.5 486.1L184 483L185.5 479.8L187 476.7L188.5 473.6L190 470.6L191.5 467.6L193 464.7L194.5 461.8L196 458.9L197.5 456.1L199 453.4L200.5 450.7L202 448L203.5 445.4L205 442.9L206.5 440.4L208 438L209.5 435.7L211 433.4L212.5 431.2L214 429.1L215.5 427L217 425.1L218.5 423.2L220 421.5L221.5 419.8L223 418.3L224.5 416.9L226 415.6L227.5 414.4L229 413.3L230.5 412.4L232 411.6L233.5 410.9L235 410.4L236.5 410L238 409.7L239.5 409.6L241 409.6L242.5 409.7L244 410L245.5 410.4L247 410.9L248.5 411.5L250 412.2L251.5 413L253 414L254.5 415L256 416.1L257.5 417.3L259 418.6L260.5 419.9L262 421.3L263.5 422.8L265 424.3L266.5 425.9L268 427.6L269.5 429.3L271 431.1L272.5 432.9L274 434.8L275.5 436.8L277 438.8L278.5 440.9L280 443L281.5 445.3L283 447.6L284.5 449.9L286 452.4L287.5 455L289 457.6L290.5 460.3L292 463.1L293.5 466L295 469L296.5 472.1L298 475.3L299.5 478.5L301 481.8L302.5 485.2L304 488.7L305.5 492.2L307 495.8L308.5 499.4L310 503.1L311.5 506.7L313 510.4L314.5 514.1L316 517.8L317.5 521.5L319 525.2L320.5 528.8L322 532.4L323.5 536L325 539.5L326.5 542.9L328 546.3L329.5 549.6L331 552.8L332.5 556L334 559.1L335.5 562.1L337 565L338.5 567.9L340 570.7L341.5 573.4L343 576L344.5 578.6L346 581.1L347.5 583.6L349 586L350.5 588.3L352 590.6L353.5 592.9L355 595.1L356.5 597.2L358 599.3L359.5 601.3L361 603.3L362.5 605.3L364 607.1L365.5 609L367 610.7L368.5 612.4L370 614L371.5 615.5L373 616.9L374.5 618.2L376 619.5L377.5 620.6L379 621.6L380.5 622.5L382 623.2L383.5 623.8L385 624.3L386.5 624.6L388 624.8L389.5 624.9L391 624.8L392.5 624.6L394 624.2L395.5 623.6L397 623L398.5 622.2L400 621.2L401.5 620.1L403 618.9L404.5 617.6L406 616.2L407.5 614.6L409 613L410.5 611.2L412 609.4L413.5 607.5L415 605.5L416.5 603.4L418 601.2L419.5 599L421 596.7L422.5 594.4L424 592L425.5 589.5L427 587L428.5 584.4L430 581.8L431.5 579.2L433 576.5L434.5 573.7L436 570.9L437.5 568L439 565.1L440.5 562.2L442 559.2L443.5 556.1L445 553.1L446.5 549.9L448 546.8L449.5 543.6L451 540.4L452.5 537.1L454 533.8L455.5 530.5L457 527.1L458.5 523.8L460 520.4L461.5 517.1L463 513.7L464.5 510.3L466 507L467.5 503.6L469 500.3L470.5 497L472 493.7L473.5 490.4L475 487.2L476.5 484L478 480.9L479.5 477.7L481 474.6L482.5 471.6L484 468.6L485.5 465.6L487 462.7L488.5 459.9L490 457.1L491.5 454.3L493 451.6L494.5 448.9L496 446.3L497.5 443.7L499 441.2L500.5 438.8L502 436.4L503.5 434.2L505 431.9L506.5 429.8L508 427.7L509.5 425.7L511 423.9L512.5 422.1L514 420.4L515.5 418.8L517 417.3L518.5 416L520 414.7L521.5 413.6L523 412.7L524.5 411.8L526 411.1L527.5 410.5L529 410.1L530.5 409.8L532 409.6L533.5 409.6L535 409.7L536.5 409.9L538 410.2L539.5 410.7L541 411.3L542.5 411.9L544 412.7L545.5 413.6L547 414.6L548.5 415.7L550 416.9L551.5 418.1L553 419.4L554.5 420.8L556 422.3L557.5 423.8L559 425.4L560.5 427L562 428.7L563.5 430.5L565 432.3L566.5 434.2L568 436.1L569.5 438.1L571 440.2L572.5 442.3L574 444.5L575.5 446.8L577 449.1L578.5 451.6L580 454.1L581.5 456.7L583 459.4L584.5 462.2L586 465.1L587.5 468L589 471.1L590.5 474.2L592 477.4L593.5 480.7L595 484.1L596.5 487.5L598 491L599.5 494.6L601 498.2L602.5 501.8L604 505.5L605.5 509.2L607 512.9L608.5 516.6L610 520.3L611.5 524L613 527.6L614.5 531.2L616 534.8L617.5 538.3L619 541.8L620.5 545.2L622 548.5L623.5 551.7L625 554.9L626.5 558L628 561.1L629.5 564L631 566.9L632.5 569.7L634 572.5L635.5 575.1L637 577.7L638.5 580.3L640 582.8L641.5 585.2L643 587.6L644.5 589.9L646 592.1L647.5 594.3L649 596.5L650.5 598.6L652 600.7L653.5 602.7L655 604.6L656.5 606.5L658 608.4L659.5 610.1L661 611.8L662.5 613.5L664 615L665.5 616.5L667 617.8L668.5 619.1L670 620.2L671.5 621.3L673 622.2L674.5 623L676 623.6L677.5 624.2L679 624.5L680.5 624.8L682 624.9L683.5 624.8L685 624.6L686.5 624.3L688 623.8L689.5 623.2L691 622.4L692.5 621.5L694 620.5L695.5 619.3L697 618.1L698.5 616.7L700 615.2L701.5 613.5L703 611.8L704.5 610L706 608.1L707.5 606.1L709 604.1L710.5 602L712 599.8L713.5 597.5L715 595.2L716.5 592.8L718 590.3L719.5 587.8L721 585.3L722.5 582.7L724 580.1L725.5 577.4L727 574.6L728.5 571.8L730 569L731.5 566.1L733 563.2L734.5 560.2L736 557.2L737.5 554.1L739 551L740.5 547.8L742 544.7L743.5 541.4L745 538.2L746.5 534.9L748 531.6L749.5 528.3L751 524.9L752.5 521.6L754 518.2L755.5 514.8L757 511.5L758.5 508.1L760 504.7L761.5 501.4L763 498.1L764.5 494.8L766 491.5L767.5 488.3L769 485.1L770.5 481.9L772 478.8L773.5 475.7L775 472.6L776.5 469.6L778 466.6L779.5 463.7L781 460.8L782.5 458L784 455.2L785.5 452.5L787 449.8L788.5 447.2L790 444.6L791.5 442.1L793 439.6L794.5 437.2L796 434.9L797.5 432.7L799 430.5L800.5 428.4L802 426.4L803.5 424.5L805 422.7L806.5 420.9L808 419.3L809.5 417.8L811 416.4L812.5 415.1L814 414L815.5 413L817 412.1L818.5 411.3L820 410.7L821.5 410.2L823 409.9L824.5 409.6L826 409.6L827.5 409.6L829 409.8L830.5 410.1L832 410.5L833.5 411.1L835 411.7L836.5 412.5L838 413.3L839.5 414.3L841 415.3L842.5 416.5L844 417.7L845.5 419L847 420.4L848.5 421.8L850 423.3L851.5 424.9L853 426.5L854.5 428.2L856 429.9L857.5 431.7L859 433.5L860.5 435.5L862 437.4L863.5 439.5L865 441.6L866.5 443.8L868 446L869.5 448.3L871 450.8L872.5 453.2L874 455.8L875.5 458.5L877 461.2L878.5 464.1L880 467L881.5 470L883 473.1L884.5 476.3L886 479.6L887.5 483L889 486.4L890.5 489.9L892 493.4L893.5 497L895 500.6L896.5 504.3L898 508L899.5 511.7L901 515.4L902.5 519.1L904 522.8L905.5 526.4L907 530L908.5 533.6L910 537.1L911.5 540.6L913 544L914.5 547.4L916 550.7L917.5 553.9L919 557L920.5 560.1L922 563.1L923.5 566L925 568.8L926.5 571.6L928 574.3L929.5 576.9L931 579.4L932.5 581.9L934 584.4L935.5 586.8L937 589.1L938.5 591.4L940 593.6L941.5 595.8L943 597.9L944.5 600L946 602L947.5 604L949 605.9L950.5 607.8L952 609.6L953.5 611.3L955 612.9L956.5 614.5L958 616L959.5 617.4L961 618.7L962.5 619.9L964 620.9L965.5 621.9L967 622.7L968.5 623.4L970 624L971.5 624.4L973 624.7L974.5 624.9L976 624.9L977.5 624.7L979 624.4L980.5 624L982 623.4L983.5 622.7L985 621.9L986.5 620.9L988 619.7L989.5 618.5L991 617.1L992.5 615.7L994 614.1L995.5 612.4L997 610.6L998.5 608.8L1000 606.8L1001.5 604.8L1003 602.7L1004.5 600.5L1006 598.2L1007.5 595.9L1009 593.6L1010.5 591.2L1012 588.7L1013.5 586.2L1015 583.6L1016.5 580.9L1018 578.3L1019.5 575.5L1021 572.8L1022.5 569.9L1024 567.1L1025.5 564.2L1027 561.2L1028.5 558.2L1030 555.1L1031.5 552L1033 548.9L1034.5 545.7L1036 542.5L1037.5 539.3L1039 536L1040.5 532.7L1042 529.4L1043.5 526L1045 522.7L1046.5 519.3L1048 515.9L1049.5 512.6L1051 509.2L1052.5 505.9L1054 502.5L1055.5 499.2L1057 495.9L1058.5 492.6L1060 489.4L1061.5 486.1L1063 483L1064.5 479.8L1066 476.7L1067.5 473.6L1069 470.6L1070.5 467.6L1072 464.7L1073.5 461.8L1075 458.9L1076.5 456.1L1078 453.4L1079.5 450.7L1081 448L1082.5 445.4L1084 442.9L1085.5 440.4L1087 438L1088.5 435.7L1090 433.4L1091.5 431.2L1093 429.1L1094.5 427L1096 425.1L1097.5 423.2L1099 421.5L1100.5 419.8L1102 418.3L1103.5 416.9L1105 415.6L1106.5 414.4L1108 413.3L1109.5 412.4L1111 411.6L1112.5 410.9L1114 410.4L1115.5 410L1117 409.7L1118.5 409.6L1120 409.6L1121.5 409.7L1123 410L1124.5 410.4L1126 410.9L1127.5 411.5L1129 412.2L1130.5 413L1132 414L1133.5 415L1135 416.1L1136.5 417.3L1138 418.6L1139.5 419.9L1141 421.3L1142.5 422.8L1144 424.3L1145.5 425.9L1147 427.6L1148.5 429.3L1150 431.1L1151.5 432.9L1153 434.8L1154.5 436.8L1156 438.8L1157.5 440.9L1159 443L1160.5 445.3L1162 447.6L1163.5 449.9L1165 452.4L1166.5 455L1168 457.6L1169.5 460.3L1171 463.1L1172.5 466L1174 469L1175.5 472.1L1177 475.3L1178.5 478.5L1180 481.8L1181.5 485.2L1183 488.7L1184.5 492.2L1186 495.8L1187.5 499.4L1189 503.1L1190.5 506.7L1192 510.4L1193.5 514.1L1195 517.8L1196.5 521.5L1198 525.2L1199.5 528.8L1201 532.4L1202.5 536L1204 539.5L1205.5 542.9L1207 546.3L1208.5 549.6L1210 552.8L1211.5 556L1213 559.1L1214.5 562.1L1216 565L1217.5 567.9L1219 570.7L1220.5 573.4L1222 576L1223.5 578.6L1225 581.1L1226.5 583.6L1228 586L1229.5 588.3L1231 590.6L1232.5 592.9L1234 595.1L1235.5 597.2L1237 599.3L1238.5 601.3L1240 603.3L1241.5 605.3L1243 607.1L1244.5 609L1246 610.7L1247.5 612.4L1249 614L1250.5 615.5L1252 616.9L1253.5 618.2L1255 619.5L1256.5 620.6L1258 621.6L1259.5 622.5L1261 623.2L1262.5 623.8L1264 624.3L1265.5 624.6L1267 624.8L1268.5 624.9L1270 624.8L1271.5 624.6L1273 624.2L1274.5 623.6L1276 623L1277.5 622.2L1279 621.2L1280.5 620.1L1282 618.9L1283.5 617.6L1285 616.2L1286.5 614.6L1288 613L1289.5 611.2L1291 609.4L1292.5 607.5L1294 605.5L1295.5 603.4L1297 601.2L1298.5 599L1300 596.7L1301.5 594.4L1303 592L1304.5 589.5L1306 587L1307.5 584.4L1309 581.8L1310.5 579.2L1312 576.5L1313.5 573.7L1315 570.9L1316.5 568L1318 565.1L1319.5 562.2L1321 559.2L1322.5 556.1L1324 553.1L1325.5 549.9L1327 546.8L1328.5 543.6L1330 540.4L1331.5 537.1L1333 533.8L1334.5 530.5L1336 527.1L1337.5 523.8L1339 520.4L1340.5 517.1L1342 513.7L1343.5 510.3L1345 507L1346.5 503.6L1348 500.3L1349.5 497L1351 493.7L1352.5 490.4L1354 487.2L1355.5 484L1357 480.9L1358.5 477.7L1360 474.6L1361.5 471.6L1363 468.6L1364.5 465.6L1366 462.7L1367.5 459.9L1369 457.1L1370.5 454.3L1372 451.6L1373.5 448.9L1375 446.3L1376.5 443.7L1378 441.2L1379.5 438.8L1381 436.4L1382.5 434.2L1384 431.9L1385.5 429.8L1387 427.7L1388.5 425.7L1390 423.9L1391.5 422.1L1393 420.4L1394.5 418.8L1396 417.3L1397.5 416L1399 414.7L1400.5 413.6L1402 412.7L1403.5 411.8L1405 411.1L1406.5 410.5L1408 410.1L1409.5 409.8L1411 409.6L1412.5 409.6L1414 409.7L1415.5 409.9L1417 410.2L1418.5 410.7L1420 411.3L1421.5 411.9L1423 412.7L1424.5 413.6L1426 414.6L1427.5 415.7L1429 416.9L1430.5 418.1L1432 419.4L1433.5 420.8L1435 422.3L1436.5 423.8L1438 425.4L1439.5 427L1441 428.7L1442.5 430.5L1444 432.3L1445.5 434.2L1447 436.1L1448.5 438.1L1450 440.2L1451.5 442.3L1453 444.5L1454.5 446.8L1456 449.1L1457.5 451.6L1459 454.1L1460.5 456.7L1462 459.4L1463.5 462.2L1465 465.1L1466.5 468L1468 471.1L1469.5 474.2L1471 477.4L1472.5 480.7L1474 484.1L1475.5 487.5L1477 491L1478.5 494.6L1480 498.2L1481.5 501.8L1483 505.5L1484.5 509.2L1486 512.9L1487.5 516.6L1489 520.3L1490.5 524L1492 527.6L1493.5 531.2L1495 534.8"/><path fill="#006400" d="M31 511h32.8v3h-32.8zM31 514h4v2h-4zM51 514h2v2h-2zM59 514h2v2h-2zM83.8 499h29.5v14h-29.5zM98.8 513h5.0v3h-5.0zM132.3 498h78.3v2h-78.3zM132.3 493h5.0v5h-5.0zM139.3 493h5.0v5h-5.0zM149.3 493h1.0v5h-1.0zM153.3 493h12.0v5h-12.0zM168.3 493h8.0v5h-8.0zM179.3 493h12.0v5h-12.0zM193.3 493h1.0v5h-1.0zM195.3 493h12.0v5h-12.0zM132.3 506.5h12.0v4.5h-12.0zM146.3 506.5h3.0v4.5h-3.0zM151.3 506.5h1.0v4.5h-1.0zM153.3 506.5h12.0v4.5h-12.0zM166.3 506.5h8.0v4.5h-8.0zM177.3 506.5h3.0v4.5h-3.0zM182.3 506.5h1.0v4.5h-1.0zM184.3 506.5h8.0v4.5h-8.0zM193.3 506.5h8.0v4.5h-8.0zM204.3 506.5h6.3v4.5h-6.3zM230.2 499h29.3v14h-29.3zM236.2 513h5.0v3h-5.0zM279 505h77.8v9h-77.8zM279 513h2.0v4h-2.0zM304 513h1.0v4h-1.0zM326 513h2.0v4h-2.0zM330 513h1.0v4h-1.0zM334 513h8.0v4h-8.0zM376.8 499h29.5v14h-29.5zM397.8 513h5.0v3h-5.0zM425.3 498h78.3v2h-78.3zM429.3 493h1.0v5h-1.0zM431.3 493h1.0v5h-1.0zM463.3 493h3.0v5h-3.0zM468.3 493h1.0v5h-1.0zM471.3 493h12.0v5h-12.0zM489.3 493h1.0v5h-1.0zM492.3 493h3.0v5h-3.0zM497.3 493h1.0v5h-1.0zM500.3 493h1.0v5h-1.0zM502.3 493h1.3v5h-1.3zM433.3 506.5h12.0v4.5h-12.0zM448.3 506.5h1.0v4.5h-1.0zM450.3 506.5h3.0v4.5h-3.0zM454.3 506.5h12.0v4.5h-12.0zM471.3 506.5h8.0v4.5h-8.0zM482.3 506.5h2.0v4.5h-2.0zM487.3 506.5h3.0v4.5h-3.0zM491.3 506.5h3.0v4.5h-3.0zM495.3 506.5h1.0v4.5h-1.0zM497.3 506.5h6.3v4.5h-6.3zM523.2 499h29.3v14h-29.3zM523.2 513h8.0v3h-8.0zM533.2 513h8.0v3h-8.0zM548.2 513h3.0v3h-3.0zM572 505h77.8v9h-77.8zM572 513h8.0v4h-8.0zM585 513h1.0v4h-1.0zM598 513h5.0v4h-5.0zM605 513h3.0v4h-3.0zM615 513h2.0v4h-2.0zM619 513h5.0v4h-5.0zM627 513h1.0v4h-1.0zM637 513h3.0v4h-3.0zM642 513h2.0v4h-2.0zM669.8 499h29.5v14h-29.5zM669.8 513h3.0v3h-3.0zM675.8 513h5.0v3h-5.0zM682.8 513h5.0v3h-5.0zM718.3 498h78.3v2h-78.3zM718.3 493h1.0v5h-1.0zM735.3 493h2.0v5h-2.0zM738.3 493h1.0v5h-1.0zM742.3 493h2.0v5h-2.0zM745.3 493h5.0v5h-5.0zM751.3 493h12.0v5h-12.0zM765.3 493h12.0v5h-12.0zM783.3 493h12.0v5h-12.0zM718.3 506.5h5.0v4.5h-5.0zM724.3 506.5h1.0v4.5h-1.0zM727.3 506.5h3.0v4.5h-3.0zM731.3 506.5h5.0v4.5h-5.0zM737.3 506.5h1.0v4.5h-1.0zM741.3 506.5h5.0v4.5h-5.0zM747.3 506.5h5.0v4.5h-5.0zM753.3 506.5h2.0v4.5h-2.0zM756.3 506.5h1.0v4.5h-1.0zM759.3 506.5h3.0v4.5h-3.0zM763.3 506.5h3.0v4.5h-3.0zM767.3 506.5h8.0v4.5h-8.0zM778.3 506.5h2.0v4.5h-2.0zM782.3 506.5h1.0v4.5h-1.0zM785.3 506.5h8.0v4.5h-8.0zM816.2 499h29.3v14h-29.3zM823.2 513h2.0v3h-2.0zM832.2 513h3.0v3h-3.0zM842.2 513h2.0v3h-2.0zM865 505h77.8v9h-77.8zM865 513h3.0v4h-3.0zM873 513h3.0v4h-3.0zM883 513h5.0v4h-5.0zM917 513h3.0v4h-3.0zM935 513h7.8v4h-7.8zM962.8 499h29.5v14h-29.5zM962.8 513h5.0v3h-5.0zM969.8 513h3.0v3h-3.0zM975.8 513h2.0v3h-2.0zM982.8 513h8.0v3h-8.0zM1011.3 498h78.3v2h-78.3zM1011.3 493h3.0v5h-3.0zM1015.3 493h1.0v5h-1.0zM1018.3 493h1.0v5h-1.0zM1029.3 493h3.0v5h-3.0zM1039.3 493h12.0v5h-12.0zM1053.3 493h12.0v5h-12.0zM1066.3 493h12.0v5h-12.0zM1080.3 493h1.0v5h-1.0zM1084.3 493h5.3v5h-5.3zM1011.3 506.5h2.0v4.5h-2.0zM1014.3 506.5h2.0v4.5h-2.0zM1018.3 506.5h8.0v4.5h-8.0zM1029.3 506.5h8.0v4.5h-8.0zM1038.3 506.5h3.0v4.5h-3.0zM1049.3 506.5h8.0v4.5h-8.0zM1058.3 506.5h2.0v4.5h-2.0zM1061.3 506.5h1.0v4.5h-1.0zM1064.3 506.5h5.0v4.5h-5.0zM1072.3 506.5h12.0v4.5h-12.0zM1085.3 506.5h4.3v4.5h-4.3zM1109.2 499h29.3v14h-29.3zM1109.2 513h5.0v3h-5.0zM1127.2 513h1.0v3h-1.0zM1131.2 513h2.0v3h-2.0zM1158 505h77.8v9h-77.8zM1163 513h5.0v4h-5.0zM1184 513h5.0v4h-5.0zM1194 513h8.0v4h-8.0zM1207 513h2.0v4h-2.0zM1233 513h2.8v4h-2.8zM1255.8 499h29.5v14h-29.5zM1263.8 513h5.0v3h-5.0zM1271.8 513h8.0v3h-8.0zM1282.8 513h2.0v3h-2.0zM1304.3 498h78.3v2h-78.3zM1304.3 493h3.0v5h-3.0zM1315.3 493h1.0v5h-1.0zM1318.3 493h5.0v5h-5.0zM1324.3 493h3.0v5h-3.0zM1329.3 493h5.0v5h-5.0zM1350.3 493h1.0v5h-1.0zM1352.3 493h3.0v5h-3.0zM1358.3 493h12.0v5h-12.0zM1373.3 493h8.0v5h-8.0zM1304.3 506.5h12.0v4.5h-12.0zM1317.3 506.5h3.0v4.5h-3.0zM1322.3 506.5h12.0v4.5h-12.0zM1335.3 506.5h8.0v4.5h-8.0zM1346.3 506.5h8.0v4.5h-8.0zM1355.3 506.5h8.0v4.5h-8.0zM1366.3 506.5h8.0v4.5h-8.0zM1377.3 506.5h5.3v4.5h-5.3zM1402.2 499h29.3v14h-29.3zM1402.2 513h2.0v3h-2.0zM1407.2 513h1.0v3h-1.0zM1414.2 513h5.0v3h-5.0zM1424.2 513h3.0v3h-3.0zM1451 505h45v9h-45zM1451 513h3.0v4h-3.0zM1456 513h3.0v4h-3.0zM1493 513h3.0v4h-3.0z"/><path fill="#00a800" d="M83.8 503h29.5v5h-29.5zM230.2 503h29.3v5h-29.3zM376.8 503h29.5v5h-29.5zM523.2 503h29.3v5h-29.3zM669.8 503h29.5v5h-29.5zM816.2 503h29.3v5h-29.3zM962.8 503h29.5v5h-29.5zM1109.2 503h29.3v5h-29.3zM1255.8 503h29.5v5h-29.5zM1402.2 503h29.3v5h-29.3z"/><path fill="#00e600" d="M31 511.5h32.8v1.6h-32.8zM31 505h1.5v7h-1.5zM83.8 504.5h29.5v1.6h-29.5zM132.3 500h78.3v6.5h-78.3zM230.2 504.5h29.3v1.6h-29.3zM279 505h77.8v7h-77.8zM376.8 504.5h29.5v1.6h-29.5zM425.3 500h78.3v6.5h-78.3zM523.2 504.5h29.3v1.6h-29.3zM572 505h77.8v7h-77.8zM669.8 504.5h29.5v1.6h-29.5zM718.3 500h78.3v6.5h-78.3zM816.2 504.5h29.3v1.6h-29.3zM865 505h77.8v7h-77.8zM962.8 504.5h29.5v1.6h-29.5zM1011.3 500h78.3v6.5h-78.3zM1109.2 504.5h29.3v1.6h-29.3zM1158 505h77.8v7h-77.8zM1255.8 504.5h29.5v1.6h-29.5zM1304.3 500h78.3v6.5h-78.3zM1402.2 504.5h29.3v1.6h-29.3zM1451 505h45v7h-45z"/><path fill="#007000" d="M72.9 562L79.9 562L77.4 579L75.4 579ZM121.1 562L128.1 562L125.6 579L123.6 579ZM219.5 450L226.5 450L224 433L222 433ZM268.1 450L275.1 450L272.6 433L270.6 433ZM365.9 562L372.9 562L370.4 579L368.4 579ZM414.1 562L421.1 562L418.6 579L416.6 579ZM512.5 450L519.5 450L517 433L515 433ZM561.1 450L568.1 450L565.6 433L563.6 433ZM658.9 562L665.9 562L663.4 579L661.4 579ZM707.1 562L714.1 562L711.6 579L709.6 579ZM805.5 450L812.5 450L810 433L808 433ZM854.1 450L861.1 450L858.6 433L856.6 433ZM951.9 562L958.9 562L956.4 579L954.4 579ZM1000.1 562L1007.1 562L1004.6 579L1002.6 579ZM1098.5 450L1105.5 450L1103 433L1101 433ZM1147.1 450L1154.1 450L1151.6 433L1149.6 433ZM1244.9 562L1251.9 562L1249.4 579L1247.4 579ZM1293.1 562L1300.1 562L1297.6 579L1295.6 579ZM1391.5 450L1398.5 450L1396 433L1394 433ZM1440.1 450L1447.1 450L1444.6 433L1442.6 433Z"/><path fill="none" stroke="#007000" stroke-width="2.8" stroke-linejoin="miter" stroke-miterlimit="4" d="M63.8 510L76.4 579L83.8 509M113.3 505L124.6 579L132.3 503M210.6 503L223 433L230.2 503M259.5 505L271.6 433L279 509M356.8 510L369.4 579L376.8 509M406.3 505L417.6 579L425.3 503M503.6 503L516 433L523.2 503M552.5 505L564.6 433L572 509M649.8 510L662.4 579L669.8 509M699.3 505L710.6 579L718.3 503M796.6 503L809 433L816.2 503M845.5 505L857.6 433L865 509M942.8 510L955.4 579L962.8 509M992.3 505L1003.6 579L1011.3 503M1089.6 503L1102 433L1109.2 503M1138.5 505L1150.6 433L1158 509M1235.8 510L1248.4 579L1255.8 509M1285.3 505L1296.6 579L1304.3 503M1382.6 503L1395 433L1402.2 503M1431.5 505L1443.6 433L1451 509"/><path fill="none" stroke="#00d800" stroke-width="1.3" stroke-linejoin="miter" stroke-miterlimit="4" d="M63.8 510L76.4 579L83.8 509M113.3 505L124.6 579L132.3 503M210.6 503L223 433L230.2 503M259.5 505L271.6 433L279 509M356.8 510L369.4 579L376.8 509M406.3 505L417.6 579L425.3 503M503.6 503L516 433L523.2 503M552.5 505L564.6 433L572 509M649.8 510L662.4 579L669.8 509M699.3 505L710.6 579L718.3 503M796.6 503L809 433L816.2 503M845.5 505L857.6 433L865 509M942.8 510L955.4 579L962.8 509M992.3 505L1003.6 579L1011.3 503M1089.6 503L1102 433L1109.2 503M1138.5 505L1150.6 433L1158 509M1235.8 510L1248.4 579L1255.8 509M1285.3 505L1296.6 579L1304.3 503M1382.6 503L1395 433L1402.2 503M1431.5 505L1443.6 433L1451 509"/><path fill="#000000" d="M177.8 42.6h1.4v2h-1.4zM177.8 61.6h1.4v2h-1.4zM177.8 80.7h1.4v2h-1.4zM177.8 99.7h1.4v2h-1.4zM177.5 119.1h2v1.4h-2zM177.8 137.9h1.4v2h-1.4zM177.8 156.9h1.4v2h-1.4zM177.8 176h1.4v2h-1.4zM177.8 195h1.4v2h-1.4zM177.5 214.4h2v1.4h-2zM177.8 233.2h1.4v2h-1.4zM177.8 252.2h1.4v2h-1.4zM177.8 271.3h1.4v2h-1.4zM177.8 290.3h1.4v2h-1.4zM177.5 309.7h2v1.4h-2zM177.8 328.5h1.4v2h-1.4zM177.8 347.5h1.4v2h-1.4zM177.8 366.6h1.4v2h-1.4zM177.8 385.6h1.4v2h-1.4zM177.5 405h2v1.4h-2zM177.8 423.8h1.4v2h-1.4zM177.8 442.8h1.4v2h-1.4zM177.8 461.9h1.4v2h-1.4zM177.8 480.9h1.4v2h-1.4zM177.5 500.3h2v1.4h-2zM177.8 519.1h1.4v2h-1.4zM177.8 538.1h1.4v2h-1.4zM177.8 557.2h1.4v2h-1.4zM177.8 576.2h1.4v2h-1.4zM177.5 595.6h2v1.4h-2zM177.8 614.4h1.4v2h-1.4zM177.8 633.4h1.4v2h-1.4zM177.8 652.5h1.4v2h-1.4zM177.8 671.5h1.4v2h-1.4zM177.5 690.9h2v1.4h-2zM177.8 709.7h1.4v2h-1.4zM177.8 728.7h1.4v2h-1.4zM177.8 747.8h1.4v2h-1.4zM177.8 766.8h1.4v2h-1.4zM177.5 786.2h2v1.4h-2zM177.8 805h1.4v2h-1.4zM177.8 824h1.4v2h-1.4zM177.8 843.1h1.4v2h-1.4zM177.8 862.1h1.4v2h-1.4zM177.5 881.5h2v1.4h-2zM177.8 900.3h1.4v2h-1.4zM177.8 919.3h1.4v2h-1.4zM177.8 938.4h1.4v2h-1.4zM177.8 957.4h1.4v2h-1.4zM324.3 42.6h1.4v2h-1.4zM324.3 61.6h1.4v2h-1.4zM324.3 80.7h1.4v2h-1.4zM324.3 99.7h1.4v2h-1.4zM324 119.1h2v1.4h-2zM324.3 137.9h1.4v2h-1.4zM324.3 156.9h1.4v2h-1.4zM324.3 176h1.4v2h-1.4zM324.3 195h1.4v2h-1.4zM324 214.4h2v1.4h-2zM324.3 233.2h1.4v2h-1.4zM324.3 252.2h1.4v2h-1.4zM324.3 271.3h1.4v2h-1.4zM324.3 290.3h1.4v2h-1.4zM324 309.7h2v1.4h-2zM324.3 328.5h1.4v2h-1.4zM324.3 347.5h1.4v2h-1.4zM324.3 366.6h1.4v2h-1.4zM324.3 385.6h1.4v2h-1.4zM324 405h2v1.4h-2zM324.3 423.8h1.4v2h-1.4zM324.3 442.8h1.4v2h-1.4zM324.3 461.9h1.4v2h-1.4zM324.3 480.9h1.4v2h-1.4zM324 500.3h2v1.4h-2zM324.3 519.1h1.4v2h-1.4zM324.3 538.1h1.4v2h-1.4zM324.3 557.2h1.4v2h-1.4zM324.3 576.2h1.4v2h-1.4zM324 595.6h2v1.4h-2zM324.3 614.4h1.4v2h-1.4zM324.3 633.4h1.4v2h-1.4zM324.3 652.5h1.4v2h-1.4zM324.3 671.5h1.4v2h-1.4zM324 690.9h2v1.4h-2zM324.3 709.7h1.4v2h-1.4zM324.3 728.7h1.4v2h-1.4zM324.3 747.8h1.4v2h-1.4zM324.3 766.8h1.4v2h-1.4zM324 786.2h2v1.4h-2zM324.3 805h1.4v2h-1.4zM324.3 824h1.4v2h-1.4zM324.3 843.1h1.4v2h-1.4zM324.3 862.1h1.4v2h-1.4zM324 881.5h2v1.4h-2zM324.3 900.3h1.4v2h-1.4zM324.3 919.3h1.4v2h-1.4zM324.3 938.4h1.4v2h-1.4zM324.3 957.4h1.4v2h-1.4zM470.8 42.6h1.4v2h-1.4zM470.8 61.6h1.4v2h-1.4zM470.8 80.7h1.4v2h-1.4zM470.8 99.7h1.4v2h-1.4zM470.5 119.1h2v1.4h-2zM470.8 137.9h1.4v2h-1.4zM470.8 156.9h1.4v2h-1.4zM470.8 176h1.4v2h-1.4zM470.8 195h1.4v2h-1.4zM470.5 214.4h2v1.4h-2zM470.8 233.2h1.4v2h-1.4zM470.8 252.2h1.4v2h-1.4zM470.8 271.3h1.4v2h-1.4zM470.8 290.3h1.4v2h-1.4zM470.5 309.7h2v1.4h-2zM470.8 328.5h1.4v2h-1.4zM470.8 347.5h1.4v2h-1.4zM470.8 366.6h1.4v2h-1.4zM470.8 385.6h1.4v2h-1.4zM470.5 405h2v1.4h-2zM470.8 423.8h1.4v2h-1.4zM470.8 442.8h1.4v2h-1.4zM470.8 461.9h1.4v2h-1.4zM470.8 480.9h1.4v2h-1.4zM470.5 500.3h2v1.4h-2zM470.8 519.1h1.4v2h-1.4zM470.8 538.1h1.4v2h-1.4zM470.8 557.2h1.4v2h-1.4zM470.8 576.2h1.4v2h-1.4zM470.5 595.6h2v1.4h-2zM470.8 614.4h1.4v2h-1.4zM470.8 633.4h1.4v2h-1.4zM470.8 652.5h1.4v2h-1.4zM470.8 671.5h1.4v2h-1.4zM470.5 690.9h2v1.4h-2zM470.8 709.7h1.4v2h-1.4zM470.8 728.7h1.4v2h-1.4zM470.8 747.8h1.4v2h-1.4zM470.8 766.8h1.4v2h-1.4zM470.5 786.2h2v1.4h-2zM470.8 805h1.4v2h-1.4zM470.8 824h1.4v2h-1.4zM470.8 843.1h1.4v2h-1.4zM470.8 862.1h1.4v2h-1.4zM470.5 881.5h2v1.4h-2zM470.8 900.3h1.4v2h-1.4zM470.8 919.3h1.4v2h-1.4zM470.8 938.4h1.4v2h-1.4zM470.8 957.4h1.4v2h-1.4zM617.3 42.6h1.4v2h-1.4zM617.3 61.6h1.4v2h-1.4zM617.3 80.7h1.4v2h-1.4zM617.3 99.7h1.4v2h-1.4zM617 119.1h2v1.4h-2zM617.3 137.9h1.4v2h-1.4zM617.3 156.9h1.4v2h-1.4zM617.3 176h1.4v2h-1.4zM617.3 195h1.4v2h-1.4zM617 214.4h2v1.4h-2zM617.3 233.2h1.4v2h-1.4zM617.3 252.2h1.4v2h-1.4zM617.3 271.3h1.4v2h-1.4zM617.3 290.3h1.4v2h-1.4zM617 309.7h2v1.4h-2zM617.3 328.5h1.4v2h-1.4zM617.3 347.5h1.4v2h-1.4zM617.3 366.6h1.4v2h-1.4zM617.3 385.6h1.4v2h-1.4zM617 405h2v1.4h-2zM617.3 423.8h1.4v2h-1.4zM617.3 442.8h1.4v2h-1.4zM617.3 461.9h1.4v2h-1.4zM617.3 480.9h1.4v2h-1.4zM617 500.3h2v1.4h-2zM617.3 519.1h1.4v2h-1.4zM617.3 538.1h1.4v2h-1.4zM617.3 557.2h1.4v2h-1.4zM617.3 576.2h1.4v2h-1.4zM617 595.6h2v1.4h-2zM617.3 614.4h1.4v2h-1.4zM617.3 633.4h1.4v2h-1.4zM617.3 652.5h1.4v2h-1.4zM617.3 671.5h1.4v2h-1.4zM617 690.9h2v1.4h-2zM617.3 709.7h1.4v2h-1.4zM617.3 728.7h1.4v2h-1.4zM617.3 747.8h1.4v2h-1.4zM617.3 766.8h1.4v2h-1.4zM617 786.2h2v1.4h-2zM617.3 805h1.4v2h-1.4zM617.3 824h1.4v2h-1.4zM617.3 843.1h1.4v2h-1.4zM617.3 862.1h1.4v2h-1.4zM617 881.5h2v1.4h-2zM617.3 900.3h1.4v2h-1.4zM617.3 919.3h1.4v2h-1.4zM617.3 938.4h1.4v2h-1.4zM617.3 957.4h1.4v2h-1.4zM910.3 42.6h1.4v2h-1.4zM910.3 61.6h1.4v2h-1.4zM910.3 80.7h1.4v2h-1.4zM910.3 99.7h1.4v2h-1.4zM910 119.1h2v1.4h-2zM910.3 137.9h1.4v2h-1.4zM910.3 156.9h1.4v2h-1.4zM910.3 176h1.4v2h-1.4zM910.3 195h1.4v2h-1.4zM910 214.4h2v1.4h-2zM910.3 233.2h1.4v2h-1.4zM910.3 252.2h1.4v2h-1.4zM910.3 271.3h1.4v2h-1.4zM910.3 290.3h1.4v2h-1.4zM910 309.7h2v1.4h-2zM910.3 328.5h1.4v2h-1.4zM910.3 347.5h1.4v2h-1.4zM910.3 366.6h1.4v2h-1.4zM910.3 385.6h1.4v2h-1.4zM910 405h2v1.4h-2zM910.3 423.8h1.4v2h-1.4zM910.3 442.8h1.4v2h-1.4zM910.3 461.9h1.4v2h-1.4zM910.3 480.9h1.4v2h-1.4zM910 500.3h2v1.4h-2zM910.3 519.1h1.4v2h-1.4zM910.3 538.1h1.4v2h-1.4zM910.3 557.2h1.4v2h-1.4zM910.3 576.2h1.4v2h-1.4zM910 595.6h2v1.4h-2zM910.3 614.4h1.4v2h-1.4zM910.3 633.4h1.4v2h-1.4zM910.3 652.5h1.4v2h-1.4zM910.3 671.5h1.4v2h-1.4zM910 690.9h2v1.4h-2zM910.3 709.7h1.4v2h-1.4zM910.3 728.7h1.4v2h-1.4zM910.3 747.8h1.4v2h-1.4zM910.3 766.8h1.4v2h-1.4zM910 786.2h2v1.4h-2zM910.3 805h1.4v2h-1.4zM910.3 824h1.4v2h-1.4zM910.3 843.1h1.4v2h-1.4zM910.3 862.1h1.4v2h-1.4zM910 881.5h2v1.4h-2zM910.3 900.3h1.4v2h-1.4zM910.3 919.3h1.4v2h-1.4zM910.3 938.4h1.4v2h-1.4zM910.3 957.4h1.4v2h-1.4zM1056.8 42.6h1.4v2h-1.4zM1056.8 61.6h1.4v2h-1.4zM1056.8 80.7h1.4v2h-1.4zM1056.8 99.7h1.4v2h-1.4zM1056.5 119.1h2v1.4h-2zM1056.8 137.9h1.4v2h-1.4zM1056.8 156.9h1.4v2h-1.4zM1056.8 176h1.4v2h-1.4zM1056.8 195h1.4v2h-1.4zM1056.5 214.4h2v1.4h-2zM1056.8 233.2h1.4v2h-1.4zM1056.8 252.2h1.4v2h-1.4zM1056.8 271.3h1.4v2h-1.4zM1056.8 290.3h1.4v2h-1.4zM1056.5 309.7h2v1.4h-2zM1056.8 328.5h1.4v2h-1.4zM1056.8 347.5h1.4v2h-1.4zM1056.8 366.6h1.4v2h-1.4zM1056.8 385.6h1.4v2h-1.4zM1056.5 405h2v1.4h-2zM1056.8 423.8h1.4v2h-1.4zM1056.8 442.8h1.4v2h-1.4zM1056.8 461.9h1.4v2h-1.4zM1056.8 480.9h1.4v2h-1.4zM1056.5 500.3h2v1.4h-2zM1056.8 519.1h1.4v2h-1.4zM1056.8 538.1h1.4v2h-1.4zM1056.8 557.2h1.4v2h-1.4zM1056.8 576.2h1.4v2h-1.4zM1056.5 595.6h2v1.4h-2zM1056.8 614.4h1.4v2h-1.4zM1056.8 633.4h1.4v2h-1.4zM1056.8 652.5h1.4v2h-1.4zM1056.8 671.5h1.4v2h-1.4zM1056.5 690.9h2v1.4h-2zM1056.8 709.7h1.4v2h-1.4zM1056.8 728.7h1.4v2h-1.4zM1056.8 747.8h1.4v2h-1.4zM1056.8 766.8h1.4v2h-1.4zM1056.5 786.2h2v1.4h-2zM1056.8 805h1.4v2h-1.4zM1056.8 824h1.4v2h-1.4zM1056.8 843.1h1.4v2h-1.4zM1056.8 862.1h1.4v2h-1.4zM1056.5 881.5h2v1.4h-2zM1056.8 900.3h1.4v2h-1.4zM1056.8 919.3h1.4v2h-1.4zM1056.8 938.4h1.4v2h-1.4zM1056.8 957.4h1.4v2h-1.4zM1203.3 42.6h1.4v2h-1.4zM1203.3 61.6h1.4v2h-1.4zM1203.3 80.7h1.4v2h-1.4zM1203.3 99.7h1.4v2h-1.4zM1203 119.1h2v1.4h-2zM1203.3 137.9h1.4v2h-1.4zM1203.3 156.9h1.4v2h-1.4zM1203.3 176h1.4v2h-1.4zM1203.3 195h1.4v2h-1.4zM1203 214.4h2v1.4h-2zM1203.3 233.2h1.4v2h-1.4zM1203.3 252.2h1.4v2h-1.4zM1203.3 271.3h1.4v2h-1.4zM1203.3 290.3h1.4v2h-1.4zM1203 309.7h2v1.4h-2zM1203.3 328.5h1.4v2h-1.4zM1203.3 347.5h1.4v2h-1.4zM1203.3 366.6h1.4v2h-1.4zM1203.3 385.6h1.4v2h-1.4zM1203 405h2v1.4h-2zM1203.3 423.8h1.4v2h-1.4zM1203.3 442.8h1.4v2h-1.4zM1203.3 461.9h1.4v2h-1.4zM1203.3 480.9h1.4v2h-1.4zM1203 500.3h2v1.4h-2zM1203.3 519.1h1.4v2h-1.4zM1203.3 538.1h1.4v2h-1.4zM1203.3 557.2h1.4v2h-1.4zM1203.3 576.2h1.4v2h-1.4zM1203 595.6h2v1.4h-2zM1203.3 614.4h1.4v2h-1.4zM1203.3 633.4h1.4v2h-1.4zM1203.3 652.5h1.4v2h-1.4zM1203.3 671.5h1.4v2h-1.4zM1203 690.9h2v1.4h-2zM1203.3 709.7h1.4v2h-1.4zM1203.3 728.7h1.4v2h-1.4zM1203.3 747.8h1.4v2h-1.4zM1203.3 766.8h1.4v2h-1.4zM1203 786.2h2v1.4h-2zM1203.3 805h1.4v2h-1.4zM1203.3 824h1.4v2h-1.4zM1203.3 843.1h1.4v2h-1.4zM1203.3 862.1h1.4v2h-1.4zM1203 881.5h2v1.4h-2zM1203.3 900.3h1.4v2h-1.4zM1203.3 919.3h1.4v2h-1.4zM1203.3 938.4h1.4v2h-1.4zM1203.3 957.4h1.4v2h-1.4zM1349.8 42.6h1.4v2h-1.4zM1349.8 61.6h1.4v2h-1.4zM1349.8 80.7h1.4v2h-1.4zM1349.8 99.7h1.4v2h-1.4zM1349.5 119.1h2v1.4h-2zM1349.8 137.9h1.4v2h-1.4zM1349.8 156.9h1.4v2h-1.4zM1349.8 176h1.4v2h-1.4zM1349.8 195h1.4v2h-1.4zM1349.5 214.4h2v1.4h-2zM1349.8 233.2h1.4v2h-1.4zM1349.8 252.2h1.4v2h-1.4zM1349.8 271.3h1.4v2h-1.4zM1349.8 290.3h1.4v2h-1.4zM1349.5 309.7h2v1.4h-2zM1349.8 328.5h1.4v2h-1.4zM1349.8 347.5h1.4v2h-1.4zM1349.8 366.6h1.4v2h-1.4zM1349.8 385.6h1.4v2h-1.4zM1349.5 405h2v1.4h-2zM1349.8 423.8h1.4v2h-1.4zM1349.8 442.8h1.4v2h-1.4zM1349.8 461.9h1.4v2h-1.4zM1349.8 480.9h1.4v2h-1.4zM1349.5 500.3h2v1.4h-2zM1349.8 519.1h1.4v2h-1.4zM1349.8 538.1h1.4v2h-1.4zM1349.8 557.2h1.4v2h-1.4zM1349.8 576.2h1.4v2h-1.4zM1349.5 595.6h2v1.4h-2zM1349.8 614.4h1.4v2h-1.4zM1349.8 633.4h1.4v2h-1.4zM1349.8 652.5h1.4v2h-1.4zM1349.8 671.5h1.4v2h-1.4zM1349.5 690.9h2v1.4h-2zM1349.8 709.7h1.4v2h-1.4zM1349.8 728.7h1.4v2h-1.4zM1349.8 747.8h1.4v2h-1.4zM1349.8 766.8h1.4v2h-1.4zM1349.5 786.2h2v1.4h-2zM1349.8 805h1.4v2h-1.4zM1349.8 824h1.4v2h-1.4zM1349.8 843.1h1.4v2h-1.4zM1349.8 862.1h1.4v2h-1.4zM1349.5 881.5h2v1.4h-2zM1349.8 900.3h1.4v2h-1.4zM1349.8 919.3h1.4v2h-1.4zM1349.8 938.4h1.4v2h-1.4zM1349.8 957.4h1.4v2h-1.4zM60.3 119.1h2v1.4h-2zM89.6 119.1h2v1.4h-2zM118.9 119.1h2v1.4h-2zM148.2 119.1h2v1.4h-2zM206.8 119.1h2v1.4h-2zM236.1 119.1h2v1.4h-2zM265.4 119.1h2v1.4h-2zM294.7 119.1h2v1.4h-2zM353.3 119.1h2v1.4h-2zM382.6 119.1h2v1.4h-2zM411.9 119.1h2v1.4h-2zM441.2 119.1h2v1.4h-2zM499.8 119.1h2v1.4h-2zM529.1 119.1h2v1.4h-2zM558.4 119.1h2v1.4h-2zM587.7 119.1h2v1.4h-2zM646.3 119.1h2v1.4h-2zM675.6 119.1h2v1.4h-2zM704.9 119.1h2v1.4h-2zM734.2 119.1h2v1.4h-2zM792.8 119.1h2v1.4h-2zM822.1 119.1h2v1.4h-2zM851.4 119.1h2v1.4h-2zM880.7 119.1h2v1.4h-2zM939.3 119.1h2v1.4h-2zM968.6 119.1h2v1.4h-2zM997.9 119.1h2v1.4h-2zM1027.2 119.1h2v1.4h-2zM1085.8 119.1h2v1.4h-2zM1115.1 119.1h2v1.4h-2zM1144.4 119.1h2v1.4h-2zM1173.7 119.1h2v1.4h-2zM1232.3 119.1h2v1.4h-2zM1261.6 119.1h2v1.4h-2zM1290.9 119.1h2v1.4h-2zM1320.2 119.1h2v1.4h-2zM1378.8 119.1h2v1.4h-2zM1408.1 119.1h2v1.4h-2zM1437.4 119.1h2v1.4h-2zM1466.7 119.1h2v1.4h-2zM60.3 214.4h2v1.4h-2zM89.6 214.4h2v1.4h-2zM118.9 214.4h2v1.4h-2zM148.2 214.4h2v1.4h-2zM206.8 214.4h2v1.4h-2zM236.1 214.4h2v1.4h-2zM265.4 214.4h2v1.4h-2zM294.7 214.4h2v1.4h-2zM353.3 214.4h2v1.4h-2zM382.6 214.4h2v1.4h-2zM411.9 214.4h2v1.4h-2zM441.2 214.4h2v1.4h-2zM499.8 214.4h2v1.4h-2zM529.1 214.4h2v1.4h-2zM558.4 214.4h2v1.4h-2zM587.7 214.4h2v1.4h-2zM646.3 214.4h2v1.4h-2zM675.6 214.4h2v1.4h-2zM704.9 214.4h2v1.4h-2zM734.2 214.4h2v1.4h-2zM792.8 214.4h2v1.4h-2zM822.1 214.4h2v1.4h-2zM851.4 214.4h2v1.4h-2zM880.7 214.4h2v1.4h-2zM939.3 214.4h2v1.4h-2zM968.6 214.4h2v1.4h-2zM997.9 214.4h2v1.4h-2zM1027.2 214.4h2v1.4h-2zM1085.8 214.4h2v1.4h-2zM1115.1 214.4h2v1.4h-2zM1144.4 214.4h2v1.4h-2zM1173.7 214.4h2v1.4h-2zM1232.3 214.4h2v1.4h-2zM1261.6 214.4h2v1.4h-2zM1290.9 214.4h2v1.4h-2zM1320.2 214.4h2v1.4h-2zM1378.8 214.4h2v1.4h-2zM1408.1 214.4h2v1.4h-2zM1437.4 214.4h2v1.4h-2zM1466.7 214.4h2v1.4h-2zM60.3 309.7h2v1.4h-2zM89.6 309.7h2v1.4h-2zM118.9 309.7h2v1.4h-2zM148.2 309.7h2v1.4h-2zM206.8 309.7h2v1.4h-2zM236.1 309.7h2v1.4h-2zM265.4 309.7h2v1.4h-2zM294.7 309.7h2v1.4h-2zM353.3 309.7h2v1.4h-2zM382.6 309.7h2v1.4h-2zM411.9 309.7h2v1.4h-2zM441.2 309.7h2v1.4h-2zM499.8 309.7h2v1.4h-2zM529.1 309.7h2v1.4h-2zM558.4 309.7h2v1.4h-2zM587.7 309.7h2v1.4h-2zM646.3 309.7h2v1.4h-2zM675.6 309.7h2v1.4h-2zM704.9 309.7h2v1.4h-2zM734.2 309.7h2v1.4h-2zM792.8 309.7h2v1.4h-2zM822.1 309.7h2v1.4h-2zM851.4 309.7h2v1.4h-2zM880.7 309.7h2v1.4h-2zM939.3 309.7h2v1.4h-2zM968.6 309.7h2v1.4h-2zM997.9 309.7h2v1.4h-2zM1027.2 309.7h2v1.4h-2zM1085.8 309.7h2v1.4h-2zM1115.1 309.7h2v1.4h-2zM1144.4 309.7h2v1.4h-2zM1173.7 309.7h2v1.4h-2zM1232.3 309.7h2v1.4h-2zM1261.6 309.7h2v1.4h-2zM1290.9 309.7h2v1.4h-2zM1320.2 309.7h2v1.4h-2zM1378.8 309.7h2v1.4h-2zM1408.1 309.7h2v1.4h-2zM1437.4 309.7h2v1.4h-2zM1466.7 309.7h2v1.4h-2zM60.3 405h2v1.4h-2zM89.6 405h2v1.4h-2zM118.9 405h2v1.4h-2zM148.2 405h2v1.4h-2zM206.8 405h2v1.4h-2zM236.1 405h2v1.4h-2zM265.4 405h2v1.4h-2zM294.7 405h2v1.4h-2zM353.3 405h2v1.4h-2zM382.6 405h2v1.4h-2zM411.9 405h2v1.4h-2zM441.2 405h2v1.4h-2zM499.8 405h2v1.4h-2zM529.1 405h2v1.4h-2zM558.4 405h2v1.4h-2zM587.7 405h2v1.4h-2zM646.3 405h2v1.4h-2zM675.6 405h2v1.4h-2zM704.9 405h2v1.4h-2zM734.2 405h2v1.4h-2zM792.8 405h2v1.4h-2zM822.1 405h2v1.4h-2zM851.4 405h2v1.4h-2zM880.7 405h2v1.4h-2zM939.3 405h2v1.4h-2zM968.6 405h2v1.4h-2zM997.9 405h2v1.4h-2zM1027.2 405h2v1.4h-2zM1085.8 405h2v1.4h-2zM1115.1 405h2v1.4h-2zM1144.4 405h2v1.4h-2zM1173.7 405h2v1.4h-2zM1232.3 405h2v1.4h-2zM1261.6 405h2v1.4h-2zM1290.9 405h2v1.4h-2zM1320.2 405h2v1.4h-2zM1378.8 405h2v1.4h-2zM1408.1 405h2v1.4h-2zM1437.4 405h2v1.4h-2zM1466.7 405h2v1.4h-2zM60.3 595.6h2v1.4h-2zM89.6 595.6h2v1.4h-2zM118.9 595.6h2v1.4h-2zM148.2 595.6h2v1.4h-2zM206.8 595.6h2v1.4h-2zM236.1 595.6h2v1.4h-2zM265.4 595.6h2v1.4h-2zM294.7 595.6h2v1.4h-2zM353.3 595.6h2v1.4h-2zM382.6 595.6h2v1.4h-2zM411.9 595.6h2v1.4h-2zM441.2 595.6h2v1.4h-2zM499.8 595.6h2v1.4h-2zM529.1 595.6h2v1.4h-2zM558.4 595.6h2v1.4h-2zM587.7 595.6h2v1.4h-2zM646.3 595.6h2v1.4h-2zM675.6 595.6h2v1.4h-2zM704.9 595.6h2v1.4h-2zM734.2 595.6h2v1.4h-2zM792.8 595.6h2v1.4h-2zM822.1 595.6h2v1.4h-2zM851.4 595.6h2v1.4h-2zM880.7 595.6h2v1.4h-2zM939.3 595.6h2v1.4h-2zM968.6 595.6h2v1.4h-2zM997.9 595.6h2v1.4h-2zM1027.2 595.6h2v1.4h-2zM1085.8 595.6h2v1.4h-2zM1115.1 595.6h2v1.4h-2zM1144.4 595.6h2v1.4h-2zM1173.7 595.6h2v1.4h-2zM1232.3 595.6h2v1.4h-2zM1261.6 595.6h2v1.4h-2zM1290.9 595.6h2v1.4h-2zM1320.2 595.6h2v1.4h-2zM1378.8 595.6h2v1.4h-2zM1408.1 595.6h2v1.4h-2zM1437.4 595.6h2v1.4h-2zM1466.7 595.6h2v1.4h-2zM60.3 690.9h2v1.4h-2zM89.6 690.9h2v1.4h-2zM118.9 690.9h2v1.4h-2zM148.2 690.9h2v1.4h-2zM206.8 690.9h2v1.4h-2zM236.1 690.9h2v1.4h-2zM265.4 690.9h2v1.4h-2zM294.7 690.9h2v1.4h-2zM353.3 690.9h2v1.4h-2zM382.6 690.9h2v1.4h-2zM411.9 690.9h2v1.4h-2zM441.2 690.9h2v1.4h-2zM499.8 690.9h2v1.4h-2zM529.1 690.9h2v1.4h-2zM558.4 690.9h2v1.4h-2zM587.7 690.9h2v1.4h-2zM646.3 690.9h2v1.4h-2zM675.6 690.9h2v1.4h-2zM704.9 690.9h2v1.4h-2zM734.2 690.9h2v1.4h-2zM792.8 690.9h2v1.4h-2zM822.1 690.9h2v1.4h-2zM851.4 690.9h2v1.4h-2zM880.7 690.9h2v1.4h-2zM939.3 690.9h2v1.4h-2zM968.6 690.9h2v1.4h-2zM997.9 690.9h2v1.4h-2zM1027.2 690.9h2v1.4h-2zM1085.8 690.9h2v1.4h-2zM1115.1 690.9h2v1.4h-2zM1144.4 690.9h2v1.4h-2zM1173.7 690.9h2v1.4h-2zM1232.3 690.9h2v1.4h-2zM1261.6 690.9h2v1.4h-2zM1290.9 690.9h2v1.4h-2zM1320.2 690.9h2v1.4h-2zM1378.8 690.9h2v1.4h-2zM1408.1 690.9h2v1.4h-2zM1437.4 690.9h2v1.4h-2zM1466.7 690.9h2v1.4h-2zM60.3 786.2h2v1.4h-2zM89.6 786.2h2v1.4h-2zM118.9 786.2h2v1.4h-2zM148.2 786.2h2v1.4h-2zM206.8 786.2h2v1.4h-2zM236.1 786.2h2v1.4h-2zM265.4 786.2h2v1.4h-2zM294.7 786.2h2v1.4h-2zM353.3 786.2h2v1.4h-2zM382.6 786.2h2v1.4h-2zM411.9 786.2h2v1.4h-2zM441.2 786.2h2v1.4h-2zM499.8 786.2h2v1.4h-2zM529.1 786.2h2v1.4h-2zM558.4 786.2h2v1.4h-2zM587.7 786.2h2v1.4h-2zM646.3 786.2h2v1.4h-2zM675.6 786.2h2v1.4h-2zM704.9 786.2h2v1.4h-2zM734.2 786.2h2v1.4h-2zM792.8 786.2h2v1.4h-2zM822.1 786.2h2v1.4h-2zM851.4 786.2h2v1.4h-2zM880.7 786.2h2v1.4h-2zM939.3 786.2h2v1.4h-2zM968.6 786.2h2v1.4h-2zM997.9 786.2h2v1.4h-2zM1027.2 786.2h2v1.4h-2zM1085.8 786.2h2v1.4h-2zM1115.1 786.2h2v1.4h-2zM1144.4 786.2h2v1.4h-2zM1173.7 786.2h2v1.4h-2zM1232.3 786.2h2v1.4h-2zM1261.6 786.2h2v1.4h-2zM1290.9 786.2h2v1.4h-2zM1320.2 786.2h2v1.4h-2zM1378.8 786.2h2v1.4h-2zM1408.1 786.2h2v1.4h-2zM1437.4 786.2h2v1.4h-2zM1466.7 786.2h2v1.4h-2zM60.3 881.5h2v1.4h-2zM89.6 881.5h2v1.4h-2zM118.9 881.5h2v1.4h-2zM148.2 881.5h2v1.4h-2zM206.8 881.5h2v1.4h-2zM236.1 881.5h2v1.4h-2zM265.4 881.5h2v1.4h-2zM294.7 881.5h2v1.4h-2zM353.3 881.5h2v1.4h-2zM382.6 881.5h2v1.4h-2zM411.9 881.5h2v1.4h-2zM441.2 881.5h2v1.4h-2zM499.8 881.5h2v1.4h-2zM529.1 881.5h2v1.4h-2zM558.4 881.5h2v1.4h-2zM587.7 881.5h2v1.4h-2zM646.3 881.5h2v1.4h-2zM675.6 881.5h2v1.4h-2zM704.9 881.5h2v1.4h-2zM734.2 881.5h2v1.4h-2zM792.8 881.5h2v1.4h-2zM822.1 881.5h2v1.4h-2zM851.4 881.5h2v1.4h-2zM880.7 881.5h2v1.4h-2zM939.3 881.5h2v1.4h-2zM968.6 881.5h2v1.4h-2zM997.9 881.5h2v1.4h-2zM1027.2 881.5h2v1.4h-2zM1085.8 881.5h2v1.4h-2zM1115.1 881.5h2v1.4h-2zM1144.4 881.5h2v1.4h-2zM1173.7 881.5h2v1.4h-2zM1232.3 881.5h2v1.4h-2zM1261.6 881.5h2v1.4h-2zM1290.9 881.5h2v1.4h-2zM1320.2 881.5h2v1.4h-2zM1378.8 881.5h2v1.4h-2zM1408.1 881.5h2v1.4h-2zM1437.4 881.5h2v1.4h-2zM1466.7 881.5h2v1.4h-2zM60.4 24.2h1.8v1.5h-1.8zM60.6 975.5h1.4v1.4h-1.4zM60.4 27.2h1.8v1.5h-1.8zM60.6 972.5h1.4v1.4h-1.4zM89.7 24.2h1.8v1.5h-1.8zM89.9 975.5h1.4v1.4h-1.4zM89.7 27.2h1.8v1.5h-1.8zM89.9 972.5h1.4v1.4h-1.4zM119 24.2h1.8v1.5h-1.8zM119.2 975.5h1.4v1.4h-1.4zM119 27.2h1.8v1.5h-1.8zM119.2 972.5h1.4v1.4h-1.4zM148.3 24.2h1.8v1.5h-1.8zM148.5 975.5h1.4v1.4h-1.4zM148.3 27.2h1.8v1.5h-1.8zM148.5 972.5h1.4v1.4h-1.4zM177.6 24.2h1.8v1.5h-1.8zM177.8 975.5h1.4v1.4h-1.4zM177.6 27.2h1.8v1.5h-1.8zM177.8 972.5h1.4v1.4h-1.4zM177.6 30.2h1.8v1.5h-1.8zM177.8 969.5h1.4v1.4h-1.4zM206.9 24.2h1.8v1.5h-1.8zM207.1 975.5h1.4v1.4h-1.4zM206.9 27.2h1.8v1.5h-1.8zM207.1 972.5h1.4v1.4h-1.4zM236.2 24.2h1.8v1.5h-1.8zM236.4 975.5h1.4v1.4h-1.4zM236.2 27.2h1.8v1.5h-1.8zM236.4 972.5h1.4v1.4h-1.4zM265.5 24.2h1.8v1.5h-1.8zM265.7 975.5h1.4v1.4h-1.4zM265.5 27.2h1.8v1.5h-1.8zM265.7 972.5h1.4v1.4h-1.4zM294.8 24.2h1.8v1.5h-1.8zM295 975.5h1.4v1.4h-1.4zM294.8 27.2h1.8v1.5h-1.8zM295 972.5h1.4v1.4h-1.4zM324.1 24.2h1.8v1.5h-1.8zM324.3 975.5h1.4v1.4h-1.4zM324.1 27.2h1.8v1.5h-1.8zM324.3 972.5h1.4v1.4h-1.4zM324.1 30.2h1.8v1.5h-1.8zM324.3 969.5h1.4v1.4h-1.4zM353.4 24.2h1.8v1.5h-1.8zM353.6 975.5h1.4v1.4h-1.4zM353.4 27.2h1.8v1.5h-1.8zM353.6 972.5h1.4v1.4h-1.4zM382.7 24.2h1.8v1.5h-1.8zM382.9 975.5h1.4v1.4h-1.4zM382.7 27.2h1.8v1.5h-1.8zM382.9 972.5h1.4v1.4h-1.4zM412 24.2h1.8v1.5h-1.8zM412.2 975.5h1.4v1.4h-1.4zM412 27.2h1.8v1.5h-1.8zM412.2 972.5h1.4v1.4h-1.4zM441.3 24.2h1.8v1.5h-1.8zM441.5 975.5h1.4v1.4h-1.4zM441.3 27.2h1.8v1.5h-1.8zM441.5 972.5h1.4v1.4h-1.4zM470.6 24.2h1.8v1.5h-1.8zM470.8 975.5h1.4v1.4h-1.4zM470.6 27.2h1.8v1.5h-1.8zM470.8 972.5h1.4v1.4h-1.4zM470.6 30.2h1.8v1.5h-1.8zM470.8 969.5h1.4v1.4h-1.4zM499.9 24.2h1.8v1.5h-1.8zM500.1 975.5h1.4v1.4h-1.4zM499.9 27.2h1.8v1.5h-1.8zM500.1 972.5h1.4v1.4h-1.4zM529.2 24.2h1.8v1.5h-1.8zM529.4 975.5h1.4v1.4h-1.4zM529.2 27.2h1.8v1.5h-1.8zM529.4 972.5h1.4v1.4h-1.4zM558.5 24.2h1.8v1.5h-1.8zM558.7 975.5h1.4v1.4h-1.4zM558.5 27.2h1.8v1.5h-1.8zM558.7 972.5h1.4v1.4h-1.4zM587.8 24.2h1.8v1.5h-1.8zM588 975.5h1.4v1.4h-1.4zM587.8 27.2h1.8v1.5h-1.8zM588 972.5h1.4v1.4h-1.4zM617.1 24.2h1.8v1.5h-1.8zM617.3 975.5h1.4v1.4h-1.4zM617.1 27.2h1.8v1.5h-1.8zM617.3 972.5h1.4v1.4h-1.4zM617.1 30.2h1.8v1.5h-1.8zM617.3 969.5h1.4v1.4h-1.4zM646.4 24.2h1.8v1.5h-1.8zM646.6 975.5h1.4v1.4h-1.4zM646.4 27.2h1.8v1.5h-1.8zM646.6 972.5h1.4v1.4h-1.4zM675.7 24.2h1.8v1.5h-1.8zM675.9 975.5h1.4v1.4h-1.4zM675.7 27.2h1.8v1.5h-1.8zM675.9 972.5h1.4v1.4h-1.4zM705 24.2h1.8v1.5h-1.8zM705.2 975.5h1.4v1.4h-1.4zM705 27.2h1.8v1.5h-1.8zM705.2 972.5h1.4v1.4h-1.4zM734.3 24.2h1.8v1.5h-1.8zM734.5 975.5h1.4v1.4h-1.4zM734.3 27.2h1.8v1.5h-1.8zM734.5 972.5h1.4v1.4h-1.4zM763.6 24.2h1.8v1.5h-1.8zM763.8 975.5h1.4v1.4h-1.4zM763.6 27.2h1.8v1.5h-1.8zM763.8 972.5h1.4v1.4h-1.4zM763.6 30.2h1.8v1.5h-1.8zM763.8 969.5h1.4v1.4h-1.4zM792.9 24.2h1.8v1.5h-1.8zM793.1 975.5h1.4v1.4h-1.4zM792.9 27.2h1.8v1.5h-1.8zM793.1 972.5h1.4v1.4h-1.4zM822.2 24.2h1.8v1.5h-1.8zM822.4 975.5h1.4v1.4h-1.4zM822.2 27.2h1.8v1.5h-1.8zM822.4 972.5h1.4v1.4h-1.4zM851.5 24.2h1.8v1.5h-1.8zM851.7 975.5h1.4v1.4h-1.4zM851.5 27.2h1.8v1.5h-1.8zM851.7 972.5h1.4v1.4h-1.4zM880.8 24.2h1.8v1.5h-1.8zM881 975.5h1.4v1.4h-1.4zM880.8 27.2h1.8v1.5h-1.8zM881 972.5h1.4v1.4h-1.4zM910.1 24.2h1.8v1.5h-1.8zM910.3 975.5h1.4v1.4h-1.4zM910.1 27.2h1.8v1.5h-1.8zM910.3 972.5h1.4v1.4h-1.4zM910.1 30.2h1.8v1.5h-1.8zM910.3 969.5h1.4v1.4h-1.4zM939.4 24.2h1.8v1.5h-1.8zM939.6 975.5h1.4v1.4h-1.4zM939.4 27.2h1.8v1.5h-1.8zM939.6 972.5h1.4v1.4h-1.4zM968.7 24.2h1.8v1.5h-1.8zM968.9 975.5h1.4v1.4h-1.4zM968.7 27.2h1.8v1.5h-1.8zM968.9 972.5h1.4v1.4h-1.4zM998 24.2h1.8v1.5h-1.8zM998.2 975.5h1.4v1.4h-1.4zM998 27.2h1.8v1.5h-1.8zM998.2 972.5h1.4v1.4h-1.4zM1027.3 24.2h1.8v1.5h-1.8zM1027.5 975.5h1.4v1.4h-1.4zM1027.3 27.2h1.8v1.5h-1.8zM1027.5 972.5h1.4v1.4h-1.4zM1056.6 24.2h1.8v1.5h-1.8zM1056.8 975.5h1.4v1.4h-1.4zM1056.6 27.2h1.8v1.5h-1.8zM1056.8 972.5h1.4v1.4h-1.4zM1056.6 30.2h1.8v1.5h-1.8zM1056.8 969.5h1.4v1.4h-1.4zM1085.9 24.2h1.8v1.5h-1.8zM1086.1 975.5h1.4v1.4h-1.4zM1085.9 27.2h1.8v1.5h-1.8zM1086.1 972.5h1.4v1.4h-1.4zM1115.2 24.2h1.8v1.5h-1.8zM1115.4 975.5h1.4v1.4h-1.4zM1115.2 27.2h1.8v1.5h-1.8zM1115.4 972.5h1.4v1.4h-1.4zM1144.5 24.2h1.8v1.5h-1.8zM1144.7 975.5h1.4v1.4h-1.4zM1144.5 27.2h1.8v1.5h-1.8zM1144.7 972.5h1.4v1.4h-1.4zM1173.8 24.2h1.8v1.5h-1.8zM1174 975.5h1.4v1.4h-1.4zM1173.8 27.2h1.8v1.5h-1.8zM1174 972.5h1.4v1.4h-1.4zM1203.1 24.2h1.8v1.5h-1.8zM1203.3 975.5h1.4v1.4h-1.4zM1203.1 27.2h1.8v1.5h-1.8zM1203.3 972.5h1.4v1.4h-1.4zM1203.1 30.2h1.8v1.5h-1.8zM1203.3 969.5h1.4v1.4h-1.4zM1232.4 24.2h1.8v1.5h-1.8zM1232.6 975.5h1.4v1.4h-1.4zM1232.4 27.2h1.8v1.5h-1.8zM1232.6 972.5h1.4v1.4h-1.4zM1261.7 24.2h1.8v1.5h-1.8zM1261.9 975.5h1.4v1.4h-1.4zM1261.7 27.2h1.8v1.5h-1.8zM1261.9 972.5h1.4v1.4h-1.4zM1291 24.2h1.8v1.5h-1.8zM1291.2 975.5h1.4v1.4h-1.4zM1291 27.2h1.8v1.5h-1.8zM1291.2 972.5h1.4v1.4h-1.4zM1320.3 24.2h1.8v1.5h-1.8zM1320.5 975.5h1.4v1.4h-1.4zM1320.3 27.2h1.8v1.5h-1.8zM1320.5 972.5h1.4v1.4h-1.4zM1349.6 24.2h1.8v1.5h-1.8zM1349.8 975.5h1.4v1.4h-1.4zM1349.6 27.2h1.8v1.5h-1.8zM1349.8 972.5h1.4v1.4h-1.4zM1349.6 30.2h1.8v1.5h-1.8zM1349.8 969.5h1.4v1.4h-1.4zM1378.9 24.2h1.8v1.5h-1.8zM1379.1 975.5h1.4v1.4h-1.4zM1378.9 27.2h1.8v1.5h-1.8zM1379.1 972.5h1.4v1.4h-1.4zM1408.2 24.2h1.8v1.5h-1.8zM1408.4 975.5h1.4v1.4h-1.4zM1408.2 27.2h1.8v1.5h-1.8zM1408.4 972.5h1.4v1.4h-1.4zM1437.5 24.2h1.8v1.5h-1.8zM1437.7 975.5h1.4v1.4h-1.4zM1437.5 27.2h1.8v1.5h-1.8zM1437.7 972.5h1.4v1.4h-1.4zM1466.8 24.2h1.8v1.5h-1.8zM1467 975.5h1.4v1.4h-1.4zM1466.8 27.2h1.8v1.5h-1.8zM1467 972.5h1.4v1.4h-1.4zM31.5 42.9h1.5v1.4h-1.5zM1494 42.9h1.5v1.4h-1.5zM34.5 42.9h1.5v1.4h-1.5zM1491 42.9h1.5v1.4h-1.5zM31.5 61.9h1.5v1.4h-1.5zM1494 61.9h1.5v1.4h-1.5zM34.5 61.9h1.5v1.4h-1.5zM1491 61.9h1.5v1.4h-1.5zM31.5 81h1.5v1.4h-1.5zM1494 81h1.5v1.4h-1.5zM34.5 81h1.5v1.4h-1.5zM1491 81h1.5v1.4h-1.5zM31.5 100h1.5v1.4h-1.5zM1494 100h1.5v1.4h-1.5zM34.5 100h1.5v1.4h-1.5zM1491 100h1.5v1.4h-1.5zM31.5 119.1h1.5v1.4h-1.5zM1494 119.1h1.5v1.4h-1.5zM34.5 119.1h1.5v1.4h-1.5zM1491 119.1h1.5v1.4h-1.5zM37.5 119.1h1.5v1.4h-1.5zM1488 119.1h1.5v1.4h-1.5zM31.5 138.2h1.5v1.4h-1.5zM1494 138.2h1.5v1.4h-1.5zM34.5 138.2h1.5v1.4h-1.5zM1491 138.2h1.5v1.4h-1.5zM31.5 157.2h1.5v1.4h-1.5zM1494 157.2h1.5v1.4h-1.5zM34.5 157.2h1.5v1.4h-1.5zM1491 157.2h1.5v1.4h-1.5zM31.5 176.3h1.5v1.4h-1.5zM1494 176.3h1.5v1.4h-1.5zM34.5 176.3h1.5v1.4h-1.5zM1491 176.3h1.5v1.4h-1.5zM31.5 195.3h1.5v1.4h-1.5zM1494 195.3h1.5v1.4h-1.5zM34.5 195.3h1.5v1.4h-1.5zM1491 195.3h1.5v1.4h-1.5zM31.5 214.4h1.5v1.4h-1.5zM1494 214.4h1.5v1.4h-1.5zM34.5 214.4h1.5v1.4h-1.5zM1491 214.4h1.5v1.4h-1.5zM37.5 214.4h1.5v1.4h-1.5zM1488 214.4h1.5v1.4h-1.5zM31.5 233.5h1.5v1.4h-1.5zM1494 233.5h1.5v1.4h-1.5zM34.5 233.5h1.5v1.4h-1.5zM1491 233.5h1.5v1.4h-1.5zM31.5 252.5h1.5v1.4h-1.5zM1494 252.5h1.5v1.4h-1.5zM34.5 252.5h1.5v1.4h-1.5zM1491 252.5h1.5v1.4h-1.5zM31.5 271.6h1.5v1.4h-1.5zM1494 271.6h1.5v1.4h-1.5zM34.5 271.6h1.5v1.4h-1.5zM1491 271.6h1.5v1.4h-1.5zM31.5 290.6h1.5v1.4h-1.5zM1494 290.6h1.5v1.4h-1.5zM34.5 290.6h1.5v1.4h-1.5zM1491 290.6h1.5v1.4h-1.5zM31.5 309.7h1.5v1.4h-1.5zM1494 309.7h1.5v1.4h-1.5zM34.5 309.7h1.5v1.4h-1.5zM1491 309.7h1.5v1.4h-1.5zM37.5 309.7h1.5v1.4h-1.5zM1488 309.7h1.5v1.4h-1.5zM31.5 328.8h1.5v1.4h-1.5zM1494 328.8h1.5v1.4h-1.5zM34.5 328.8h1.5v1.4h-1.5zM1491 328.8h1.5v1.4h-1.5zM31.5 347.8h1.5v1.4h-1.5zM1494 347.8h1.5v1.4h-1.5zM34.5 347.8h1.5v1.4h-1.5zM1491 347.8h1.5v1.4h-1.5zM31.5 366.9h1.5v1.4h-1.5zM1494 366.9h1.5v1.4h-1.5zM34.5 366.9h1.5v1.4h-1.5zM1491 366.9h1.5v1.4h-1.5zM31.5 385.9h1.5v1.4h-1.5zM1494 385.9h1.5v1.4h-1.5zM34.5 385.9h1.5v1.4h-1.5zM1491 385.9h1.5v1.4h-1.5zM31.5 405h1.5v1.4h-1.5zM1494 405h1.5v1.4h-1.5zM34.5 405h1.5v1.4h-1.5zM1491 405h1.5v1.4h-1.5zM37.5 405h1.5v1.4h-1.5zM1488 405h1.5v1.4h-1.5zM31.5 424.1h1.5v1.4h-1.5zM1494 424.1h1.5v1.4h-1.5zM34.5 424.1h1.5v1.4h-1.5zM1491 424.1h1.5v1.4h-1.5zM31.5 443.1h1.5v1.4h-1.5zM1494 443.1h1.5v1.4h-1.5zM34.5 443.1h1.5v1.4h-1.5zM1491 443.1h1.5v1.4h-1.5zM31.5 462.2h1.5v1.4h-1.5zM1494 462.2h1.5v1.4h-1.5zM34.5 462.2h1.5v1.4h-1.5zM1491 462.2h1.5v1.4h-1.5zM31.5 481.2h1.5v1.4h-1.5zM1494 481.2h1.5v1.4h-1.5zM34.5 481.2h1.5v1.4h-1.5zM1491 481.2h1.5v1.4h-1.5zM31.5 500.3h1.5v1.4h-1.5zM1494 500.3h1.5v1.4h-1.5zM34.5 500.3h1.5v1.4h-1.5zM1491 500.3h1.5v1.4h-1.5zM37.5 500.3h1.5v1.4h-1.5zM1488 500.3h1.5v1.4h-1.5zM31.5 519.4h1.5v1.4h-1.5zM1494 519.4h1.5v1.4h-1.5zM34.5 519.4h1.5v1.4h-1.5zM1491 519.4h1.5v1.4h-1.5zM31.5 538.4h1.5v1.4h-1.5zM1494 538.4h1.5v1.4h-1.5zM34.5 538.4h1.5v1.4h-1.5zM1491 538.4h1.5v1.4h-1.5zM31.5 557.5h1.5v1.4h-1.5zM1494 557.5h1.5v1.4h-1.5zM34.5 557.5h1.5v1.4h-1.5zM1491 557.5h1.5v1.4h-1.5zM31.5 576.5h1.5v1.4h-1.5zM1494 576.5h1.5v1.4h-1.5zM34.5 576.5h1.5v1.4h-1.5zM1491 576.5h1.5v1.4h-1.5zM31.5 595.6h1.5v1.4h-1.5zM1494 595.6h1.5v1.4h-1.5zM34.5 595.6h1.5v1.4h-1.5zM1491 595.6h1.5v1.4h-1.5zM37.5 595.6h1.5v1.4h-1.5zM1488 595.6h1.5v1.4h-1.5zM31.5 614.7h1.5v1.4h-1.5zM1494 614.7h1.5v1.4h-1.5zM34.5 614.7h1.5v1.4h-1.5zM1491 614.7h1.5v1.4h-1.5zM31.5 633.7h1.5v1.4h-1.5zM1494 633.7h1.5v1.4h-1.5zM34.5 633.7h1.5v1.4h-1.5zM1491 633.7h1.5v1.4h-1.5zM31.5 652.8h1.5v1.4h-1.5zM1494 652.8h1.5v1.4h-1.5zM34.5 652.8h1.5v1.4h-1.5zM1491 652.8h1.5v1.4h-1.5zM31.5 671.8h1.5v1.4h-1.5zM1494 671.8h1.5v1.4h-1.5zM34.5 671.8h1.5v1.4h-1.5zM1491 671.8h1.5v1.4h-1.5zM31.5 690.9h1.5v1.4h-1.5zM1494 690.9h1.5v1.4h-1.5zM34.5 690.9h1.5v1.4h-1.5zM1491 690.9h1.5v1.4h-1.5zM37.5 690.9h1.5v1.4h-1.5zM1488 690.9h1.5v1.4h-1.5zM31.5 710h1.5v1.4h-1.5zM1494 710h1.5v1.4h-1.5zM34.5 710h1.5v1.4h-1.5zM1491 710h1.5v1.4h-1.5zM31.5 729h1.5v1.4h-1.5zM1494 729h1.5v1.4h-1.5zM34.5 729h1.5v1.4h-1.5zM1491 729h1.5v1.4h-1.5zM31.5 748.1h1.5v1.4h-1.5zM1494 748.1h1.5v1.4h-1.5zM34.5 748.1h1.5v1.4h-1.5zM1491 748.1h1.5v1.4h-1.5zM31.5 767.1h1.5v1.4h-1.5zM1494 767.1h1.5v1.4h-1.5zM34.5 767.1h1.5v1.4h-1.5zM1491 767.1h1.5v1.4h-1.5zM31.5 786.2h1.5v1.4h-1.5zM1494 786.2h1.5v1.4h-1.5zM34.5 786.2h1.5v1.4h-1.5zM1491 786.2h1.5v1.4h-1.5zM37.5 786.2h1.5v1.4h-1.5zM1488 786.2h1.5v1.4h-1.5zM31.5 805.3h1.5v1.4h-1.5zM1494 805.3h1.5v1.4h-1.5zM34.5 805.3h1.5v1.4h-1.5zM1491 805.3h1.5v1.4h-1.5zM31.5 824.3h1.5v1.4h-1.5zM1494 824.3h1.5v1.4h-1.5zM34.5 824.3h1.5v1.4h-1.5zM1491 824.3h1.5v1.4h-1.5zM31.5 843.4h1.5v1.4h-1.5zM1494 843.4h1.5v1.4h-1.5zM34.5 843.4h1.5v1.4h-1.5zM1491 843.4h1.5v1.4h-1.5zM31.5 862.4h1.5v1.4h-1.5zM1494 862.4h1.5v1.4h-1.5zM34.5 862.4h1.5v1.4h-1.5zM1491 862.4h1.5v1.4h-1.5zM31.5 881.5h1.5v1.4h-1.5zM1494 881.5h1.5v1.4h-1.5zM34.5 881.5h1.5v1.4h-1.5zM1491 881.5h1.5v1.4h-1.5zM37.5 881.5h1.5v1.4h-1.5zM1488 881.5h1.5v1.4h-1.5zM31.5 900.6h1.5v1.4h-1.5zM1494 900.6h1.5v1.4h-1.5zM34.5 900.6h1.5v1.4h-1.5zM1491 900.6h1.5v1.4h-1.5zM31.5 919.6h1.5v1.4h-1.5zM1494 919.6h1.5v1.4h-1.5zM34.5 919.6h1.5v1.4h-1.5zM1491 919.6h1.5v1.4h-1.5zM31.5 938.7h1.5v1.4h-1.5zM1494 938.7h1.5v1.4h-1.5zM34.5 938.7h1.5v1.4h-1.5zM1491 938.7h1.5v1.4h-1.5zM31.5 957.7h1.5v1.4h-1.5zM1494 957.7h1.5v1.4h-1.5zM34.5 957.7h1.5v1.4h-1.5zM1491 957.7h1.5v1.4h-1.5zM763.8 25h1.4v1.4h-1.4zM763.8 28h1.4v1.4h-1.4zM763.8 31h1.4v1.4h-1.4zM763.8 34h1.4v1.4h-1.4zM763.8 37h1.4v1.4h-1.4zM763.8 40h1.4v1.4h-1.4zM763.8 43h1.4v1.4h-1.4zM763.8 46h1.4v1.4h-1.4zM763.8 49h1.4v1.4h-1.4zM763.8 52h1.4v1.4h-1.4zM763.8 55h1.4v1.4h-1.4zM763.8 58h1.4v1.4h-1.4zM763.8 61h1.4v1.4h-1.4zM763.8 64h1.4v1.4h-1.4zM763.8 67h1.4v1.4h-1.4zM763.8 70h1.4v1.4h-1.4zM763.8 73h1.4v1.4h-1.4zM763.8 76h1.4v1.4h-1.4zM763.8 79h1.4v1.4h-1.4zM763.8 82h1.4v1.4h-1.4zM763.8 85h1.4v1.4h-1.4zM763.8 88h1.4v1.4h-1.4zM763.8 91h1.4v1.4h-1.4zM763.8 94h1.4v1.4h-1.4zM763.8 97h1.4v1.4h-1.4zM763.8 100h1.4v1.4h-1.4zM763.8 103h1.4v1.4h-1.4zM763.8 106h1.4v1.4h-1.4zM763.8 109h1.4v1.4h-1.4zM763.8 112h1.4v1.4h-1.4zM763.8 115h1.4v1.4h-1.4zM763.8 118h1.4v1.4h-1.4zM763.8 121h1.4v1.4h-1.4zM763.8 124h1.4v1.4h-1.4zM763.8 127h1.4v1.4h-1.4zM763.8 130h1.4v1.4h-1.4zM763.8 133h1.4v1.4h-1.4zM763.8 136h1.4v1.4h-1.4zM763.8 139h1.4v1.4h-1.4zM763.8 142h1.4v1.4h-1.4zM763.8 145h1.4v1.4h-1.4zM763.8 148h1.4v1.4h-1.4zM763.8 151h1.4v1.4h-1.4zM763.8 154h1.4v1.4h-1.4zM763.8 157h1.4v1.4h-1.4zM763.8 160h1.4v1.4h-1.4zM763.8 163h1.4v1.4h-1.4zM763.8 166h1.4v1.4h-1.4zM763.8 169h1.4v1.4h-1.4zM763.8 172h1.4v1.4h-1.4zM763.8 175h1.4v1.4h-1.4zM763.8 178h1.4v1.4h-1.4zM763.8 181h1.4v1.4h-1.4zM763.8 184h1.4v1.4h-1.4zM763.8 187h1.4v1.4h-1.4zM763.8 190h1.4v1.4h-1.4zM763.8 193h1.4v1.4h-1.4zM763.8 196h1.4v1.4h-1.4zM763.8 199h1.4v1.4h-1.4zM763.8 202h1.4v1.4h-1.4zM763.8 205h1.4v1.4h-1.4zM763.8 208h1.4v1.4h-1.4zM763.8 211h1.4v1.4h-1.4zM763.8 214h1.4v1.4h-1.4zM763.8 217h1.4v1.4h-1.4zM763.8 220h1.4v1.4h-1.4zM763.8 223h1.4v1.4h-1.4zM763.8 226h1.4v1.4h-1.4zM763.8 229h1.4v1.4h-1.4zM763.8 232h1.4v1.4h-1.4zM763.8 235h1.4v1.4h-1.4zM763.8 238h1.4v1.4h-1.4zM763.8 241h1.4v1.4h-1.4zM763.8 244h1.4v1.4h-1.4zM763.8 247h1.4v1.4h-1.4zM763.8 250h1.4v1.4h-1.4zM763.8 253h1.4v1.4h-1.4zM763.8 256h1.4v1.4h-1.4zM763.8 259h1.4v1.4h-1.4zM763.8 262h1.4v1.4h-1.4zM763.8 265h1.4v1.4h-1.4zM763.8 268h1.4v1.4h-1.4zM763.8 271h1.4v1.4h-1.4zM763.8 274h1.4v1.4h-1.4zM763.8 277h1.4v1.4h-1.4zM763.8 280h1.4v1.4h-1.4zM763.8 283h1.4v1.4h-1.4zM763.8 286h1.4v1.4h-1.4zM763.8 289h1.4v1.4h-1.4zM763.8 292h1.4v1.4h-1.4zM763.8 295h1.4v1.4h-1.4zM763.8 298h1.4v1.4h-1.4zM763.8 301h1.4v1.4h-1.4zM763.8 304h1.4v1.4h-1.4zM763.8 307h1.4v1.4h-1.4zM763.8 310h1.4v1.4h-1.4zM763.8 313h1.4v1.4h-1.4zM763.8 316h1.4v1.4h-1.4zM763.8 319h1.4v1.4h-1.4zM763.8 322h1.4v1.4h-1.4zM763.8 325h1.4v1.4h-1.4zM763.8 328h1.4v1.4h-1.4zM763.8 331h1.4v1.4h-1.4zM763.8 334h1.4v1.4h-1.4zM763.8 337h1.4v1.4h-1.4zM763.8 340h1.4v1.4h-1.4zM763.8 343h1.4v1.4h-1.4zM763.8 346h1.4v1.4h-1.4zM763.8 349h1.4v1.4h-1.4zM763.8 352h1.4v1.4h-1.4zM763.8 355h1.4v1.4h-1.4zM763.8 358h1.4v1.4h-1.4zM763.8 361h1.4v1.4h-1.4zM763.8 364h1.4v1.4h-1.4zM763.8 367h1.4v1.4h-1.4zM763.8 370h1.4v1.4h-1.4zM763.8 373h1.4v1.4h-1.4zM763.8 376h1.4v1.4h-1.4zM763.8 379h1.4v1.4h-1.4zM763.8 382h1.4v1.4h-1.4zM763.8 385h1.4v1.4h-1.4zM763.8 388h1.4v1.4h-1.4zM763.8 391h1.4v1.4h-1.4zM763.8 394h1.4v1.4h-1.4zM763.8 397h1.4v1.4h-1.4zM763.8 400h1.4v1.4h-1.4zM763.8 403h1.4v1.4h-1.4zM763.8 406h1.4v1.4h-1.4zM763.8 409h1.4v1.4h-1.4zM763.8 412h1.4v1.4h-1.4zM763.8 415h1.4v1.4h-1.4zM763.8 418h1.4v1.4h-1.4zM763.8 421h1.4v1.4h-1.4zM763.8 424h1.4v1.4h-1.4zM763.8 427h1.4v1.4h-1.4zM763.8 430h1.4v1.4h-1.4zM763.8 433h1.4v1.4h-1.4zM763.8 436h1.4v1.4h-1.4zM763.8 439h1.4v1.4h-1.4zM763.8 442h1.4v1.4h-1.4zM763.8 445h1.4v1.4h-1.4zM763.8 448h1.4v1.4h-1.4zM763.8 451h1.4v1.4h-1.4zM763.8 454h1.4v1.4h-1.4zM763.8 457h1.4v1.4h-1.4zM763.8 460h1.4v1.4h-1.4zM763.8 463h1.4v1.4h-1.4zM763.8 466h1.4v1.4h-1.4zM763.8 469h1.4v1.4h-1.4zM763.8 472h1.4v1.4h-1.4zM763.8 475h1.4v1.4h-1.4zM763.8 478h1.4v1.4h-1.4zM763.8 481h1.4v1.4h-1.4zM763.8 484h1.4v1.4h-1.4zM763.8 487h1.4v1.4h-1.4zM763.8 490h1.4v1.4h-1.4zM763.8 493h1.4v1.4h-1.4zM763.8 496h1.4v1.4h-1.4zM763.8 499h1.4v1.4h-1.4zM763.8 502h1.4v1.4h-1.4zM763.8 505h1.4v1.4h-1.4zM763.8 508h1.4v1.4h-1.4zM763.8 511h1.4v1.4h-1.4zM763.8 514h1.4v1.4h-1.4zM763.8 517h1.4v1.4h-1.4zM763.8 520h1.4v1.4h-1.4zM763.8 523h1.4v1.4h-1.4zM763.8 526h1.4v1.4h-1.4zM763.8 529h1.4v1.4h-1.4zM763.8 532h1.4v1.4h-1.4zM763.8 535h1.4v1.4h-1.4zM763.8 538h1.4v1.4h-1.4zM763.8 541h1.4v1.4h-1.4zM763.8 544h1.4v1.4h-1.4zM763.8 547h1.4v1.4h-1.4zM763.8 550h1.4v1.4h-1.4zM763.8 553h1.4v1.4h-1.4zM763.8 556h1.4v1.4h-1.4zM763.8 559h1.4v1.4h-1.4zM763.8 562h1.4v1.4h-1.4zM763.8 565h1.4v1.4h-1.4zM763.8 568h1.4v1.4h-1.4zM763.8 571h1.4v1.4h-1.4zM763.8 574h1.4v1.4h-1.4zM763.8 577h1.4v1.4h-1.4zM763.8 580h1.4v1.4h-1.4zM763.8 583h1.4v1.4h-1.4zM763.8 586h1.4v1.4h-1.4zM763.8 589h1.4v1.4h-1.4zM763.8 592h1.4v1.4h-1.4zM763.8 595h1.4v1.4h-1.4zM763.8 598h1.4v1.4h-1.4zM763.8 601h1.4v1.4h-1.4zM763.8 604h1.4v1.4h-1.4zM763.8 607h1.4v1.4h-1.4zM763.8 610h1.4v1.4h-1.4zM763.8 613h1.4v1.4h-1.4zM763.8 616h1.4v1.4h-1.4zM763.8 619h1.4v1.4h-1.4zM763.8 622h1.4v1.4h-1.4zM763.8 625h1.4v1.4h-1.4zM763.8 628h1.4v1.4h-1.4zM763.8 631h1.4v1.4h-1.4zM763.8 634h1.4v1.4h-1.4zM763.8 637h1.4v1.4h-1.4zM763.8 640h1.4v1.4h-1.4zM763.8 643h1.4v1.4h-1.4zM763.8 646h1.4v1.4h-1.4zM763.8 649h1.4v1.4h-1.4zM763.8 652h1.4v1.4h-1.4zM763.8 655h1.4v1.4h-1.4zM763.8 658h1.4v1.4h-1.4zM763.8 661h1.4v1.4h-1.4zM763.8 664h1.4v1.4h-1.4zM763.8 667h1.4v1.4h-1.4zM763.8 670h1.4v1.4h-1.4zM763.8 673h1.4v1.4h-1.4zM763.8 676h1.4v1.4h-1.4zM763.8 679h1.4v1.4h-1.4zM763.8 682h1.4v1.4h-1.4zM763.8 685h1.4v1.4h-1.4zM763.8 688h1.4v1.4h-1.4zM763.8 691h1.4v1.4h-1.4zM763.8 694h1.4v1.4h-1.4zM763.8 697h1.4v1.4h-1.4zM763.8 700h1.4v1.4h-1.4zM763.8 703h1.4v1.4h-1.4zM763.8 706h1.4v1.4h-1.4zM763.8 709h1.4v1.4h-1.4zM763.8 712h1.4v1.4h-1.4zM763.8 715h1.4v1.4h-1.4zM763.8 718h1.4v1.4h-1.4zM763.8 721h1.4v1.4h-1.4zM763.8 724h1.4v1.4h-1.4zM763.8 727h1.4v1.4h-1.4zM763.8 730h1.4v1.4h-1.4zM763.8 733h1.4v1.4h-1.4zM763.8 736h1.4v1.4h-1.4zM763.8 739h1.4v1.4h-1.4zM763.8 742h1.4v1.4h-1.4zM763.8 745h1.4v1.4h-1.4zM763.8 748h1.4v1.4h-1.4zM763.8 751h1.4v1.4h-1.4zM763.8 754h1.4v1.4h-1.4zM763.8 757h1.4v1.4h-1.4zM763.8 760h1.4v1.4h-1.4zM763.8 763h1.4v1.4h-1.4zM763.8 766h1.4v1.4h-1.4zM763.8 769h1.4v1.4h-1.4zM763.8 772h1.4v1.4h-1.4zM763.8 775h1.4v1.4h-1.4zM763.8 778h1.4v1.4h-1.4zM763.8 781h1.4v1.4h-1.4zM763.8 784h1.4v1.4h-1.4zM763.8 787h1.4v1.4h-1.4zM763.8 790h1.4v1.4h-1.4zM763.8 793h1.4v1.4h-1.4zM763.8 796h1.4v1.4h-1.4zM763.8 799h1.4v1.4h-1.4zM763.8 802h1.4v1.4h-1.4zM763.8 805h1.4v1.4h-1.4zM763.8 808h1.4v1.4h-1.4zM763.8 811h1.4v1.4h-1.4zM763.8 814h1.4v1.4h-1.4zM763.8 817h1.4v1.4h-1.4zM763.8 820h1.4v1.4h-1.4zM763.8 823h1.4v1.4h-1.4zM763.8 826h1.4v1.4h-1.4zM763.8 829h1.4v1.4h-1.4zM763.8 832h1.4v1.4h-1.4zM763.8 835h1.4v1.4h-1.4zM763.8 838h1.4v1.4h-1.4zM763.8 841h1.4v1.4h-1.4zM763.8 844h1.4v1.4h-1.4zM763.8 847h1.4v1.4h-1.4zM763.8 850h1.4v1.4h-1.4zM763.8 853h1.4v1.4h-1.4zM763.8 856h1.4v1.4h-1.4zM763.8 859h1.4v1.4h-1.4zM763.8 862h1.4v1.4h-1.4zM763.8 865h1.4v1.4h-1.4zM763.8 868h1.4v1.4h-1.4zM763.8 871h1.4v1.4h-1.4zM763.8 874h1.4v1.4h-1.4zM763.8 877h1.4v1.4h-1.4zM763.8 880h1.4v1.4h-1.4zM763.8 883h1.4v1.4h-1.4zM763.8 886h1.4v1.4h-1.4zM763.8 889h1.4v1.4h-1.4zM763.8 892h1.4v1.4h-1.4zM763.8 895h1.4v1.4h-1.4zM763.8 898h1.4v1.4h-1.4zM763.8 901h1.4v1.4h-1.4zM763.8 904h1.4v1.4h-1.4zM763.8 907h1.4v1.4h-1.4zM763.8 910h1.4v1.4h-1.4zM763.8 913h1.4v1.4h-1.4zM763.8 916h1.4v1.4h-1.4zM763.8 919h1.4v1.4h-1.4zM763.8 922h1.4v1.4h-1.4zM763.8 925h1.4v1.4h-1.4zM763.8 928h1.4v1.4h-1.4zM763.8 931h1.4v1.4h-1.4zM763.8 934h1.4v1.4h-1.4zM763.8 937h1.4v1.4h-1.4zM763.8 940h1.4v1.4h-1.4zM763.8 943h1.4v1.4h-1.4zM763.8 946h1.4v1.4h-1.4zM763.8 949h1.4v1.4h-1.4zM763.8 952h1.4v1.4h-1.4zM763.8 955h1.4v1.4h-1.4zM763.8 958h1.4v1.4h-1.4zM763.8 961h1.4v1.4h-1.4zM763.8 964h1.4v1.4h-1.4zM763.8 967h1.4v1.4h-1.4zM763.8 970h1.4v1.4h-1.4zM763.8 973h1.4v1.4h-1.4zM763.8 976h1.4v1.4h-1.4zM32 500.3h1.4v1.4h-1.4zM35 500.3h1.4v1.4h-1.4zM38 500.3h1.4v1.4h-1.4zM41 500.3h1.4v1.4h-1.4zM44 500.3h1.4v1.4h-1.4zM47 500.3h1.4v1.4h-1.4zM50 500.3h1.4v1.4h-1.4zM53 500.3h1.4v1.4h-1.4zM56 500.3h1.4v1.4h-1.4zM59 500.3h1.4v1.4h-1.4zM62 500.3h1.4v1.4h-1.4zM65 500.3h1.4v1.4h-1.4zM68 500.3h1.4v1.4h-1.4zM71 500.3h1.4v1.4h-1.4zM74 500.3h1.4v1.4h-1.4zM77 500.3h1.4v1.4h-1.4zM80 500.3h1.4v1.4h-1.4zM83 500.3h1.4v1.4h-1.4zM86 500.3h1.4v1.4h-1.4zM89 500.3h1.4v1.4h-1.4zM92 500.3h1.4v1.4h-1.4zM95 500.3h1.4v1.4h-1.4zM98 500.3h1.4v1.4h-1.4zM101 500.3h1.4v1.4h-1.4zM104 500.3h1.4v1.4h-1.4zM107 500.3h1.4v1.4h-1.4zM110 500.3h1.4v1.4h-1.4zM113 500.3h1.4v1.4h-1.4zM116 500.3h1.4v1.4h-1.4zM119 500.3h1.4v1.4h-1.4zM122 500.3h1.4v1.4h-1.4zM125 500.3h1.4v1.4h-1.4zM128 500.3h1.4v1.4h-1.4zM131 500.3h1.4v1.4h-1.4zM134 500.3h1.4v1.4h-1.4zM137 500.3h1.4v1.4h-1.4zM140 500.3h1.4v1.4h-1.4zM143 500.3h1.4v1.4h-1.4zM146 500.3h1.4v1.4h-1.4zM149 500.3h1.4v1.4h-1.4zM152 500.3h1.4v1.4h-1.4zM155 500.3h1.4v1.4h-1.4zM158 500.3h1.4v1.4h-1.4zM161 500.3h1.4v1.4h-1.4zM164 500.3h1.4v1.4h-1.4zM167 500.3h1.4v1.4h-1.4zM170 500.3h1.4v1.4h-1.4zM173 500.3h1.4v1.4h-1.4zM176 500.3h1.4v1.4h-1.4zM179 500.3h1.4v1.4h-1.4zM182 500.3h1.4v1.4h-1.4zM185 500.3h1.4v1.4h-1.4zM188 500.3h1.4v1.4h-1.4zM191 500.3h1.4v1.4h-1.4zM194 500.3h1.4v1.4h-1.4zM197 500.3h1.4v1.4h-1.4zM200 500.3h1.4v1.4h-1.4zM203 500.3h1.4v1.4h-1.4zM206 500.3h1.4v1.4h-1.4zM209 500.3h1.4v1.4h-1.4zM212 500.3h1.4v1.4h-1.4zM215 500.3h1.4v1.4h-1.4zM218 500.3h1.4v1.4h-1.4zM221 500.3h1.4v1.4h-1.4zM224 500.3h1.4v1.4h-1.4zM227 500.3h1.4v1.4h-1.4zM230 500.3h1.4v1.4h-1.4zM233 500.3h1.4v1.4h-1.4zM236 500.3h1.4v1.4h-1.4zM239 500.3h1.4v1.4h-1.4zM242 500.3h1.4v1.4h-1.4zM245 500.3h1.4v1.4h-1.4zM248 500.3h1.4v1.4h-1.4zM251 500.3h1.4v1.4h-1.4zM254 500.3h1.4v1.4h-1.4zM257 500.3h1.4v1.4h-1.4zM260 500.3h1.4v1.4h-1.4zM263 500.3h1.4v1.4h-1.4zM266 500.3h1.4v1.4h-1.4zM269 500.3h1.4v1.4h-1.4zM272 500.3h1.4v1.4h-1.4zM275 500.3h1.4v1.4h-1.4zM278 500.3h1.4v1.4h-1.4zM281 500.3h1.4v1.4h-1.4zM284 500.3h1.4v1.4h-1.4zM287 500.3h1.4v1.4h-1.4zM290 500.3h1.4v1.4h-1.4zM293 500.3h1.4v1.4h-1.4zM296 500.3h1.4v1.4h-1.4zM299 500.3h1.4v1.4h-1.4zM302 500.3h1.4v1.4h-1.4zM305 500.3h1.4v1.4h-1.4zM308 500.3h1.4v1.4h-1.4zM311 500.3h1.4v1.4h-1.4zM314 500.3h1.4v1.4h-1.4zM317 500.3h1.4v1.4h-1.4zM320 500.3h1.4v1.4h-1.4zM323 500.3h1.4v1.4h-1.4zM326 500.3h1.4v1.4h-1.4zM329 500.3h1.4v1.4h-1.4zM332 500.3h1.4v1.4h-1.4zM335 500.3h1.4v1.4h-1.4zM338 500.3h1.4v1.4h-1.4zM341 500.3h1.4v1.4h-1.4zM344 500.3h1.4v1.4h-1.4zM347 500.3h1.4v1.4h-1.4zM350 500.3h1.4v1.4h-1.4zM353 500.3h1.4v1.4h-1.4zM356 500.3h1.4v1.4h-1.4zM359 500.3h1.4v1.4h-1.4zM362 500.3h1.4v1.4h-1.4zM365 500.3h1.4v1.4h-1.4zM368 500.3h1.4v1.4h-1.4zM371 500.3h1.4v1.4h-1.4zM374 500.3h1.4v1.4h-1.4zM377 500.3h1.4v1.4h-1.4zM380 500.3h1.4v1.4h-1.4zM383 500.3h1.4v1.4h-1.4zM386 500.3h1.4v1.4h-1.4zM389 500.3h1.4v1.4h-1.4zM392 500.3h1.4v1.4h-1.4zM395 500.3h1.4v1.4h-1.4zM398 500.3h1.4v1.4h-1.4zM401 500.3h1.4v1.4h-1.4zM404 500.3h1.4v1.4h-1.4zM407 500.3h1.4v1.4h-1.4zM410 500.3h1.4v1.4h-1.4zM413 500.3h1.4v1.4h-1.4zM416 500.3h1.4v1.4h-1.4zM419 500.3h1.4v1.4h-1.4zM422 500.3h1.4v1.4h-1.4zM425 500.3h1.4v1.4h-1.4zM428 500.3h1.4v1.4h-1.4zM431 500.3h1.4v1.4h-1.4zM434 500.3h1.4v1.4h-1.4zM437 500.3h1.4v1.4h-1.4zM440 500.3h1.4v1.4h-1.4zM443 500.3h1.4v1.4h-1.4zM446 500.3h1.4v1.4h-1.4zM449 500.3h1.4v1.4h-1.4zM452 500.3h1.4v1.4h-1.4zM455 500.3h1.4v1.4h-1.4zM458 500.3h1.4v1.4h-1.4zM461 500.3h1.4v1.4h-1.4zM464 500.3h1.4v1.4h-1.4zM467 500.3h1.4v1.4h-1.4zM470 500.3h1.4v1.4h-1.4zM473 500.3h1.4v1.4h-1.4zM476 500.3h1.4v1.4h-1.4zM479 500.3h1.4v1.4h-1.4zM482 500.3h1.4v1.4h-1.4zM485 500.3h1.4v1.4h-1.4zM488 500.3h1.4v1.4h-1.4zM491 500.3h1.4v1.4h-1.4zM494 500.3h1.4v1.4h-1.4zM497 500.3h1.4v1.4h-1.4zM500 500.3h1.4v1.4h-1.4zM503 500.3h1.4v1.4h-1.4zM506 500.3h1.4v1.4h-1.4zM509 500.3h1.4v1.4h-1.4zM512 500.3h1.4v1.4h-1.4zM515 500.3h1.4v1.4h-1.4zM518 500.3h1.4v1.4h-1.4zM521 500.3h1.4v1.4h-1.4zM524 500.3h1.4v1.4h-1.4zM527 500.3h1.4v1.4h-1.4zM530 500.3h1.4v1.4h-1.4zM533 500.3h1.4v1.4h-1.4zM536 500.3h1.4v1.4h-1.4zM539 500.3h1.4v1.4h-1.4zM542 500.3h1.4v1.4h-1.4zM545 500.3h1.4v1.4h-1.4zM548 500.3h1.4v1.4h-1.4zM551 500.3h1.4v1.4h-1.4zM554 500.3h1.4v1.4h-1.4zM557 500.3h1.4v1.4h-1.4zM560 500.3h1.4v1.4h-1.4zM563 500.3h1.4v1.4h-1.4zM566 500.3h1.4v1.4h-1.4zM569 500.3h1.4v1.4h-1.4zM572 500.3h1.4v1.4h-1.4zM575 500.3h1.4v1.4h-1.4zM578 500.3h1.4v1.4h-1.4zM581 500.3h1.4v1.4h-1.4zM584 500.3h1.4v1.4h-1.4zM587 500.3h1.4v1.4h-1.4zM590 500.3h1.4v1.4h-1.4zM593 500.3h1.4v1.4h-1.4zM596 500.3h1.4v1.4h-1.4zM599 500.3h1.4v1.4h-1.4zM602 500.3h1.4v1.4h-1.4zM605 500.3h1.4v1.4h-1.4zM608 500.3h1.4v1.4h-1.4zM611 500.3h1.4v1.4h-1.4zM614 500.3h1.4v1.4h-1.4zM617 500.3h1.4v1.4h-1.4zM620 500.3h1.4v1.4h-1.4zM623 500.3h1.4v1.4h-1.4zM626 500.3h1.4v1.4h-1.4zM629 500.3h1.4v1.4h-1.4zM632 500.3h1.4v1.4h-1.4zM635 500.3h1.4v1.4h-1.4zM638 500.3h1.4v1.4h-1.4zM641 500.3h1.4v1.4h-1.4zM644 500.3h1.4v1.4h-1.4zM647 500.3h1.4v1.4h-1.4zM650 500.3h1.4v1.4h-1.4zM653 500.3h1.4v1.4h-1.4zM656 500.3h1.4v1.4h-1.4zM659 500.3h1.4v1.4h-1.4zM662 500.3h1.4v1.4h-1.4zM665 500.3h1.4v1.4h-1.4zM668 500.3h1.4v1.4h-1.4zM671 500.3h1.4v1.4h-1.4zM674 500.3h1.4v1.4h-1.4zM677 500.3h1.4v1.4h-1.4zM680 500.3h1.4v1.4h-1.4zM683 500.3h1.4v1.4h-1.4zM686 500.3h1.4v1.4h-1.4zM689 500.3h1.4v1.4h-1.4zM692 500.3h1.4v1.4h-1.4zM695 500.3h1.4v1.4h-1.4zM698 500.3h1.4v1.4h-1.4zM701 500.3h1.4v1.4h-1.4zM704 500.3h1.4v1.4h-1.4zM707 500.3h1.4v1.4h-1.4zM710 500.3h1.4v1.4h-1.4zM713 500.3h1.4v1.4h-1.4zM716 500.3h1.4v1.4h-1.4zM719 500.3h1.4v1.4h-1.4zM722 500.3h1.4v1.4h-1.4zM725 500.3h1.4v1.4h-1.4zM728 500.3h1.4v1.4h-1.4zM731 500.3h1.4v1.4h-1.4zM734 500.3h1.4v1.4h-1.4zM737 500.3h1.4v1.4h-1.4zM740 500.3h1.4v1.4h-1.4zM743 500.3h1.4v1.4h-1.4zM746 500.3h1.4v1.4h-1.4zM749 500.3h1.4v1.4h-1.4zM752 500.3h1.4v1.4h-1.4zM755 500.3h1.4v1.4h-1.4zM758 500.3h1.4v1.4h-1.4zM761 500.3h1.4v1.4h-1.4zM764 500.3h1.4v1.4h-1.4zM767 500.3h1.4v1.4h-1.4zM770 500.3h1.4v1.4h-1.4zM773 500.3h1.4v1.4h-1.4zM776 500.3h1.4v1.4h-1.4zM779 500.3h1.4v1.4h-1.4zM782 500.3h1.4v1.4h-1.4zM785 500.3h1.4v1.4h-1.4zM788 500.3h1.4v1.4h-1.4zM791 500.3h1.4v1.4h-1.4zM794 500.3h1.4v1.4h-1.4zM797 500.3h1.4v1.4h-1.4zM800 500.3h1.4v1.4h-1.4zM803 500.3h1.4v1.4h-1.4zM806 500.3h1.4v1.4h-1.4zM809 500.3h1.4v1.4h-1.4zM812 500.3h1.4v1.4h-1.4zM815 500.3h1.4v1.4h-1.4zM818 500.3h1.4v1.4h-1.4zM821 500.3h1.4v1.4h-1.4zM824 500.3h1.4v1.4h-1.4zM827 500.3h1.4v1.4h-1.4zM830 500.3h1.4v1.4h-1.4zM833 500.3h1.4v1.4h-1.4zM836 500.3h1.4v1.4h-1.4zM839 500.3h1.4v1.4h-1.4zM842 500.3h1.4v1.4h-1.4zM845 500.3h1.4v1.4h-1.4zM848 500.3h1.4v1.4h-1.4zM851 500.3h1.4v1.4h-1.4zM854 500.3h1.4v1.4h-1.4zM857 500.3h1.4v1.4h-1.4zM860 500.3h1.4v1.4h-1.4zM863 500.3h1.4v1.4h-1.4zM866 500.3h1.4v1.4h-1.4zM869 500.3h1.4v1.4h-1.4zM872 500.3h1.4v1.4h-1.4zM875 500.3h1.4v1.4h-1.4zM878 500.3h1.4v1.4h-1.4zM881 500.3h1.4v1.4h-1.4zM884 500.3h1.4v1.4h-1.4zM887 500.3h1.4v1.4h-1.4zM890 500.3h1.4v1.4h-1.4zM893 500.3h1.4v1.4h-1.4zM896 500.3h1.4v1.4h-1.4zM899 500.3h1.4v1.4h-1.4zM902 500.3h1.4v1.4h-1.4zM905 500.3h1.4v1.4h-1.4zM908 500.3h1.4v1.4h-1.4zM911 500.3h1.4v1.4h-1.4zM914 500.3h1.4v1.4h-1.4zM917 500.3h1.4v1.4h-1.4zM920 500.3h1.4v1.4h-1.4zM923 500.3h1.4v1.4h-1.4zM926 500.3h1.4v1.4h-1.4zM929 500.3h1.4v1.4h-1.4zM932 500.3h1.4v1.4h-1.4zM935 500.3h1.4v1.4h-1.4zM938 500.3h1.4v1.4h-1.4zM941 500.3h1.4v1.4h-1.4zM944 500.3h1.4v1.4h-1.4zM947 500.3h1.4v1.4h-1.4zM950 500.3h1.4v1.4h-1.4zM953 500.3h1.4v1.4h-1.4zM956 500.3h1.4v1.4h-1.4zM959 500.3h1.4v1.4h-1.4zM962 500.3h1.4v1.4h-1.4zM965 500.3h1.4v1.4h-1.4zM968 500.3h1.4v1.4h-1.4zM971 500.3h1.4v1.4h-1.4zM974 500.3h1.4v1.4h-1.4zM977 500.3h1.4v1.4h-1.4zM980 500.3h1.4v1.4h-1.4zM983 500.3h1.4v1.4h-1.4zM986 500.3h1.4v1.4h-1.4zM989 500.3h1.4v1.4h-1.4zM992 500.3h1.4v1.4h-1.4zM995 500.3h1.4v1.4h-1.4zM998 500.3h1.4v1.4h-1.4zM1001 500.3h1.4v1.4h-1.4zM1004 500.3h1.4v1.4h-1.4zM1007 500.3h1.4v1.4h-1.4zM1010 500.3h1.4v1.4h-1.4zM1013 500.3h1.4v1.4h-1.4zM1016 500.3h1.4v1.4h-1.4zM1019 500.3h1.4v1.4h-1.4zM1022 500.3h1.4v1.4h-1.4zM1025 500.3h1.4v1.4h-1.4zM1028 500.3h1.4v1.4h-1.4zM1031 500.3h1.4v1.4h-1.4zM1034 500.3h1.4v1.4h-1.4zM1037 500.3h1.4v1.4h-1.4zM1040 500.3h1.4v1.4h-1.4zM1043 500.3h1.4v1.4h-1.4zM1046 500.3h1.4v1.4h-1.4zM1049 500.3h1.4v1.4h-1.4zM1052 500.3h1.4v1.4h-1.4zM1055 500.3h1.4v1.4h-1.4zM1058 500.3h1.4v1.4h-1.4zM1061 500.3h1.4v1.4h-1.4zM1064 500.3h1.4v1.4h-1.4zM1067 500.3h1.4v1.4h-1.4zM1070 500.3h1.4v1.4h-1.4zM1073 500.3h1.4v1.4h-1.4zM1076 500.3h1.4v1.4h-1.4zM1079 500.3h1.4v1.4h-1.4zM1082 500.3h1.4v1.4h-1.4zM1085 500.3h1.4v1.4h-1.4zM1088 500.3h1.4v1.4h-1.4zM1091 500.3h1.4v1.4h-1.4zM1094 500.3h1.4v1.4h-1.4zM1097 500.3h1.4v1.4h-1.4zM1100 500.3h1.4v1.4h-1.4zM1103 500.3h1.4v1.4h-1.4zM1106 500.3h1.4v1.4h-1.4zM1109 500.3h1.4v1.4h-1.4zM1112 500.3h1.4v1.4h-1.4zM1115 500.3h1.4v1.4h-1.4zM1118 500.3h1.4v1.4h-1.4zM1121 500.3h1.4v1.4h-1.4zM1124 500.3h1.4v1.4h-1.4zM1127 500.3h1.4v1.4h-1.4zM1130 500.3h1.4v1.4h-1.4zM1133 500.3h1.4v1.4h-1.4zM1136 500.3h1.4v1.4h-1.4zM1139 500.3h1.4v1.4h-1.4zM1142 500.3h1.4v1.4h-1.4zM1145 500.3h1.4v1.4h-1.4zM1148 500.3h1.4v1.4h-1.4zM1151 500.3h1.4v1.4h-1.4zM1154 500.3h1.4v1.4h-1.4zM1157 500.3h1.4v1.4h-1.4zM1160 500.3h1.4v1.4h-1.4zM1163 500.3h1.4v1.4h-1.4zM1166 500.3h1.4v1.4h-1.4zM1169 500.3h1.4v1.4h-1.4zM1172 500.3h1.4v1.4h-1.4zM1175 500.3h1.4v1.4h-1.4zM1178 500.3h1.4v1.4h-1.4zM1181 500.3h1.4v1.4h-1.4zM1184 500.3h1.4v1.4h-1.4zM1187 500.3h1.4v1.4h-1.4zM1190 500.3h1.4v1.4h-1.4zM1193 500.3h1.4v1.4h-1.4zM1196 500.3h1.4v1.4h-1.4zM1199 500.3h1.4v1.4h-1.4zM1202 500.3h1.4v1.4h-1.4zM1205 500.3h1.4v1.4h-1.4zM1208 500.3h1.4v1.4h-1.4zM1211 500.3h1.4v1.4h-1.4zM1214 500.3h1.4v1.4h-1.4zM1217 500.3h1.4v1.4h-1.4zM1220 500.3h1.4v1.4h-1.4zM1223 500.3h1.4v1.4h-1.4zM1226 500.3h1.4v1.4h-1.4zM1229 500.3h1.4v1.4h-1.4zM1232 500.3h1.4v1.4h-1.4zM1235 500.3h1.4v1.4h-1.4zM1238 500.3h1.4v1.4h-1.4zM1241 500.3h1.4v1.4h-1.4zM1244 500.3h1.4v1.4h-1.4zM1247 500.3h1.4v1.4h-1.4zM1250 500.3h1.4v1.4h-1.4zM1253 500.3h1.4v1.4h-1.4zM1256 500.3h1.4v1.4h-1.4zM1259 500.3h1.4v1.4h-1.4zM1262 500.3h1.4v1.4h-1.4zM1265 500.3h1.4v1.4h-1.4zM1268 500.3h1.4v1.4h-1.4zM1271 500.3h1.4v1.4h-1.4zM1274 500.3h1.4v1.4h-1.4zM1277 500.3h1.4v1.4h-1.4zM1280 500.3h1.4v1.4h-1.4zM1283 500.3h1.4v1.4h-1.4zM1286 500.3h1.4v1.4h-1.4zM1289 500.3h1.4v1.4h-1.4zM1292 500.3h1.4v1.4h-1.4zM1295 500.3h1.4v1.4h-1.4zM1298 500.3h1.4v1.4h-1.4zM1301 500.3h1.4v1.4h-1.4zM1304 500.3h1.4v1.4h-1.4zM1307 500.3h1.4v1.4h-1.4zM1310 500.3h1.4v1.4h-1.4zM1313 500.3h1.4v1.4h-1.4zM1316 500.3h1.4v1.4h-1.4zM1319 500.3h1.4v1.4h-1.4zM1322 500.3h1.4v1.4h-1.4zM1325 500.3h1.4v1.4h-1.4zM1328 500.3h1.4v1.4h-1.4zM1331 500.3h1.4v1.4h-1.4zM1334 500.3h1.4v1.4h-1.4zM1337 500.3h1.4v1.4h-1.4zM1340 500.3h1.4v1.4h-1.4zM1343 500.3h1.4v1.4h-1.4zM1346 500.3h1.4v1.4h-1.4zM1349 500.3h1.4v1.4h-1.4zM1352 500.3h1.4v1.4h-1.4zM1355 500.3h1.4v1.4h-1.4zM1358 500.3h1.4v1.4h-1.4zM1361 500.3h1.4v1.4h-1.4zM1364 500.3h1.4v1.4h-1.4zM1367 500.3h1.4v1.4h-1.4zM1370 500.3h1.4v1.4h-1.4zM1373 500.3h1.4v1.4h-1.4zM1376 500.3h1.4v1.4h-1.4zM1379 500.3h1.4v1.4h-1.4zM1382 500.3h1.4v1.4h-1.4zM1385 500.3h1.4v1.4h-1.4zM1388 500.3h1.4v1.4h-1.4zM1391 500.3h1.4v1.4h-1.4zM1394 500.3h1.4v1.4h-1.4zM1397 500.3h1.4v1.4h-1.4zM1400 500.3h1.4v1.4h-1.4zM1403 500.3h1.4v1.4h-1.4zM1406 500.3h1.4v1.4h-1.4zM1409 500.3h1.4v1.4h-1.4zM1412 500.3h1.4v1.4h-1.4zM1415 500.3h1.4v1.4h-1.4zM1418 500.3h1.4v1.4h-1.4zM1421 500.3h1.4v1.4h-1.4zM1424 500.3h1.4v1.4h-1.4zM1427 500.3h1.4v1.4h-1.4zM1430 500.3h1.4v1.4h-1.4zM1433 500.3h1.4v1.4h-1.4zM1436 500.3h1.4v1.4h-1.4zM1439 500.3h1.4v1.4h-1.4zM1442 500.3h1.4v1.4h-1.4zM1445 500.3h1.4v1.4h-1.4zM1448 500.3h1.4v1.4h-1.4zM1451 500.3h1.4v1.4h-1.4zM1454 500.3h1.4v1.4h-1.4zM1457 500.3h1.4v1.4h-1.4zM1460 500.3h1.4v1.4h-1.4zM1463 500.3h1.4v1.4h-1.4zM1466 500.3h1.4v1.4h-1.4zM1469 500.3h1.4v1.4h-1.4zM1472 500.3h1.4v1.4h-1.4zM1475 500.3h1.4v1.4h-1.4zM1478 500.3h1.4v1.4h-1.4zM1481 500.3h1.4v1.4h-1.4zM1484 500.3h1.4v1.4h-1.4zM1487 500.3h1.4v1.4h-1.4zM1490 500.3h1.4v1.4h-1.4zM1493 500.3h1.4v1.4h-1.4zM1496 500.3h1.4v1.4h-1.4zM759 42.9h2v1.4h-2zM762.5 42.9h4v1.4h-4zM768 42.9h2v1.4h-2zM60.6 495.5v2h1.4v-2zM60.6 499v4h1.4v-4zM60.6 504.5v2h1.4v-2zM759 61.9h2v1.4h-2zM762.5 61.9h4v1.4h-4zM768 61.9h2v1.4h-2zM89.9 495.5v2h1.4v-2zM89.9 499v4h1.4v-4zM89.9 504.5v2h1.4v-2zM759 81h2v1.4h-2zM762.5 81h4v1.4h-4zM768 81h2v1.4h-2zM119.2 495.5v2h1.4v-2zM119.2 499v4h1.4v-4zM119.2 504.5v2h1.4v-2zM759 100h2v1.4h-2zM762.5 100h4v1.4h-4zM768 100h2v1.4h-2zM148.5 495.5v2h1.4v-2zM148.5 499v4h1.4v-4zM148.5 504.5v2h1.4v-2zM759 119.1h2v1.4h-2zM762.5 119.1h4v1.4h-4zM768 119.1h2v1.4h-2zM177.8 495.5v2h1.4v-2zM177.8 499v4h1.4v-4zM177.8 504.5v2h1.4v-2zM759 138.2h2v1.4h-2zM762.5 138.2h4v1.4h-4zM768 138.2h2v1.4h-2zM207.1 495.5v2h1.4v-2zM207.1 499v4h1.4v-4zM207.1 504.5v2h1.4v-2zM759 157.2h2v1.4h-2zM762.5 157.2h4v1.4h-4zM768 157.2h2v1.4h-2zM236.4 495.5v2h1.4v-2zM236.4 499v4h1.4v-4zM236.4 504.5v2h1.4v-2zM759 176.3h2v1.4h-2zM762.5 176.3h4v1.4h-4zM768 176.3h2v1.4h-2zM265.7 495.5v2h1.4v-2zM265.7 499v4h1.4v-4zM265.7 504.5v2h1.4v-2zM759 195.3h2v1.4h-2zM762.5 195.3h4v1.4h-4zM768 195.3h2v1.4h-2zM295 495.5v2h1.4v-2zM295 499v4h1.4v-4zM295 504.5v2h1.4v-2zM759 214.4h2v1.4h-2zM762.5 214.4h4v1.4h-4zM768 214.4h2v1.4h-2zM324.3 495.5v2h1.4v-2zM324.3 499v4h1.4v-4zM324.3 504.5v2h1.4v-2zM759 233.5h2v1.4h-2zM762.5 233.5h4v1.4h-4zM768 233.5h2v1.4h-2zM353.6 495.5v2h1.4v-2zM353.6 499v4h1.4v-4zM353.6 504.5v2h1.4v-2zM759 252.5h2v1.4h-2zM762.5 252.5h4v1.4h-4zM768 252.5h2v1.4h-2zM382.9 495.5v2h1.4v-2zM382.9 499v4h1.4v-4zM382.9 504.5v2h1.4v-2zM759 271.6h2v1.4h-2zM762.5 271.6h4v1.4h-4zM768 271.6h2v1.4h-2zM412.2 495.5v2h1.4v-2zM412.2 499v4h1.4v-4zM412.2 504.5v2h1.4v-2zM759 290.6h2v1.4h-2zM762.5 290.6h4v1.4h-4zM768 290.6h2v1.4h-2zM441.5 495.5v2h1.4v-2zM441.5 499v4h1.4v-4zM441.5 504.5v2h1.4v-2zM759 309.7h2v1.4h-2zM762.5 309.7h4v1.4h-4zM768 309.7h2v1.4h-2zM470.8 495.5v2h1.4v-2zM470.8 499v4h1.4v-4zM470.8 504.5v2h1.4v-2zM759 328.8h2v1.4h-2zM762.5 328.8h4v1.4h-4zM768 328.8h2v1.4h-2zM500.1 495.5v2h1.4v-2zM500.1 499v4h1.4v-4zM500.1 504.5v2h1.4v-2zM759 347.8h2v1.4h-2zM762.5 347.8h4v1.4h-4zM768 347.8h2v1.4h-2zM529.4 495.5v2h1.4v-2zM529.4 499v4h1.4v-4zM529.4 504.5v2h1.4v-2zM759 366.9h2v1.4h-2zM762.5 366.9h4v1.4h-4zM768 366.9h2v1.4h-2zM558.7 495.5v2h1.4v-2zM558.7 499v4h1.4v-4zM558.7 504.5v2h1.4v-2zM759 385.9h2v1.4h-2zM762.5 385.9h4v1.4h-4zM768 385.9h2v1.4h-2zM588 495.5v2h1.4v-2zM588 499v4h1.4v-4zM588 504.5v2h1.4v-2zM759 405h2v1.4h-2zM762.5 405h4v1.4h-4zM768 405h2v1.4h-2zM617.3 495.5v2h1.4v-2zM617.3 499v4h1.4v-4zM617.3 504.5v2h1.4v-2zM759 424.1h2v1.4h-2zM762.5 424.1h4v1.4h-4zM768 424.1h2v1.4h-2zM646.6 495.5v2h1.4v-2zM646.6 499v4h1.4v-4zM646.6 504.5v2h1.4v-2zM759 443.1h2v1.4h-2zM762.5 443.1h4v1.4h-4zM768 443.1h2v1.4h-2zM675.9 495.5v2h1.4v-2zM675.9 499v4h1.4v-4zM675.9 504.5v2h1.4v-2zM759 462.2h2v1.4h-2zM762.5 462.2h4v1.4h-4zM768 462.2h2v1.4h-2zM705.2 495.5v2h1.4v-2zM705.2 499v4h1.4v-4zM705.2 504.5v2h1.4v-2zM759 481.2h2v1.4h-2zM762.5 481.2h4v1.4h-4zM768 481.2h2v1.4h-2zM734.5 495.5v2h1.4v-2zM734.5 499v4h1.4v-4zM734.5 504.5v2h1.4v-2zM759 500.3h2v1.4h-2zM762.5 500.3h4v1.4h-4zM768 500.3h2v1.4h-2zM763.8 495.5v2h1.4v-2zM763.8 499v4h1.4v-4zM763.8 504.5v2h1.4v-2zM759 519.4h2v1.4h-2zM762.5 519.4h4v1.4h-4zM768 519.4h2v1.4h-2zM793.1 495.5v2h1.4v-2zM793.1 499v4h1.4v-4zM793.1 504.5v2h1.4v-2zM759 538.4h2v1.4h-2zM762.5 538.4h4v1.4h-4zM768 538.4h2v1.4h-2zM822.4 495.5v2h1.4v-2zM822.4 499v4h1.4v-4zM822.4 504.5v2h1.4v-2zM759 557.5h2v1.4h-2zM762.5 557.5h4v1.4h-4zM768 557.5h2v1.4h-2zM851.7 495.5v2h1.4v-2zM851.7 499v4h1.4v-4zM851.7 504.5v2h1.4v-2zM759 576.5h2v1.4h-2zM762.5 576.5h4v1.4h-4zM768 576.5h2v1.4h-2zM881 495.5v2h1.4v-2zM881 499v4h1.4v-4zM881 504.5v2h1.4v-2zM759 595.6h2v1.4h-2zM762.5 595.6h4v1.4h-4zM768 595.6h2v1.4h-2zM910.3 495.5v2h1.4v-2zM910.3 499v4h1.4v-4zM910.3 504.5v2h1.4v-2zM759 614.7h2v1.4h-2zM762.5 614.7h4v1.4h-4zM768 614.7h2v1.4h-2zM939.6 495.5v2h1.4v-2zM939.6 499v4h1.4v-4zM939.6 504.5v2h1.4v-2zM759 633.7h2v1.4h-2zM762.5 633.7h4v1.4h-4zM768 633.7h2v1.4h-2zM968.9 495.5v2h1.4v-2zM968.9 499v4h1.4v-4zM968.9 504.5v2h1.4v-2zM759 652.8h2v1.4h-2zM762.5 652.8h4v1.4h-4zM768 652.8h2v1.4h-2zM998.2 495.5v2h1.4v-2zM998.2 499v4h1.4v-4zM998.2 504.5v2h1.4v-2zM759 671.8h2v1.4h-2zM762.5 671.8h4v1.4h-4zM768 671.8h2v1.4h-2zM1027.5 495.5v2h1.4v-2zM1027.5 499v4h1.4v-4zM1027.5 504.5v2h1.4v-2zM759 690.9h2v1.4h-2zM762.5 690.9h4v1.4h-4zM768 690.9h2v1.4h-2zM1056.8 495.5v2h1.4v-2zM1056.8 499v4h1.4v-4zM1056.8 504.5v2h1.4v-2zM759 710h2v1.4h-2zM762.5 710h4v1.4h-4zM768 710h2v1.4h-2zM1086.1 495.5v2h1.4v-2zM1086.1 499v4h1.4v-4zM1086.1 504.5v2h1.4v-2zM759 729h2v1.4h-2zM762.5 729h4v1.4h-4zM768 729h2v1.4h-2zM1115.4 495.5v2h1.4v-2zM1115.4 499v4h1.4v-4zM1115.4 504.5v2h1.4v-2zM759 748.1h2v1.4h-2zM762.5 748.1h4v1.4h-4zM768 748.1h2v1.4h-2zM1144.7 495.5v2h1.4v-2zM1144.7 499v4h1.4v-4zM1144.7 504.5v2h1.4v-2zM759 767.1h2v1.4h-2zM762.5 767.1h4v1.4h-4zM768 767.1h2v1.4h-2zM1174 495.5v2h1.4v-2zM1174 499v4h1.4v-4zM1174 504.5v2h1.4v-2zM759 786.2h2v1.4h-2zM762.5 786.2h4v1.4h-4zM768 786.2h2v1.4h-2zM1203.3 495.5v2h1.4v-2zM1203.3 499v4h1.4v-4zM1203.3 504.5v2h1.4v-2zM759 805.3h2v1.4h-2zM762.5 805.3h4v1.4h-4zM768 805.3h2v1.4h-2zM1232.6 495.5v2h1.4v-2zM1232.6 499v4h1.4v-4zM1232.6 504.5v2h1.4v-2zM759 824.3h2v1.4h-2zM762.5 824.3h4v1.4h-4zM768 824.3h2v1.4h-2zM1261.9 495.5v2h1.4v-2zM1261.9 499v4h1.4v-4zM1261.9 504.5v2h1.4v-2zM759 843.4h2v1.4h-2zM762.5 843.4h4v1.4h-4zM768 843.4h2v1.4h-2zM1291.2 495.5v2h1.4v-2zM1291.2 499v4h1.4v-4zM1291.2 504.5v2h1.4v-2zM759 862.4h2v1.4h-2zM762.5 862.4h4v1.4h-4zM768 862.4h2v1.4h-2zM1320.5 495.5v2h1.4v-2zM1320.5 499v4h1.4v-4zM1320.5 504.5v2h1.4v-2zM759 881.5h2v1.4h-2zM762.5 881.5h4v1.4h-4zM768 881.5h2v1.4h-2zM1349.8 495.5v2h1.4v-2zM1349.8 499v4h1.4v-4zM1349.8 504.5v2h1.4v-2zM759 900.6h2v1.4h-2zM762.5 900.6h4v1.4h-4zM768 900.6h2v1.4h-2zM1379.1 495.5v2h1.4v-2zM1379.1 499v4h1.4v-4zM1379.1 504.5v2h1.4v-2zM759 919.6h2v1.4h-2zM762.5 919.6h4v1.4h-4zM768 919.6h2v1.4h-2zM1408.4 495.5v2h1.4v-2zM1408.4 499v4h1.4v-4zM1408.4 504.5v2h1.4v-2zM759 938.7h2v1.4h-2zM762.5 938.7h4v1.4h-4zM768 938.7h2v1.4h-2zM1437.7 495.5v2h1.4v-2zM1437.7 499v4h1.4v-4zM1437.7 504.5v2h1.4v-2zM759 957.7h2v1.4h-2zM762.5 957.7h4v1.4h-4zM768 957.7h2v1.4h-2zM1467 495.5v2h1.4v-2zM1467 499v4h1.4v-4zM1467 504.5v2h1.4v-2z"/><path fill="#00e0e0" d="M1481 489.5L1489 481V498Z"/><rect x="1489" y="489" width="7" height="1.5" fill="#00e0e0"/><rect x="30" y="23" width="1468" height="1.3" fill="#000"/><rect x="30" y="23" width="1.2" height="956" fill="#000"/><rect x="1496" y="23" width="2" height="956" fill="#000"/><rect x="30" y="978" width="1468" height="1.5" fill="#000"/><path fill="#ff9900" d="M759 1h11l-3 5h-2v2h-1v-2h-2z"/><rect x="758" y="7" width="12" height="16" fill="#ff9900"/><path fill="#fff" d="M760 9h8v2h-3v10h-2v-10h-3z"/><path fill="#ff9900" d="M755 24h16l-8 9z"/><path fill="#ff9900" d="M753 36q0-1 1-1h16q1 0 1 1v16l-4 3h-3l-1 2h-2l-1-2h-3l-4-3z"/><path fill="#fff" d="M755 36.7h15v2.6h-6v12.7h-3v-12.7h-6z"/><path fill="#fff" stroke="#c000c0" stroke-width="1.6" d="M0.8 298.5H20L29 310L20 321H0.8Z"/><rect x="0" y="298" width="2" height="23" fill="#c000c0"/><path fill="#fff" stroke="#009000" stroke-width="1.8" d="M1 488H20L29 500.5L20 513H1Z"/><rect x="0" y="488" width="2.5" height="25" fill="#009000"/><rect x="3" y="512.5" width="17" height="1.5" fill="#40e0f0"/><path fill="#1818ff" stroke="#f0e070" stroke-width="1.5" d="M0.5 865H20L28.5 876L20 887.5H0.5Z"/><rect x="0" y="864" width="20" height="1.2" fill="#000"/><rect x="33" y="487" width="51" height="17" fill="#fff"/><rect x="33" y="297.5" width="86" height="22.5" fill="#fff"/><path fill="#000" d="M757.5 6.5h2v2h-2zM768.5 6.5h2v2h-2zM757.5 20.5h2v2h-2zM768.5 20.5h2v2h-2z"/><rect x="31" y="925" width="812" height="53" fill="#fff"/><rect x="31" y="929" width="811" height="29.5" rx="7" ry="7" fill="#fff" stroke="#000" stroke-width="1.5"/><rect x="31" y="961" width="811" height="160" rx="7" ry="7" fill="#fff" stroke="#000" stroke-width="1.8"/><rect x="842" y="978" width="656" height="1.5" fill="#000"/><rect x="854" y="981.5" width="215" height="54.0" rx="7" ry="7" fill="#fff" stroke="#000" stroke-width="1.6"/><rect x="1081" y="981.5" width="156" height="54.0" rx="7" ry="7" fill="#fff" stroke="#000" stroke-width="1.6"/><rect x="1248" y="982" width="248.5" height="54" rx="7" ry="7" fill="#fff" stroke="#000" stroke-width="1.6"/><rect x="1333" y="1067" width="164" height="54" rx="7" ry="7" fill="#fff" stroke="#000" stroke-width="1.6"/><rect x="38.8" y="933" width="36.400000000000006" height="23" rx="10.3" ry="11.5" fill="#1414ff"/><text x="57.0" y="951.8" text-anchor="middle" font-size="22" font-weight="bold" fill="#000">1</text><rect x="242" y="933" width="37" height="22.5" rx="10.1" ry="11.2" fill="#20e0e6"/><text x="260.5" y="951.3" text-anchor="middle" font-size="22" font-weight="bold" fill="#000">2</text><rect x="446" y="933" width="36" height="22.5" rx="10.1" ry="11.2" fill="#9c00a8"/><text x="464.0" y="951.3" text-anchor="middle" font-size="22" font-weight="bold" fill="#000">3</text><rect x="648.6" y="933" width="37.799999999999955" height="22.5" rx="10.1" ry="11.2" fill="#00a000"/><text x="667.5" y="951.3" text-anchor="middle" font-size="22" font-weight="bold" fill="#000">4</text><rect x="39" y="991" width="35.5" height="23.600000000000023" rx="10.6" ry="11.8" fill="#20e0e6"/><text x="56.8" y="1010.4" text-anchor="middle" font-size="22" font-weight="bold" fill="#000">2</text><rect x="39" y="1017.5999999999999" width="35.5" height="23.59999999999991" rx="10.6" ry="11.8" fill="#00a000"/><text x="56.8" y="1037.0" text-anchor="middle" font-size="22" font-weight="bold" fill="#000">4</text><rect x="39" y="1043.6" width="35.5" height="23.59999999999991" rx="10.6" ry="11.8" fill="#1414ff"/><text x="56.8" y="1063.0" text-anchor="middle" font-size="22" font-weight="bold" fill="#000">1</text><rect x="39" y="1069.6" width="35.5" height="23.59999999999991" rx="10.6" ry="11.8" fill="#9c00a8"/><text x="56.8" y="1089.0" text-anchor="middle" font-size="22" font-weight="bold" fill="#000">3</text><rect x="39" y="1095" width="35.5" height="23.59999999999991" rx="10.6" ry="11.8" fill="#9c00a8"/><text x="56.8" y="1114.4" text-anchor="middle" font-size="22" font-weight="bold" fill="#000">3</text><rect x="1292" y="985.3" width="37.299999999999955" height="23.700000000000045" rx="10.7" ry="11.9" fill="#20e0e6"/><text x="1310.7" y="1004.8" text-anchor="middle" font-size="22" font-weight="bold" fill="#000">2</text><text x="821" y="946.5" font-size="14" fill="#00a000" font-weight="bold" textLength="7" lengthAdjust="spacingAndGlyphs">B</text><text x="827.5" y="952.5" font-size="13" fill="#00a000" textLength="8" lengthAdjust="spacingAndGlyphs">W</text><rect x="860" y="1014" width="18" height="16" rx="2" fill="#ff9900"/><path fill="#fff" d="M862 1016h14v2.5h-5.5v10h-3v-10h-5.5z"/><path fill="none" stroke="#000" stroke-width="2.4" d="M1348 1002.5h6l5-13h7"/><text x="12" y="317" text-anchor="middle" font-size="22" font-weight="bold" fill="#a800a8">3</text><text x="12" y="507.7" text-anchor="middle" font-size="22" font-weight="bold" fill="#009000">4</text><text x="11.5" y="884" text-anchor="middle" font-size="22" font-weight="bold" fill="#fff">1</text><path fill="none" stroke="#000" stroke-width="1.9" d="M63.5 498l2.2 10"/><text x="101.0" y="951.5" font-size="22" fill="#1818f4" stroke="#1818f4" stroke-width="0.6" textLength="72.6" lengthAdjust="spacing">25.0 V</text><text x="306.4" y="951.5" font-size="22" fill="#20dde6" stroke="#20dde6" stroke-width="0.6" textLength="62.2" lengthAdjust="spacing">100 V</text><text x="508.0" y="951.5" font-size="22" fill="#a010a8" stroke="#a010a8" stroke-width="0.6" textLength="74.0" lengthAdjust="spacing">10.0 V</text><text x="711.0" y="951.5" font-size="22" fill="#009c00" stroke="#009c00" stroke-width="0.6" textLength="75.4" lengthAdjust="spacing">2.00 A</text><text x="231.9" y="983.8" font-size="22" fill="#000" stroke="#000" stroke-width="0.6" textLength="62.0" lengthAdjust="spacing">Value</text><text x="360.9" y="983.8" font-size="22" fill="#000" stroke="#000" stroke-width="0.6" textLength="61.4" lengthAdjust="spacing">Mean</text><text x="482.8" y="983.8" font-size="22" fill="#000" stroke="#000" stroke-width="0.6" textLength="43.2" lengthAdjust="spacing">Min</text><text x="602.7" y="983.8" font-size="22" fill="#000" stroke="#000" stroke-width="0.6" textLength="44.6" lengthAdjust="spacing">Max</text><text x="721.7" y="983.8" font-size="22" fill="#000" stroke="#000" stroke-width="0.6" textLength="89.9" lengthAdjust="spacing">Std Dev</text><text x="83.0" y="1010" font-size="22" fill="#20dde6" stroke="#20dde6" stroke-width="0.6" textLength="46.6" lengthAdjust="spacing">RMS</text><text x="232.4" y="1010" font-size="22" fill="#20dde6" stroke="#20dde6" stroke-width="0.6" textLength="73.2" lengthAdjust="spacing">80.3 V</text><text x="360.9" y="1010" font-size="22" fill="#20dde6" stroke="#20dde6" stroke-width="0.6" textLength="51.1" lengthAdjust="spacing">80.3</text><text x="481.4" y="1010" font-size="22" fill="#20dde6" stroke="#20dde6" stroke-width="0.6" textLength="50.2" lengthAdjust="spacing">80.3</text><text x="601.8" y="1010" font-size="22" fill="#20dde6" stroke="#20dde6" stroke-width="0.6" textLength="50.2" lengthAdjust="spacing">80.3</text><text x="720.8" y="1010" font-size="22" fill="#20dde6" stroke="#20dde6" stroke-width="0.6" textLength="73.2" lengthAdjust="spacing">46.9m</text><text x="83.0" y="1036.6" font-size="22" fill="#009c00" stroke="#009c00" stroke-width="0.6" textLength="46.6" lengthAdjust="spacing">RMS</text><text x="232.4" y="1036.6" font-size="22" fill="#009c00" stroke="#009c00" stroke-width="0.6" textLength="81.2" lengthAdjust="spacing">532mA</text><text x="360.9" y="1036.6" font-size="22" fill="#009c00" stroke="#009c00" stroke-width="0.6" textLength="63.6" lengthAdjust="spacing">531m</text><text x="481.4" y="1036.6" font-size="22" fill="#009c00" stroke="#009c00" stroke-width="0.6" textLength="63.4" lengthAdjust="spacing">531m</text><text x="601.8" y="1036.6" font-size="22" fill="#009c00" stroke="#009c00" stroke-width="0.6" textLength="62.8" lengthAdjust="spacing">532m</text><text x="722.2" y="1036.6" font-size="22" fill="#009c00" stroke="#009c00" stroke-width="0.6" textLength="58.6" lengthAdjust="spacing">194µ</text><text x="83.0" y="1062.6" font-size="22" fill="#1818f4" stroke="#1818f4" stroke-width="0.6" textLength="61.2" lengthAdjust="spacing">Mean</text><text x="234.4" y="1062.6" font-size="22" fill="#1818f4" stroke="#1818f4" stroke-width="0.6" textLength="62.2" lengthAdjust="spacing">192 V</text><text x="362.6" y="1062.6" font-size="22" fill="#1818f4" stroke="#1818f4" stroke-width="0.6" textLength="40.4" lengthAdjust="spacing">192</text><text x="482.8" y="1062.6" font-size="22" fill="#1818f4" stroke="#1818f4" stroke-width="0.6" textLength="40.4" lengthAdjust="spacing">192</text><text x="603.2" y="1062.6" font-size="22" fill="#1818f4" stroke="#1818f4" stroke-width="0.6" textLength="39.6" lengthAdjust="spacing">192</text><text x="723.6" y="1062.6" font-size="22" fill="#1818f4" stroke="#1818f4" stroke-width="0.6" textLength="70.4" lengthAdjust="spacing">12.0m</text><text x="83.0" y="1088.6" font-size="22" fill="#a010a8" stroke="#a010a8" stroke-width="0.6" textLength="120.6" lengthAdjust="spacing">Frequency</text><text x="231.6" y="1088.6" font-size="22" fill="#a010a8" stroke="#a010a8" stroke-width="0.6" textLength="111.2" lengthAdjust="spacing">166.7kHz</text><text x="360.9" y="1088.6" font-size="22" fill="#000" stroke="#000" stroke-width="0.6" textLength="246.9" lengthAdjust="spacing">Low signal amplitude</text><text x="82.4" y="1114" font-size="22" fill="#a010a8" stroke="#a010a8" stroke-width="0.6" textLength="72.2" lengthAdjust="spacing">+Duty</text><text x="232.4" y="1114" font-size="22" fill="#a010a8" stroke="#a010a8" stroke-width="0.6" textLength="89.2" lengthAdjust="spacing">96.67 %</text><text x="360.9" y="1114" font-size="22" fill="#000" stroke="#000" stroke-width="0.6" textLength="246.9" lengthAdjust="spacing">Low signal amplitude</text><text x="864.0" y="1003.6" font-size="22" fill="#000" stroke="#000" stroke-width="0.6" textLength="82.4" lengthAdjust="spacing">10.0ms</text><text x="885.6" y="1028" font-size="22" fill="#ff9900" stroke="#ff9900" stroke-width="0.6" textLength="92.0" lengthAdjust="spacing">49.90 %</text><text x="1090.9" y="1003.6" font-size="22" fill="#000" stroke="#000" stroke-width="0.6" textLength="109.5" lengthAdjust="spacing">10.0MS/s</text><text x="1090.9" y="1028" font-size="22" fill="#000" stroke="#000" stroke-width="0.6" textLength="116.5" lengthAdjust="spacing">1M points</text><text x="1416.2" y="1003.8" font-size="22" fill="#000" stroke="#000" stroke-width="0.6" textLength="71.4" lengthAdjust="spacing">12.0 V</text><text x="1342.8" y="1091.6" font-size="22" fill="#000" stroke="#000" stroke-width="0.6" textLength="147.0" lengthAdjust="spacing">18 Nov 2024</text><text x="1342.8" y="1115.6" font-size="22" fill="#000" stroke="#000" stroke-width="0.6" textLength="100.8" lengthAdjust="spacing">11:25:07</text><text x="35.8" y="315.6" font-size="22" fill="#000" stroke="#000" stroke-width="0.6" textLength="80.5" lengthAdjust="spacing">VgateA</text><text x="35.8" y="882.7" font-size="22" fill="#000" stroke="#000" stroke-width="0.6" textLength="48.0" lengthAdjust="spacing">VDC</text><text x="36.7" y="505.6" font-size="22" fill="#000" stroke="#000" stroke-width="0.6" textLength="47.1" lengthAdjust="spacing">IA  C</text></svg>
</body></html>
